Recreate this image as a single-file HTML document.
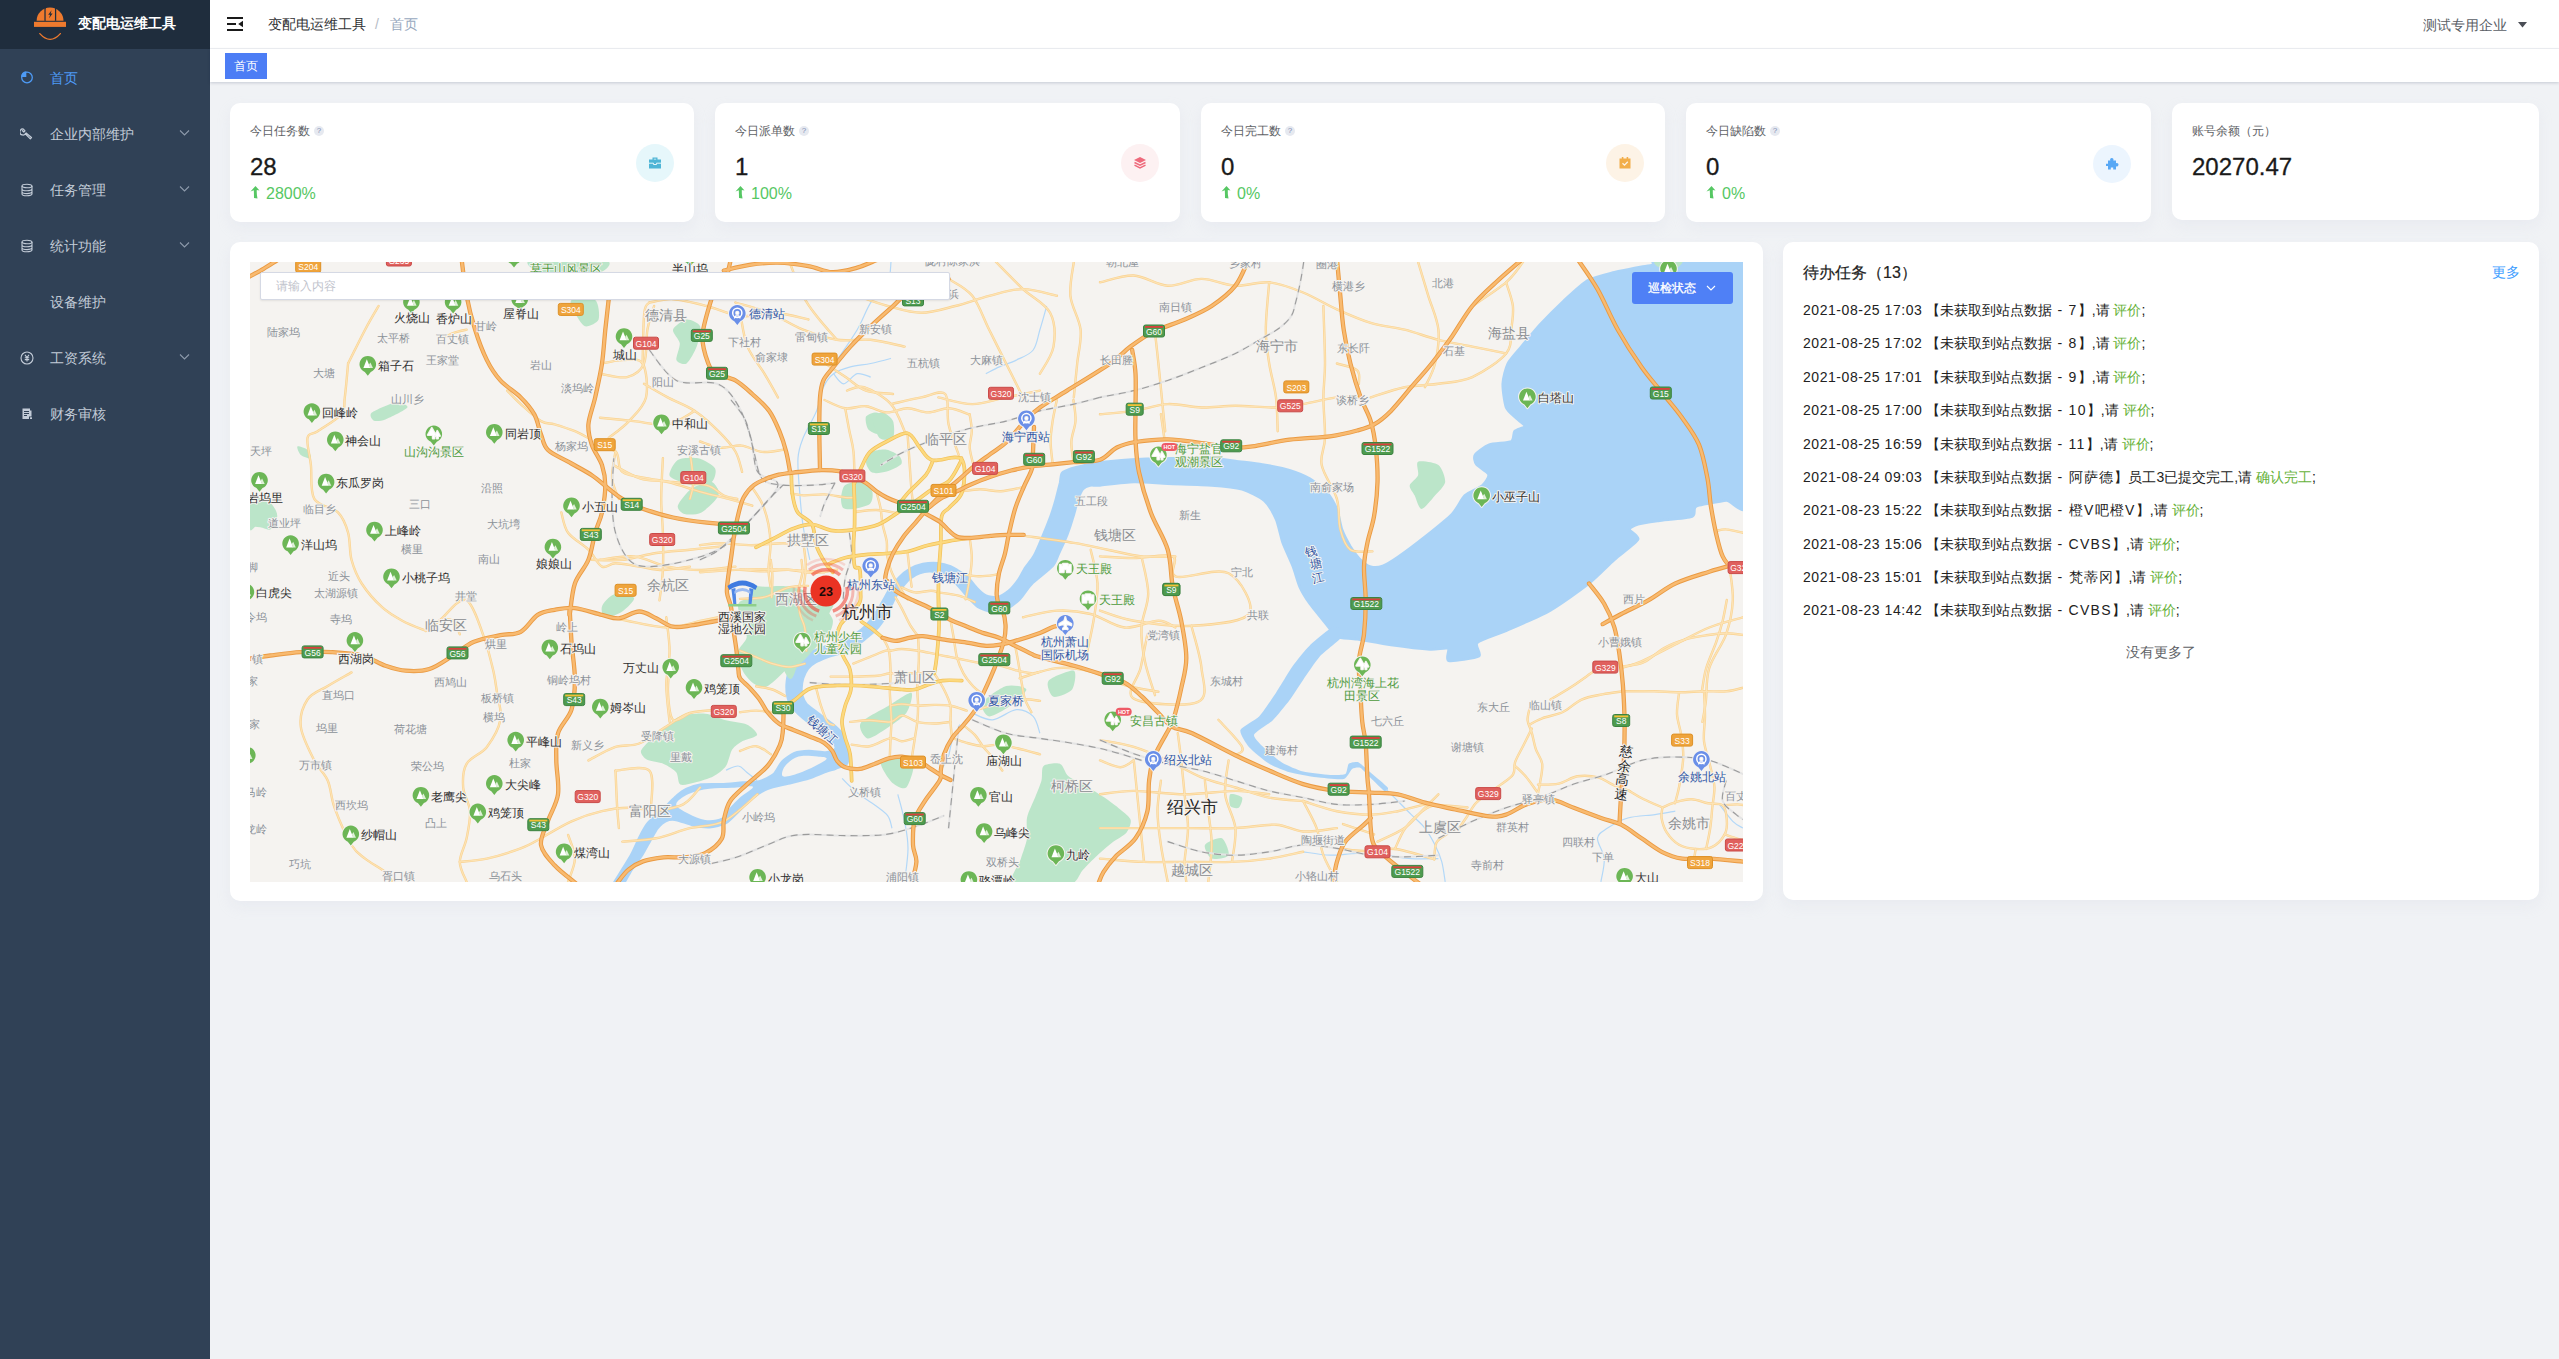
<!DOCTYPE html>
<html lang="zh">
<head>
<meta charset="utf-8">
<title>变配电运维工具</title>
<style>
*{box-sizing:border-box;margin:0;padding:0}
html,body{width:2559px;height:1359px;overflow:hidden;background:#f0f2f5;font-family:"Liberation Sans",sans-serif;color:#303133}
.abs{position:absolute;white-space:nowrap}
#side{position:absolute;left:0;top:0;width:210px;height:1359px;background:#304156}
#logo{position:absolute;left:0;top:0;width:210px;height:49px;background:#1f2d3d}
#logo .t{position:absolute;left:78px;top:0;line-height:46px;font-size:14px;font-weight:bold;color:#fff;white-space:nowrap}
.mi{position:absolute;left:0;width:210px;height:56px;line-height:56px;font-size:14px;color:#c3ccd8;white-space:nowrap}
.mi span{position:absolute;left:50px;top:0}
.mi svg.ic{position:absolute;left:20px;top:21px}
.mi svg.ar{position:absolute;left:179px;top:23px}
.mi.on{color:#4e9bf6}
#head{position:absolute;left:210px;top:0;width:2349px;height:49px;background:#fff;border-bottom:1px solid #f0f2f5}
#tags{position:absolute;left:210px;top:49px;width:2349px;height:33px;background:#fff;box-shadow:0 1px 3px rgba(0,20,60,.18)}
#tag{position:absolute;left:15px;top:4px;width:42px;height:26px;background:#4c7df5;color:#fff;font-size:12px;line-height:26px;text-align:center}
.card{position:absolute;background:#fff;border-radius:10px;box-shadow:0 6px 14px rgba(200,205,220,.18)}
.card .lb{position:absolute;left:20px;top:19px;font-size:12px;line-height:18px;color:#606266;white-space:nowrap}
.card .q{position:absolute;top:23px;width:10px;height:10px;border-radius:5px;background:#e6e9f0;color:#7f8fb5;font-size:8px;line-height:10px;text-align:center}
.card .num{position:absolute;left:20px;top:48px;font-size:24px;line-height:32px;color:#1a1a1a;white-space:nowrap;-webkit-text-stroke:.3px #1a1a1a}
.card .pc{position:absolute;left:36px;top:81px;font-size:16px;line-height:20px;color:#56c763;white-space:nowrap}
.card svg.up{position:absolute;left:20px;top:83px}
.card .cir{position:absolute;top:41px;width:38px;height:38px;border-radius:19px}
.li{position:absolute;left:20px;font-size:14px;line-height:20px;color:#222;white-space:nowrap}
.li b{font-weight:normal;color:#67b23a}
.li u{text-decoration:none;letter-spacing:.55px}
.li i{font-style:normal;letter-spacing:1.300px}
</style>
</head>
<body>
<!--SIDEBAR-->
<div id="side">
 <div id="logo">
  <svg class="abs" style="left:33px;top:6px" width="34" height="36" viewBox="0 0 34 36">
   <path d="M3.600 14.800 A13.450 13.200 0 0 1 30.500 14.800 Z" fill="#ee7a2e"/>
   <rect x="1" y="15.800" width="32" height="5.100" fill="#ee7a2e"/>
   <rect x="11.400" y="0" width="1.400" height="14.800" fill="#1f2d3d"/>
   <rect x="21.800" y="0" width="1.400" height="14.800" fill="#1f2d3d"/>
   <path d="M12.800 14.300 V3.400 a1.500 1.500 0 0 1 1.500 -1.500 h6 a1.500 1.500 0 0 1 1.500 1.500 V14.300z" fill="#ee7a2e"/>
   <path d="M18.600 4.200 L15.200 8.800 h1.900 l-1 3.400 l3.500 -4.800 h-2z" fill="#1f2d3d"/>
   <path d="M6.800 27.600 Q17.100 39 27.400 27.600" fill="none" stroke="#ee7a2e" stroke-width="1.300" stroke-linecap="round"/>
  </svg>
  <div class="t">变配电运维工具</div>
 </div>
 <div class="mi on" style="top:50px">
  <svg class="ic" style="top:20px" width="14" height="14" viewBox="0 0 14 14"><circle cx="7" cy="7.500" r="5.300" fill="none" stroke="#4e9bf6" stroke-width="1.300"/><path d="M6.300 1.200 A6 6 0 0 0 1 7 h5.300z" fill="#4e9bf6"/></svg>
  <span>首页</span></div>
 <div class="mi" style="top:106px">
  <svg class="ic" width="14" height="14" viewBox="0 0 14 14"><path d="M5.800 5.800 A3 3 0 1 1 3.200 2 L5 3.800 L3.800 5 L2 3.300 M5.800 5.800 L11.500 10.500 L10.300 11.800 L5 6.500" fill="none" stroke="#c3ccd8" stroke-width="1.200" stroke-linejoin="round"/></svg>
  <span>企业内部维护</span>
  <svg class="ar" width="11" height="8" viewBox="0 0 11 8"><path d="M1 1.500 L5.500 6 L10 1.500" fill="none" stroke="#8d9aab" stroke-width="1.100"/></svg></div>
 <div class="mi" style="top:162px">
  <svg class="ic" width="14" height="14" viewBox="0 0 14 14"><g fill="none" stroke="#c3ccd8" stroke-width="1.100"><ellipse cx="7" cy="3" rx="5" ry="1.800"/><path d="M2 3 v8 c0 1 2.200 1.800 5 1.800 s5-.8 5-1.800 v-8 M2 6 c0 1 2.200 1.800 5 1.800 s5-.8 5-1.800 M2 8.800 c0 1 2.200 1.800 5 1.800 s5-.8 5-1.800"/></g></svg>
  <span>任务管理</span>
  <svg class="ar" width="11" height="8" viewBox="0 0 11 8"><path d="M1 1.500 L5.500 6 L10 1.500" fill="none" stroke="#8d9aab" stroke-width="1.100"/></svg></div>
 <div class="mi" style="top:218px">
  <svg class="ic" width="14" height="14" viewBox="0 0 14 14"><g fill="none" stroke="#c3ccd8" stroke-width="1.100"><ellipse cx="7" cy="3" rx="5" ry="1.800"/><path d="M2 3 v8 c0 1 2.200 1.800 5 1.800 s5-.8 5-1.800 v-8 M2 6 c0 1 2.200 1.800 5 1.800 s5-.8 5-1.800 M2 8.800 c0 1 2.200 1.800 5 1.800 s5-.8 5-1.800"/></g></svg>
  <span>统计功能</span>
  <svg class="ar" width="11" height="8" viewBox="0 0 11 8"><path d="M1 1.500 L5.500 6 L10 1.500" fill="none" stroke="#8d9aab" stroke-width="1.100"/></svg></div>
 <div class="mi" style="top:274px"><span>设备维护</span></div>
 <div class="mi" style="top:330px">
  <svg class="ic" width="14" height="14" viewBox="0 0 14 14"><g fill="none" stroke="#c3ccd8" stroke-width="1.100"><circle cx="7" cy="7" r="6"/><path d="M5 3.800 L7 6.500 L9 3.800 M7 6.500 V10.500 M4.800 6.800 H9.200 M4.800 8.600 H9.200"/></g></svg>
  <span>工资系统</span>
  <svg class="ar" width="11" height="8" viewBox="0 0 11 8"><path d="M1 1.500 L5.500 6 L10 1.500" fill="none" stroke="#8d9aab" stroke-width="1.100"/></svg></div>
 <div class="mi" style="top:386px">
  <svg class="ic" width="14" height="14" viewBox="0 0 14 14"><path d="M2.500 1.500 h7.500 v2 h1.500 v8.500 h-9z" fill="#c3ccd8"/><path d="M4 4.500 h5 M4 6.500 h5 M4 8.500 h3" stroke="#304156" stroke-width="1"/><rect x="9" y="9.500" width="3" height="2.500" fill="#304156"/><rect x="10" y="10.300" width="2" height="1.700" fill="#c3ccd8"/></svg>
  <span>财务审核</span></div>
</div>
<!--HEADER-->
<div id="head">
 <svg class="abs" style="left:17px;top:17px" width="17" height="14" viewBox="0 0 17 14"><path d="M0 1 H16 M0 7 H9 M0 13 H16" stroke="#1a1a1a" stroke-width="1.800" fill="none"/><path d="M16 3.800 V10.200 L11.200 7z" fill="#1a1a1a"/></svg>
 <div class="abs" style="left:58px;top:0;line-height:48px;font-size:14px;color:#303133">变配电运维工具</div>
 <div class="abs" style="left:165px;top:0;line-height:48px;font-size:14px;color:#b6bcc6">/</div>
 <div class="abs" style="left:180px;top:0;line-height:48px;font-size:14px;color:#97a8be">首页</div>
 <div class="abs" style="left:2213px;top:0;line-height:50px;font-size:14px;color:#5a5e66">测试专用企业</div>
 <svg class="abs" style="left:2308px;top:22px" width="9" height="6" viewBox="0 0 9 6"><path d="M0 0 H9 L4.500 5.500z" fill="#4a4d55"/></svg>
</div>
<div id="tags"><div id="tag">首页</div></div>
<!--CARDS-->
<div class="card" style="left:230px;top:103px;width:464px;height:119px">
 <div class="lb">今日任务数</div><div class="q" style="left:84px">?</div>
 <div class="num">28</div>
 <svg class="up" width="10" height="13" viewBox="0 0 10 13"><path d="M5.500 0 L9.500 4.500 L6.800 4 Q6.500 8.500 7.500 12.500 L4 12 Q4 8 3.800 4.200 L0.500 5.500z" fill="#56c763"/></svg>
 <div class="pc">2800%</div>
 <div class="cir" style="left:406px;background:#e6f7fb"><svg style="position:absolute;left:12px;top:12px" width="14" height="14" viewBox="0 0 14 14"><path d="M1 3.500 h12 v9 h-12z M4.500 3.500 v-2 h5 v2 h-1.300 v-.8 h-2.400 v.8z" fill="#4fb5d6"/><path d="M1 7.200 h4.500 v1.300 h3 v-1.300 h4.500" fill="none" stroke="#e6f7fb" stroke-width="1"/></svg></div>
</div>
<div class="card" style="left:715px;top:103px;width:465px;height:119px">
 <div class="lb">今日派单数</div><div class="q" style="left:84px">?</div>
 <div class="num">1</div>
 <svg class="up" width="10" height="13" viewBox="0 0 10 13"><path d="M5.500 0 L9.500 4.500 L6.800 4 Q6.500 8.500 7.500 12.500 L4 12 Q4 8 3.800 4.200 L0.500 5.500z" fill="#56c763"/></svg>
 <div class="pc">100%</div>
 <div class="cir" style="left:406px;background:#fdf1f2"><svg style="position:absolute;left:12px;top:12px" width="14" height="14" viewBox="0 0 14 14"><path d="M7 1 L13 4 L7 7 L1 4z" fill="#ee6a7c"/><path d="M1.500 6.500 L7 9.200 L12.500 6.500 M1.500 9.200 L7 12 L12.500 9.200" fill="none" stroke="#ee6a7c" stroke-width="1.500"/></svg></div>
</div>
<div class="card" style="left:1201px;top:103px;width:464px;height:119px">
 <div class="lb">今日完工数</div><div class="q" style="left:84px">?</div>
 <div class="num">0</div>
 <svg class="up" width="10" height="13" viewBox="0 0 10 13"><path d="M5.500 0 L9.500 4.500 L6.800 4 Q6.500 8.500 7.500 12.500 L4 12 Q4 8 3.800 4.200 L0.500 5.500z" fill="#56c763"/></svg>
 <div class="pc">0%</div>
 <div class="cir" style="left:405px;background:#fdf3e6"><svg style="position:absolute;left:12px;top:12px" width="14" height="14" viewBox="0 0 14 14"><path d="M1.500 2.500 h11 v10 h-11z M3.800 1 h1.600 v2.600 h-1.600z M8.600 1 h1.600 v2.600 h-1.600z" fill="#f2ae4a"/><path d="M4.500 7.300 L6.500 9.200 L9.800 5.800" fill="none" stroke="#fdf3e6" stroke-width="1.300"/></svg></div>
</div>
<div class="card" style="left:1686px;top:103px;width:465px;height:119px">
 <div class="lb">今日缺陷数</div><div class="q" style="left:84px">?</div>
 <div class="num">0</div>
 <svg class="up" width="10" height="13" viewBox="0 0 10 13"><path d="M5.500 0 L9.500 4.500 L6.800 4 Q6.500 8.500 7.500 12.500 L4 12 Q4 8 3.800 4.200 L0.500 5.500z" fill="#56c763"/></svg>
 <div class="pc">0%</div>
 <div class="cir" style="left:407px;top:42px;background:#ecf5fe"><svg style="position:absolute;left:12px;top:12px" width="14" height="14" viewBox="0 0 14 14"><path d="M3 3.500 h2.300 a1.700 1.700 0 1 1 3 0 h2.700 v2.800 a1.700 1.700 0 1 1 0 3 v3.200 h-2.800 v-2 h-2.400 v2 h-2.800 v-3.500 h-2 v-2.300 h2z" fill="#58a8f5"/></svg></div>
</div>
<div class="card" style="left:2172px;top:103px;width:367px;height:117px">
 <div class="lb">账号余额（元）</div>
 <div class="num">20270.47</div>
</div>
<!--MAPCARD-->
<div class="card" style="left:230px;top:242px;width:1533px;height:659px"></div>
<div id="map" style="position:absolute;left:250px;top:262px;width:1493px;height:620px;overflow:hidden;background:#f5f3f0">
<svg width="1493" height="620" viewBox="0 0 1493 620" style="position:absolute;left:0;top:0;font-family:'Liberation Sans',sans-serif">
<path d="M812 211C813.4 209.3 818.8 207.4 821.4 206.5C823.9 205.6 830.5 204.1 833.8 203.4C837.2 202.6 843.3 201 850 200.2C856.7 199.5 882.7 197.4 891.5 197C900.3 196.5 917.4 196.4 925.3 196.3C933.2 196.1 954.9 195.7 959.2 195.6C963.4 195.5 958.6 195.2 961.7 195.6C964.7 196 979.4 198.2 985.4 199C991.3 199.8 1006.1 201.3 1012.4 202.4C1018.8 203.4 1034 206.5 1039.5 208.1C1045 209.8 1055.5 214 1059.8 216.6C1064.2 219.2 1073.6 226.6 1076.7 230.1C1079.9 233.7 1085.1 242.7 1086.9 247C1088.7 251.4 1090.4 263 1092 267.4C1093.6 271.7 1098.3 280.7 1100.4 284.3C1102.6 287.8 1108.2 295.4 1110.6 297.8C1113 300.2 1118.2 303.9 1120.7 304.6C1123.3 305.3 1129.4 305 1132.6 303.9C1135.7 302.8 1142.9 298.5 1147.8 295.1C1152.7 291.7 1168.6 279.8 1174.9 274.8C1181.2 269.8 1197.3 256.9 1202 252.1C1206.6 247.3 1211.3 236.9 1214.8 233.5C1218.4 230.2 1229.7 225.8 1232.4 223.4C1235.2 220.9 1239.2 215 1238.5 212.5C1237.8 210.1 1227.9 204.7 1226.3 202.4C1224.7 200.1 1223.5 195.2 1225 192.9C1226.5 190.6 1235 184.3 1239.2 182.7C1243.4 181.2 1258.2 180.9 1261.2 179.4C1264.1 177.8 1263 171 1264.6 169.2C1266.1 167.4 1274.5 165.6 1274.7 164.1C1274.9 162.6 1268.4 158.5 1266.3 156.4C1264.1 154.2 1257.7 149.5 1256.1 145.5C1254.5 141.5 1252.5 127 1252.7 121.8C1252.9 116.7 1255.6 105.9 1257.8 101.5C1260 97.2 1267.6 89.1 1271.3 84.6C1275.1 80.1 1285 67.9 1289.9 62.6C1294.9 57.3 1308.1 44.1 1313.6 38.9C1319.2 33.8 1331.4 22 1337.3 18.6C1343.2 15.3 1359.7 11.5 1364.4 10.2C1369.1 8.8 1374.8 8.1 1377.9 7.4C1381.1 6.8 1388.5 5.3 1391.5 4.7C1394.4 4.2 1401.3 3.7 1403.3 2.7C1405.3 1.8 1397.1 -2.7 1408.4 -3.4C1419.6 -4.1 1489.1 -31.1 1499.8 -3.4C1510.4 24.4 1502.5 206.3 1499.8 234.5C1497 262.8 1482.3 237.4 1476.1 238.6C1469.8 239.7 1450.2 242.5 1446.3 244.3C1442.3 246.2 1446.7 252.8 1442.2 254.5C1437.8 256.2 1414.7 258 1408.4 258.9C1402.1 259.8 1391.4 261.3 1388.1 262.3C1384.7 263.3 1379.6 265.6 1379.6 267.4C1379.6 269.1 1389.9 274 1388.1 277.5C1386.3 281.1 1370.1 292.7 1364.4 297.8C1358.7 302.9 1346.5 315.6 1339 321.5C1331.5 327.4 1309.8 343 1300.1 348.6C1290.4 354.1 1264.6 365.1 1256.1 368.9C1247.6 372.6 1230.5 377.8 1227.3 380.7C1224.2 383.7 1232.4 392.2 1229 394.3C1225.7 396.4 1202.2 399.6 1198.6 398.7C1194.9 397.8 1200.1 387.8 1197.9 386.5C1195.7 385.2 1186.6 387.9 1180 387.5C1173.3 387.1 1149.5 384.3 1141 383.1C1132.6 381.9 1113.5 378.3 1107.2 377.3C1100.9 376.4 1090.1 376.2 1086.9 375C1083.7 373.8 1083.3 371.1 1080.1 367.2C1077 363.3 1063.4 346.7 1059.8 341.8C1056.3 336.9 1051.6 329.2 1049.7 324.9C1047.7 320.5 1044.9 309.7 1042.9 304.6C1040.9 299.4 1034.7 286.4 1032.7 280.9C1030.8 275.4 1028.2 262.1 1026 257.2C1023.8 252.3 1018.1 242.1 1014.1 238.6C1010.2 235.1 998.3 229.2 992.1 227.4C986 225.6 970.4 224 961.7 223.4C953 222.7 926.8 222.1 917.7 221.7C908.6 221.3 891.7 219.8 883.8 220C875.9 220.2 855.1 222.9 850 223.4C844.9 223.8 842.1 223 840 223.5C838 223.9 834.2 225.6 832.8 227.2C831.4 228.9 829.1 234.4 828 237.6C826.9 240.7 824.7 250.1 823.4 254.2C822.2 258.3 818.9 268.5 817.2 272.9C815.5 277.2 810.6 287.9 808.9 291.5C807.2 295.2 805.9 300.4 802.7 304C799.5 307.6 785.2 318.4 781.4 322.3C777.6 326.1 772.9 334 770.1 336.9C767.3 339.7 760.3 345.1 757.1 346.6C753.9 348.1 746 350 742.6 349.8C739.2 349.6 731 346.8 728 345C725 343.1 719.3 336.5 716.7 333.6C714 330.8 708.2 323.1 705.3 320.7C702.5 318.2 695.2 313.9 692.4 312.6C689.5 311.2 683.7 309.5 681 309.3C678.4 309.1 672.2 310.1 669.7 311C667.3 311.8 662.1 314.9 660 316.6C657.9 318.3 653.6 323.4 651.9 325.5C650.2 327.7 646.9 332.6 645.4 335.2C643.9 337.9 640.5 345.4 638.9 348.2C637.4 351 634.2 357.1 632.5 359.5C630.8 362 626.5 367.2 624.4 369.2C622.3 371.3 617.1 375.4 614.7 377.3C612.2 379.2 606.2 383.8 603.3 385.4C600.5 387 593.4 390 590.4 391.1C587.4 392.2 580.3 394.1 577.4 395.1C574.6 396.2 568.4 398.7 566.1 400C563.8 401.3 559.5 404.6 558 406.5C556.5 408.4 553.9 413.9 553.1 416.2C552.4 418.5 551.6 423.8 551.5 425.9C551.4 428 551.8 432.1 552.3 434C552.9 435.9 555 440.4 556.4 442.1C557.8 443.8 562.4 447 564.5 448.6C566.6 450.2 571.9 454.2 574.2 455.9C576.5 457.6 581.8 461.3 583.9 463.1C586 464.9 590.5 469.2 592 471.2C593.5 473.3 596.1 478.7 596.9 480.9C597.6 483.2 598.3 488.7 598.5 490.7C598.6 492.6 598.4 496.6 598.1 497.9C597.9 499.3 597.7 501.3 596.3 502.3C594.9 503.3 588.6 505.5 585.9 506.5C583.3 507.4 576.6 509.5 573.5 510.6C570.3 511.8 563.1 515.1 559 516.4C554.8 517.7 543.1 520.4 538.2 521.6C533.4 522.8 521.8 525 517.5 526.8C513.1 528.6 504.3 534.5 500.9 537.2C497.5 539.8 491.3 546.8 488.4 549.6C485.5 552.4 479.4 559.2 476 561C472.6 562.8 463.3 564.9 459.4 565.2C455.5 565.4 446.7 564 442.8 563.1C438.9 562.3 429.3 558.4 426.2 557.9C423 557.4 418 558 415.8 559C413.6 559.9 409.2 564.2 407.5 566.2C405.8 568.3 403.1 573.4 401.3 576.6C399.5 579.7 394.2 589.6 392 593.2C389.7 596.8 383.9 604.2 381.6 607.7C379.3 611.2 374.4 621.5 372.2 623.3C370.1 625.1 362.9 625.1 362.9 623.3C362.9 621.5 370.1 611.3 372.2 607.7C374.4 604.1 379.5 596 381.6 592.1C383.6 588.3 388.1 578 389.9 574.5C391.7 571 395.1 564.7 397.1 562.1C399.2 559.4 405.1 554 407.5 551.7C409.9 549.4 415.7 544.4 417.9 542.4C420.1 540.3 424 535.9 426.2 534.1C428.4 532.2 433.7 528.1 436.6 526.8C439.5 525.5 447 523.2 451.1 522.6C455.2 522.1 467 522.5 471.8 522.2C476.7 522 488.2 520.9 492.6 520.6C496.9 520.3 505.5 520.5 509.2 519.5C512.8 518.6 521 514.6 523.7 512.3C526.4 510 529.6 502.3 532 499.8C534.4 497.4 541.3 492.4 544.4 491.1C547.6 489.9 555.3 489.1 559 489C562.6 489 572.6 490.6 575.6 490.5C578.5 490.3 583.1 488.5 584.3 487.8C585.4 487.1 586.1 485.5 585.5 484.2C584.9 482.8 580.9 478 579 476.1C577.2 474.2 571.8 469.9 569.3 468C566.9 466.1 560.5 461.8 558 459.9C555.5 458 550.3 453.7 548.3 451.8C546.3 449.9 542.3 445.8 541 443.7C539.7 441.6 537.8 436.5 537.3 434C536.8 431.5 536.5 425.3 536.6 422.7C536.8 420 537.6 413.8 538.6 411.3C539.6 408.9 543.2 403.7 545 401.6C546.9 399.5 552.5 395 554.8 393.5C557 392 561.8 389.8 564.5 388.7C567.1 387.5 574.4 384.9 577.4 383.8C580.4 382.7 587.5 380.1 590.4 378.9C593.2 377.8 599.3 375.4 601.7 374.1C604.2 372.8 609.3 369.3 611.4 367.6C613.5 365.9 617.6 361.8 619.5 359.5C621.4 357.3 625.9 350.8 627.6 348.2C629.3 345.5 632.6 339.5 634.1 336.9C635.6 334.2 638.9 328 640.6 325.5C642.3 323.1 646.4 318 648.7 315.8C650.9 313.6 657.2 308.5 660 306.9C662.8 305.3 669.7 302.7 672.9 302C676.2 301.4 684.3 301 687.5 301.2C690.7 301.5 697.1 303 700.5 304.5C703.9 306 713.6 311.7 716.7 314.2C719.7 316.6 724.1 323.3 726.4 325.5C728.6 327.8 733.6 332.5 736.1 333.6C738.5 334.8 744.8 335.8 747.4 335.2C750.1 334.7 756.3 330.8 758.8 328.8C761.2 326.7 766.6 320.1 768.5 317.4C770.4 314.8 773.1 308.9 774.9 306.1C776.8 303.3 782 297.2 784 293.6C786.1 290 790.4 279.5 792.3 274.9C794.3 270.3 799 258.5 800.6 254.2C802.2 249.8 804.7 241.5 805.8 237.6C806.9 233.7 809.2 224.1 810 221C810.7 217.9 810.7 212.7 812 211Z" fill="#aad3f7" stroke="#aad3f7" stroke-width="2.5" stroke-linejoin="round"/>
<path d="M535.1 504C537.7 500.7 543.2 496.2 548.6 494.6C553.9 493.1 562.6 494.3 567.3 494.6C571.9 495 576.9 495.2 576.6 496.7C576.3 498.3 569.9 501.6 565.2 504C560.5 506.4 553.9 509.5 548.6 511.2C543.2 513 535.3 515.6 533 514.3C530.8 513.1 532.5 507.3 535.1 504Z" fill="#f5f3f0"/>
<path d="M426.2 542.4C426.2 539.1 433.1 534.6 438.6 532C444.2 529.4 452.1 527.8 459.4 526.8C466.6 525.8 474.9 526.1 482.2 525.8C489.5 525.4 501.6 523.2 502.9 524.7C504.3 526.3 494.3 531.6 490.5 535.1C486.7 538.6 483.2 542 480.1 545.5C477 548.9 476 553.8 471.8 555.8C467.7 557.9 460.8 558.6 455.2 557.9C449.7 557.2 443.5 554.3 438.6 551.7C433.8 549.1 426.2 545.6 426.2 542.4Z" fill="#f5f3f0"/>
<path d="M1083.5 364.7C1080.1 365.8 1063.9 379.5 1059.8 383.4C1055.8 387.2 1046.3 398.9 1042.9 403.7C1039.5 408.4 1029.4 425.7 1026 430.7C1022.6 435.8 1012.6 450.7 1009.1 454.4C1005.5 458.1 991.5 464.9 990.4 468C989.4 471 996 481.5 998.9 484.9C1001.8 488.3 1015.1 499.3 1019.2 501.8C1023.3 504.3 1034.8 508.9 1039.5 510.3C1044.3 511.6 1061.2 514.7 1066.6 515.3C1072 516 1090.1 517.9 1093.7 517C1097.2 516.2 1100.4 508 1102.1 506.9C1103.8 505.8 1108.7 505 1110.6 505.9C1112.4 506.8 1118.4 513.7 1120.7 516C1123.1 518.3 1132.6 527.9 1134.3 528.9C1136 529.8 1139.2 527.5 1137.7 525.5C1136.1 523.5 1122 511.8 1119 509.3C1116.1 506.7 1109.9 500.9 1107.9 500.1C1105.8 499.4 1100 500.6 1098.7 501.8C1097.5 503 1097.2 510.8 1095.4 512C1093.5 513.1 1084.4 513.2 1080.1 513C1075.9 512.7 1057.8 510.8 1053.1 509.6C1048.3 508.4 1036.5 503.3 1032.7 501.1C1029 498.9 1018.7 490.4 1015.8 487.6C1012.9 484.8 1003.3 475.9 1004 473C1004.7 470.1 1019 462 1022.6 458.5C1026.1 455 1036.5 442.2 1039.5 438.2C1042.6 434.1 1050 422.3 1053.1 417.9C1056.1 413.5 1065.9 398.7 1070 394.2C1074 389.7 1092.3 376.1 1093.7 373.2C1095 370.3 1086.9 363.7 1083.5 364.7Z" fill="#aad3f7"/>
<path d="M1136 527.2C1137.9 529.2 1143.6 534.8 1147.8 539C1152 543.3 1156.8 548.1 1161.3 552.6C1165.9 557.1 1170.9 561 1174.9 566.1C1178.8 571.2 1182.2 577.4 1185 583C1187.9 588.7 1190.1 593.8 1191.8 599.9C1193.5 606.1 1194.6 616.6 1195.2 619.9" fill="none" stroke="#b3d8f8" stroke-width="1.2"/>
<path d="M1053.1 589.8C1057.6 590.4 1071.1 592.9 1080.1 593.2C1089.2 593.5 1098.2 591.5 1107.2 591.5C1116.2 591.5 1125.2 592.3 1134.3 593.2C1143.3 594 1152.3 596 1161.3 596.6C1170.4 597.1 1183.9 596.6 1188.4 596.6" fill="none" stroke="#b3d8f8" stroke-width="1.2"/>
<path d="M1350.9 619.9C1351.4 616 1354.8 603.8 1354.2 596.6C1353.7 589.3 1346.9 581.3 1347.5 576.3C1348 571.2 1352.6 569.5 1357.6 566.1C1362.7 562.7 1370 558.2 1377.9 556C1385.8 553.7 1397.1 553.7 1405 552.6C1412.9 551.4 1421.9 549.7 1425.3 549.2" fill="none" stroke="#b3d8f8" stroke-width="1.2"/>
<path d="M1469.3 542.4C1471.6 545.2 1478.9 555.4 1482.8 559.3C1486.8 563.3 1491.3 565 1493 566.1" fill="none" stroke="#b3d8f8" stroke-width="1.2"/>
<path d="M559.8 297.8C558.7 292.2 554.7 275.2 553.1 264C551.4 252.7 550.5 241.4 549.7 230.1C548.8 218.8 547.4 205.3 548 196.3C548.5 187.3 550 183.9 553.1 176C556.2 168.1 563.2 157.4 566.6 148.9C570 140.4 570.5 131.4 573.4 125.2C576.2 119 579 115.1 583.5 111.7C588 108.3 594.2 106.6 600.4 104.9C606.6 103.2 614 102.9 620.7 101.5C627.5 100.1 637.7 97.3 641 96.4" fill="none" stroke="#b3d8f8" stroke-width="1.2"/>
<path d="M583.5 111.7C585.2 113.4 589.7 121.8 593.7 121.8C597.6 121.8 602.7 112.8 607.2 111.7C611.7 110.6 618.5 114.5 620.7 115.1" fill="none" stroke="#b3d8f8" stroke-width="1.2"/>
<path d="M796.7 44C795.6 47.9 792.2 60.4 789.9 67.7C787.7 75 787.1 82.9 783.2 88C779.2 93.1 771.9 95.3 766.3 98.1C760.6 101 754.4 102.7 749.3 104.9C744.3 107.2 738.1 110.6 735.8 111.7" fill="none" stroke="#b3d8f8" stroke-width="1.2"/>
<path d="M641 0C640.5 3.4 641 13.5 637.7 20.3C634.3 27.1 625.8 32.7 620.7 40.6C615.7 48.5 612.8 58.1 607.2 67.7C601.6 77.3 590.3 93.1 586.9 98.1" fill="none" stroke="#b3d8f8" stroke-width="1.2"/>
<path d="M722.3 451C725.6 452.2 735.2 458.4 742.6 457.8C749.9 457.2 759.5 448.2 766.3 447.7C773 447.1 779.2 450.5 783.2 454.4C787.1 458.4 788.8 468.5 789.9 471.3" fill="none" stroke="#b3d8f8" stroke-width="1.2"/>
<path d="M647.8 532.3C648.9 536.8 652.9 550.3 654.6 559.3C656.3 568.4 658 576.3 658 586.4C658 596.5 655.1 614.3 654.6 619.9" fill="none" stroke="#b3d8f8" stroke-width="1.2"/>
<path d="M476 508.1C478 507.4 485 503.6 488.4 504C491.9 504.3 493.6 507.8 496.7 510.2C499.8 512.6 505.4 517.1 507.1 518.5" fill="none" stroke="#b3d8f8" stroke-width="1.2"/>
<path d="M592.2 516.4C593.5 517.8 597 521.6 600.5 524.7C603.9 527.8 608.8 532 612.9 535.1C617.1 538.2 621.2 540.3 625.4 543.4C629.5 546.5 635 550 637.8 553.8C640.6 557.6 641.3 564.1 642 566.2" fill="none" stroke="#b3d8f8" stroke-width="1.2"/>
<path d="M710 462.5C708.7 465.2 704.1 473.5 702.1 479.1C700.1 484.6 700 490.5 698 495.7C695.9 500.9 691.1 507.8 689.7 510.2" fill="none" stroke="#b3d8f8" stroke-width="1.2"/>
<path d="M501.9 332C499.4 320.1 513.8 325.7 518.5 324.7C523.2 323.7 532.4 323.8 537.1 324.3C541.8 324.8 550.3 326.9 553.7 328.5C557.2 330 560.3 333.9 563.1 336.1C565.8 338.4 571.9 342.6 574.5 345.5C577.1 348.4 582.1 354.6 582.8 357.9C583.5 361.2 581.6 367 579.7 370.4C577.7 373.7 571.2 379.6 568.3 382.8C565.4 386 560.7 391.3 557.9 394.2C555.1 397.1 550.3 402 547.5 404.6C544.7 407.2 543.2 423.6 537.1 413.9C531.1 404.3 504.4 343.9 501.9 332Z" fill="#bbe5c9"/>
<path d="M493.6 338C505 335.2 566.2 336.3 577.6 338C589.1 339.7 580.8 347.1 579.7 350.4C578.6 353.8 572.1 358.7 569.3 362.9C566.6 367 562.3 376.9 559 381.6C555.6 386.3 548.3 393.9 544.4 398.2C540.6 402.5 533.8 410.1 529.9 413.7C526 417.3 519 424.2 515.4 425.1C511.8 426.1 506 423.2 502.9 421C499.9 418.8 494.6 412.7 492.6 408.5C490.6 404.4 487.5 394.3 488 389.9C488.6 385.4 496.2 379.5 496.7 375.3C497.3 371.2 492.6 363.7 492.2 358.7C491.7 353.8 482.2 340.8 493.6 338Z" fill="#bbe5c9"/>
<path d="M430.3 454.2C435.9 452.2 449.1 451.1 455.2 451.7C461.3 452.2 470.4 456.9 476 458.3C481.5 459.8 492.6 460.5 496.7 462.5C500.9 464.4 507.6 470.6 507.1 472.9C506.5 475.1 495.9 477.1 492.6 479.1C489.3 481 484.4 484.1 482.2 487.4C480 490.7 478.5 500.4 476 504C473.5 507.6 467.7 512.1 463.5 514.3C459.4 516.6 449.3 519.5 444.9 520.6C440.4 521.7 432.8 524 430.3 522.6C427.8 521.3 428.4 513 426.2 510.2C424 507.4 417.6 503.6 413.7 501.9C409.9 500.2 400.2 499.4 397.1 497.8C394.1 496.1 390.6 491.9 390.9 489.5C391.2 487 396.2 482.1 399.2 479.1C402.3 476 409.6 470 413.7 466.6C417.9 463.3 424.8 456.2 430.3 454.2Z" fill="#bbe5c9"/>
<path d="M616 154.6C617.1 152.4 623.6 150.2 626.3 150.4C629.1 150.7 635.2 154.5 636.7 156.7C638.2 158.9 638.9 165 637.8 167C636.7 169.1 631.1 172.2 628.4 172.2C625.8 172.2 619.7 169.4 618 167C616.4 164.7 614.9 156.8 616 154.6Z" fill="#bbe5c9"/>
<path d="M616 200.2C616 197.5 619.4 191.5 622.2 189.9C625 188.2 633.1 187.2 636.7 187.8C640.3 188.3 647.2 192.1 649.2 194C651.1 196 652.9 200.2 651.2 202.3C649.6 204.4 640.6 208.5 636.7 209.6C632.8 210.7 625 211.9 622.2 210.6C619.4 209.4 616 203 616 200.2Z" fill="#bbe5c9"/>
<path d="M591.1 235.5C591.4 232.5 592.5 225.1 595.2 223.1C598 221 608.2 219.1 611.8 220C615.4 220.8 621.1 226.4 622.2 229.3C623.3 232.2 622.6 239.4 620.1 241.7C617.6 244.1 607.1 246.4 603.5 246.9C599.9 247.5 594.8 247.4 593.2 245.9C591.5 244.4 590.8 238.6 591.1 235.5Z" fill="#bbe5c9"/>
<path d="M419.4 213.2C418.9 210.3 424 200.2 427.8 198C431.7 195.7 443.2 195.2 448.1 196.3C453.1 197.4 463.3 203.3 465.1 206.4C466.9 209.6 464.4 217.7 461.7 220C459 222.2 448.8 223.4 444.8 223.4C440.7 223.4 434.6 221.3 431.2 220C427.8 218.6 419.8 216.1 419.4 213.2Z" fill="#bbe5c9"/>
<path d="M427.8 243.7C428.7 240.3 436.9 229.9 441.4 226.7C445.9 223.6 458.1 219.1 461.7 220C465.3 220.9 469.8 229.4 468.4 233.5C467.1 237.6 456 247.9 451.5 250.4C447 252.9 437.8 253 434.6 252.1C431.4 251.2 426.9 247 427.8 243.7Z" fill="#bbe5c9"/>
<path d="M450 217.9C451.4 214.4 457.9 218.4 460.4 220C462.9 221.5 468.7 226.4 468.7 229.3C468.7 232.2 462.9 239.5 460.4 241.7C457.9 243.9 451.4 249.1 450 245.9C448.6 242.7 448.6 221.3 450 217.9Z" fill="#bbe5c9"/>
<path d="M423 67.7C423.9 64.5 433 58 436.6 57.5C440.2 57.1 448.7 60.7 450.1 64.3C451.5 67.9 448.5 79.6 446.7 84.6C444.9 89.6 439.3 99.7 436.6 101.5C433.9 103.3 427.3 100.8 426.4 98.1C425.5 95.4 430.2 85.3 429.8 81.2C429.3 77.2 422.1 70.8 423 67.7Z" fill="#bbe5c9"/>
<path d="M321.5 37.9C324.2 36.2 341.6 35.3 345.2 37.9C348.8 40.5 349.9 54 348.6 57.5C347.2 61.1 338.2 65.2 335 64.3C331.9 63.4 326.7 54.3 324.9 50.8C323.1 47.2 318.8 39.6 321.5 37.9Z" fill="#bbe5c9"/>
<path d="M280.9 -1.7C289.9 -3.2 345.9 -3.2 355.3 -1.7C364.8 -0.2 356.5 7.7 352 9.5C347.4 11.2 330.1 11.5 321.5 11.5C312.9 11.5 293.1 11.2 287.7 9.5C282.2 7.7 271.9 -0.2 280.9 -1.7Z" fill="#bbe5c9"/>
<path d="M121.8 150.6C124.8 148.2 140.8 141.1 145.5 140.4C150.3 139.8 158.7 143.3 157.4 145.5C156 147.8 139.9 155.7 135.4 157.4C130.9 159.1 125.3 159.3 123.5 158.4C121.7 157.5 118.9 153 121.8 150.6Z" fill="#bbe5c9"/>
<path d="M0 236.9C2.3 233.1 13.3 236.3 16.9 238.6C20.5 240.8 26.6 250 27.1 253.8C27.5 257.7 23 266 20.3 267.4C17.6 268.7 9.5 264 6.8 264C4.1 264 0.9 271 0 267.4C-0.9 263.7 -2.3 240.7 0 236.9Z" fill="#bbe5c9"/>
<path d="M47.4 184.4C48.3 183.8 55.7 186.2 57.5 187.8C59.3 189.4 61.8 195.6 60.9 196.3C60 197 52.6 194.5 50.8 192.9C49 191.3 46.5 185.1 47.4 184.4Z" fill="#bbe5c9"/>
<path d="M622.7 155.7C623.1 152.3 630.1 150.1 632.8 150.6C635.6 151 641.6 155.7 643 159.1C644.4 162.4 644.8 173.7 643 176C641.2 178.2 632.2 178.7 629.5 176C626.8 173.3 622.2 159.1 622.7 155.7Z" fill="#bbe5c9"/>
<path d="M793.6 504C796.1 501.8 806.8 500.5 810.2 501.9C813.5 503.3 814.9 511.3 818.5 514.3C822.1 517.4 832.4 522 837.1 524.7C841.8 527.5 849.3 532.1 853.7 535.1C858.2 538.1 866.7 544.5 870.3 547.5C873.9 550.6 879.9 554.9 880.7 557.9C881.5 561 879 567.3 876.6 570.4C874.1 573.4 865.9 577.7 862 580.7C858.2 583.8 851.4 589.6 847.5 593.2C843.6 596.8 836.9 603.7 833 607.7C829.1 611.7 827.9 621.2 818.5 623.3C809.1 625.3 768.8 626.7 762.4 623.3C756.1 619.8 768.8 603.6 770.7 597.3C772.7 591.1 776.1 582.1 777 576.6C777.8 571.1 775.9 561.4 777 555.8C778.1 550.3 783.3 540.1 785.3 535.1C787.2 530.1 790.4 522.6 791.5 518.5C792.6 514.3 791.1 506.2 793.6 504Z" fill="#bbe5c9"/>
<path d="M1168.1 199.7C1170.8 198.3 1184.8 200.3 1188.4 203.1C1192 205.8 1195.6 215.9 1195.2 220C1194.7 224 1188.2 229.9 1185 233.5C1181.9 237.1 1174.2 247 1171.5 247C1168.8 247 1166.3 236.7 1164.7 233.5C1163.2 230.4 1159.2 226.1 1159.7 223.4C1160.1 220.7 1167 216.4 1168.1 213.2C1169.2 210 1165.4 201 1168.1 199.7Z" fill="#bbe5c9"/>
<path d="M610.6 461.2C613.3 456.9 630.9 448.3 637.7 444.3C644.4 440.2 658.9 429.8 661.3 430.7C663.8 431.6 659.9 446.1 656.3 451C652.7 456 639.5 464.6 634.3 468C629.1 471.3 620.5 477.3 617.4 476.4C614.2 475.5 607.9 465.5 610.6 461.2Z" fill="#bbe5c9"/>
<path d="M630.9 498.4C633.8 495.6 659.7 494.8 663 498.4C666.4 502 659.2 522.7 656.3 525.5C653.3 528.3 644.4 523 641 519.4C637.7 515.8 628 501.2 630.9 498.4Z" fill="#bbe5c9"/>
<path d="M732.4 440.9C734.7 436.8 750.2 425.8 756.1 424C762 422.2 776 424.6 776.4 427.4C776.9 430.1 764.5 440.7 759.5 444.3C754.5 447.9 742.8 454.9 739.2 454.4C735.6 454 730.2 445 732.4 440.9Z" fill="#bbe5c9"/>
<path d="M798.4 418.9C801.1 415.4 820.6 407.6 823.8 408.7C826.9 409.9 824.8 423.9 822.1 427.4C819.4 430.8 806.6 435.9 803.5 434.8C800.3 433.7 795.7 422.4 798.4 418.9Z" fill="#bbe5c9"/>
<path d="M352 344.4C353.1 341.4 359.5 333.7 363.8 332.6C368.1 331.5 383 333.7 384.1 336C385.2 338.2 376.1 346.9 372.3 349.5C368.4 352.1 358 356.3 355.3 355.6C352.6 354.9 350.8 347.5 352 344.4Z" fill="#bbe5c9"/>
<path d="M0 239.5C2.7 236.8 16.7 239.2 20.3 241.2C23.9 243.3 28 251.6 27.1 254.8C26.2 257.9 17.1 264 13.5 264.9C9.9 265.8 1.8 264.9 0 261.5C-1.8 258.1 -2.7 242.2 0 239.5Z" fill="#bbe5c9"/>
<path d="M1405 -1.7C1408.2 -2.6 1429.4 -2.8 1432.1 -1.7C1434.8 -0.6 1428.5 5.9 1425.3 6.8C1422.2 7.7 1411.1 6.2 1408.4 5.1C1405.7 3.9 1401.9 -0.8 1405 -1.7Z" fill="#bbe5c9"/>
<path d="M954.9 583C956.3 580.3 968.7 574.9 971.8 576.3C975 577.6 980 590.5 978.6 593.2C977.2 595.9 964.8 597.9 961.7 596.6C958.5 595.2 953.6 585.7 954.9 583Z" fill="#bbe5c9"/>
<path d="M980.3 532.3C981.9 531.1 991 533.8 992.1 535.6C993.3 537.5 990.3 544.7 988.8 545.8C987.2 546.9 981.4 545.9 980.3 544.1C979.2 542.3 978.7 533.4 980.3 532.3Z" fill="#bbe5c9"/>
<g fill="none" stroke-linecap="round" stroke-linejoin="round"><g stroke="#f9d291" stroke-width="2.400"><path d="M850 20.3C855.6 19.2 872.6 13 883.8 13.5C895.1 14.1 906.4 23.1 917.7 23.7C929 24.3 940.2 16.9 951.5 16.9C962.8 16.9 974.1 23.1 985.4 23.7C996.6 24.3 1007.9 19.2 1019.2 20.3C1030.5 21.4 1041.8 25.9 1053.1 30.5C1064.3 35 1075.6 42.3 1086.9 47.4C1098.2 52.5 1109.5 57.5 1120.7 60.9C1132 64.3 1143.3 64.9 1154.6 67.7C1165.9 70.5 1177.1 75 1188.4 77.8C1199.7 80.7 1211 82.3 1222.3 84.6C1233.5 86.9 1250.5 90.2 1256.1 91.4"/><path d="M1019.2 20.3C1018.6 28.2 1015.8 54.1 1015.8 67.7C1015.8 81.2 1017.5 90.2 1019.2 101.5C1020.9 112.8 1024.6 124.1 1026 135.4C1027.4 146.6 1027.4 163.6 1027.7 169.2"/><path d="M1073.4 44C1073.6 53.6 1075 86.3 1075 101.5C1075 116.8 1073.4 123 1073.4 135.4C1073.4 147.8 1075.3 164.7 1075 176C1074.8 187.3 1069.7 192.9 1071.7 203.1C1073.6 213.2 1083.8 226.2 1086.9 236.9C1090 247.6 1088 258.9 1090.3 267.4C1092.5 275.8 1095.1 284 1100.4 287.7C1105.8 291.3 1118.8 289.1 1122.4 289.4"/><path d="M850 152.3C855.6 151.7 872.6 150.6 883.8 148.9C895.1 147.2 906.4 142.7 917.7 142.1C929 141.6 940.2 145.2 951.5 145.5C962.8 145.8 973 143.8 985.4 143.8C997.8 143.8 1014.7 145.8 1026 145.5C1037.3 145.2 1042.9 143.8 1053.1 142.1C1063.2 140.4 1077.3 136.5 1086.9 135.4C1096.5 134.2 1106.6 135.4 1110.6 135.4"/><path d="M1168.1 0C1169.8 5.6 1174.9 22.6 1178.3 33.8C1181.7 45.1 1187.3 56.4 1188.4 67.7C1189.5 79 1187.3 91.9 1185 101.5C1182.8 111.1 1176.6 121.3 1174.9 125.2"/><path d="M1256.1 20.3C1257.2 24.3 1262 36.1 1262.9 44C1263.7 51.9 1262.3 59.8 1261.2 67.7C1260.1 75.6 1262.6 83.5 1256.1 91.4C1249.6 99.3 1233.5 110 1222.3 115.1C1211 120.1 1199.7 120.1 1188.4 121.8C1177.1 123.5 1165.9 123 1154.6 125.2C1143.3 127.5 1126.4 133.7 1120.7 135.4"/><path d="M1273 0C1270.2 3.4 1264.6 13 1256.1 20.3C1247.6 27.6 1227.9 40 1222.3 44"/><path d="M1086.9 101.5C1090.3 102.7 1103.5 104.9 1107.2 108.3C1110.9 111.7 1108.6 119.6 1108.9 121.8"/><path d="M910.9 152.3 L914.3 176"/><path d="M850 294.4C855.6 294.7 871.7 296.1 883.8 296.1C896 296.1 915.7 291.3 922.8 294.4C929.8 297.5 916.8 311.9 926.1 314.7C935.5 317.6 966.5 305.1 978.6 311.3C990.7 317.6 1005.1 343.2 998.9 352C992.7 360.7 960.6 362.7 941.4 363.8C922.2 364.9 899.1 361.3 883.8 358.7C868.6 356.2 855.6 350.3 850 348.6"/><path d="M941.4 363.8C943.1 370.9 950.4 393.4 951.5 406.1C952.7 418.8 959.4 434.9 948.1 439.9C936.9 445 893.4 442.2 883.8 436.6C874.3 430.9 888.4 416.8 890.6 406.1C892.9 395.4 896.3 377.9 897.4 372.3"/><path d="M1493 270.7C1490.2 270.2 1480.6 267.6 1476.1 267.4C1471.6 267.1 1467.6 268.8 1465.9 269"/><path d="M1493 355.3C1487.4 357 1470.4 361 1459.2 365.5C1447.9 370 1436.6 376.8 1425.3 382.4C1414 388.1 1400.5 395.4 1391.5 399.3C1382.4 403.3 1374.6 405 1371.2 406.1"/><path d="M1479.5 304.6C1480 310.2 1483.4 327.1 1482.8 338.4C1482.3 349.7 1480 361 1476.1 372.3C1472.1 383.5 1462.5 394.8 1459.2 406.1C1455.8 417.4 1456.9 431 1455.8 439.9C1454.6 448.9 1453 456.6 1452.4 459.9"/><path d="M850 478.1C855.6 479.2 872.6 481.5 883.8 484.9C895.1 488.3 906.4 493.3 917.7 498.4C929 503.5 940.2 510.8 951.5 515.3C962.8 519.9 974.1 522.1 985.4 525.5C996.6 528.9 1007.9 533.4 1019.2 535.6C1030.5 537.9 1047.4 538.5 1053.1 539"/><path d="M883.8 498.4C884.4 504.1 886.1 521 887.2 532.3C888.4 543.5 889.5 554.8 890.6 566.1C891.7 577.4 893.4 594.3 894 599.9"/><path d="M927.8 471.3C928.4 475.9 930.1 488.3 931.2 498.4C932.3 508.6 933.5 521 934.6 532.3C935.7 543.5 938 554.8 938 566.1C938 577.4 934.9 591 934.6 599.9C934.3 608.9 936 616.6 936.3 619.9"/><path d="M978.6 498.4C978 504.1 974.1 521 975.2 532.3C976.3 543.5 984.2 554.8 985.4 566.1C986.5 577.4 982.5 594.3 982 599.9"/><path d="M850 532.3C855.6 531.7 869.7 528.9 883.8 528.9C897.9 528.9 917.7 532.3 934.6 532.3C951.5 532.3 971.3 528.9 985.4 528.9C999.5 528.9 1013.6 531.7 1019.2 532.3"/><path d="M850 566.1C856.8 566.1 875.9 566.1 890.6 566.1C905.3 566.1 922.2 566.1 938 566.1C953.8 566.1 970.7 566.7 985.4 566.1C1000 565.5 1014.7 562.2 1026 562.7C1037.3 563.3 1042.9 568.9 1053.1 569.5C1063.2 570.1 1081.3 566.7 1086.9 566.1"/><path d="M850 596.6C857.3 597.1 879.9 599.4 894 599.9C908.1 600.5 919.9 599.9 934.6 599.9C949.3 599.9 967.9 600.5 982 599.9C996.1 599.4 1007.4 598.3 1019.2 596.6C1031.1 594.9 1047.4 590.9 1053.1 589.8"/><path d="M1053.1 539C1055.3 543.5 1063.2 557.1 1066.6 566.1C1070 575.1 1070 584.2 1073.4 593.2C1076.7 602.1 1084.6 615.5 1086.9 619.9"/><path d="M968.4 457.8C972.4 462.3 989.3 479 992.1 484.9C995 490.8 986.5 491.9 985.4 493.3"/><path d="M1127.5 579.6C1132 577.4 1146.7 571.7 1154.6 566.1C1162.5 560.5 1169.2 551.4 1174.9 545.8C1180.5 540.2 1186.2 534.5 1188.4 532.3"/><path d="M1053.1 539C1058.7 540.7 1075.6 546.9 1086.9 549.2C1098.2 551.4 1110.6 552.6 1120.7 552.6C1130.9 552.6 1138.8 550.9 1147.8 549.2C1156.8 547.5 1170.4 543.5 1174.9 542.4"/><path d="M910.9 518.7C910.4 523.8 907.5 538.5 907.5 549.2C907.5 559.9 909.2 571.2 910.9 583C912.6 594.8 916.6 613.8 917.7 619.9"/><path d="M954.9 518.7C955.5 523.8 957.2 538.5 958.3 549.2C959.4 559.9 961.7 571.2 961.7 583C961.7 594.8 958.9 613.8 958.3 619.9"/><path d="M850 498.4C853.4 499.5 864.7 505.2 870.3 505.2C875.9 505.2 881.6 499.5 883.8 498.4"/><path d="M350 111.7C354.5 112.2 369.7 116.8 377.1 115.1C384.4 113.4 390.6 109.4 394 101.5C397.4 93.6 395.7 77.3 397.4 67.7C399.1 58.1 403 47.9 404.1 44"/><path d="M394 121.8C397.9 124.1 409.2 130.9 417.7 135.4C426.1 139.9 436.3 143.3 444.8 148.9C453.2 154.5 461.7 162.4 468.4 169.2C475.2 176 481.4 182.7 485.4 189.5C489.3 196.3 491 206.4 492.1 209.8"/><path d="M350 155.7C355.6 156.2 372.6 157.9 383.8 159.1C395.1 160.2 407.5 164.1 417.7 162.4C427.8 160.8 440.2 151.2 444.8 148.9"/><path d="M363.5 203.1C368 205.3 381.6 213.8 390.6 216.6C399.6 219.4 407.5 217.7 417.7 220C427.8 222.2 441.4 227.3 451.5 230.1C461.7 232.9 470.1 234.6 478.6 236.9C487.1 239.2 498.3 242.5 502.3 243.7"/><path d="M485.4 40.6C491 42.3 507.9 46.3 519.2 50.8C530.5 55.3 541.8 63.2 553.1 67.7C564.3 72.2 575.6 76.1 586.9 77.8C598.2 79.5 609.5 76.7 620.7 77.8C632 79 648.9 83.5 654.6 84.6"/><path d="M539.5 0C541.8 5.6 548.5 24.8 553.1 33.8C557.6 42.9 560.9 46.8 566.6 54.1C572.2 61.5 583.5 73.9 586.9 77.8"/><path d="M607.2 33.8C612.3 35.5 626.9 41.2 637.7 44C648.4 46.8 660.2 50.8 671.5 50.8C682.8 50.8 694.1 46.8 705.3 44C716.6 41.2 727.9 36.7 739.2 33.8C750.5 31 761.7 27.1 773 27.1C784.3 27.1 801.2 32.7 806.9 33.8"/><path d="M698.6 16.9C702.5 19.7 715.5 25.4 722.3 33.8C729 42.3 733.5 56.4 739.2 67.7C744.8 79 750.5 90.2 756.1 101.5C761.7 112.8 770.2 129.7 773 135.4"/><path d="M746 0C750.5 4.5 764 18.6 773 27.1C782.1 35.5 795 41.2 800.1 50.8C805.2 60.4 805.2 74.5 803.5 84.6C801.8 94.8 792.2 107.2 789.9 111.7"/><path d="M823.8 0C823.2 5.6 819.3 22.6 820.4 33.8C821.5 45.1 829.4 56.4 830.6 67.7C831.7 79 828.3 90.2 827.2 101.5C826 112.8 824.4 129.7 823.8 135.4"/><path d="M688.4 135.4C694.1 136.5 711 142.1 722.3 142.1C733.5 142.1 744.8 137.6 756.1 135.4C767.4 133.1 784.3 129.7 789.9 128.6"/><path d="M641 142.1C646.1 141 662.5 137.1 671.5 135.4C680.5 133.7 690.7 127.5 695.2 132C699.7 136.5 696.3 152.3 698.6 162.4C700.8 172.6 707 187.8 708.7 192.9"/><path d="M597 128.6C599.9 128 606.6 123 614 125.2C621.3 127.5 634.3 134.8 641 142.1C647.8 149.5 652.3 164.7 654.6 169.2"/><path d="M776.4 274.1C784.3 275.2 810.3 278.6 823.8 280.9C837.3 283.1 846.4 285.4 857.6 287.7C868.9 289.9 880.2 293.3 891.5 294.4C902.8 295.6 919.7 294.4 925.3 294.4"/><path d="M840.7 287.7C841.8 293.3 846.9 310.2 847.5 321.5C848 332.8 845.8 344.1 844.1 355.3C842.4 366.6 838.5 383.5 837.3 389.2"/><path d="M773 355.3C778.7 354.2 795.6 349.1 806.9 348.6C818.1 348 829.4 349.1 840.7 352C852 354.8 863.3 364.4 874.6 365.5C885.8 366.6 899.9 358.7 908.4 358.7C916.9 358.7 922.5 364.4 925.3 365.5"/><path d="M891.5 294.4C892.6 300.6 898.2 319.8 898.2 331.7C898.2 343.5 892 354.2 891.5 365.5C890.9 376.8 892.6 388.1 894.9 399.3C897.1 410.6 903.3 427.5 905 433.2"/><path d="M769.6 416.3C775.8 414.6 795 407.2 806.9 406.1C818.7 405 829.4 406.7 840.7 409.5C852 412.3 863.3 419.6 874.6 423C885.8 426.4 902.8 428.7 908.4 429.8"/><path d="M350 297.8C355.6 297.2 372.6 293.3 383.8 294.4C395.1 295.6 406.4 302.3 417.7 304.6C429 306.8 440.2 308 451.5 308C462.8 308 479.7 305.1 485.4 304.6"/><path d="M350 352C354.5 353.1 365.8 356.5 377.1 358.7C388.4 361 405.3 365.5 417.7 365.5C430.1 365.5 443.1 360.4 451.5 358.7C460 357 465.6 355.9 468.4 355.3"/><path d="M905 70.4C905.6 75.6 907.3 90.7 908.4 101.5C909.5 112.4 910.7 124.1 911.8 135.4C912.9 146.6 914.6 163.6 915.2 169.2"/><path d="M98.1 101.5C97.6 107.2 95.9 126.9 94.8 135.4C93.6 143.8 95.9 146.6 91.4 152.3C86.9 157.9 73.3 165.3 67.7 169.2C62 173.2 58.7 170.3 57.5 176C56.4 181.6 59.8 192.9 60.9 203.1C62 213.2 59.8 229 64.3 236.9C68.8 244.8 82.3 244.8 88 250.4C93.6 256.1 95.9 262.8 98.1 270.7C100.4 278.6 99.3 289.4 101.5 297.8C103.8 306.3 106.6 313.6 111.7 321.5C116.8 329.4 125.2 339 132 345.2C138.8 351.4 145 354.8 152.3 358.7C159.6 362.7 172 367.2 176 368.9"/><path d="M128.6 44C126.3 47.9 120.1 58.1 115.1 67.7C110 77.3 101 95.9 98.1 101.5"/><path d="M216.6 67.7C214.3 68.2 207.6 69.4 203.1 71.1C198.5 72.8 191.8 76.7 189.5 77.8"/><path d="M257.2 128.6C259.5 130.9 265.1 137.1 270.7 142.1C276.4 147.2 285.4 155.7 291 159.1C296.7 162.4 298.9 160.8 304.6 162.4C310.2 164.1 319.2 167 324.9 169.2C330.5 171.5 336.2 174.9 338.4 176"/><path d="M341.8 182.7C345.8 183.9 360.4 185 365.5 189.5C370.6 194 366.6 205.3 372.3 209.8C377.9 214.3 390.9 214.9 399.3 216.6C407.8 218.3 413.4 218.8 423 220C432.6 221.1 448.4 221.1 456.9 223.4C465.3 225.6 468.7 231.3 473.8 233.5C478.9 235.8 485.1 236.3 487.3 236.9"/><path d="M352 101.5C355.3 101 365.5 98.1 372.3 98.1C379 98.1 388.6 95.3 392.6 101.5C396.5 107.7 398.2 125.8 396 135.4C393.7 145 385.2 152.3 379 159.1C372.8 165.8 362.1 173.2 358.7 176"/><path d="M392.6 101.5C392.9 93.1 393.1 60.9 394.3 50.8C395.4 40.6 398.5 42.3 399.3 40.6"/><path d="M365.5 189.5C364.9 194 361.5 208.7 362.1 216.6C362.7 224.5 367.8 233.5 368.9 236.9"/><path d="M311.3 250.4C312.5 253.8 313.6 264.5 318.1 270.7C322.6 276.9 332.8 282 338.4 287.7C344.1 293.3 347.4 302.3 352 304.6C356.5 306.8 359.3 301.2 365.5 301.2C371.7 301.2 381.3 303.5 389.2 304.6C397.1 305.7 404.4 308 412.9 308C421.3 308 435.4 305.1 439.9 304.6"/><path d="M412.9 196.3C412.6 203.1 411.2 224.5 411.2 236.9C411.2 249.3 412.6 258.9 412.9 270.7C413.2 282.6 413.4 296.7 412.9 308C412.3 319.2 410.1 333.3 409.5 338.4"/><path d="M439.9 189.5C440.5 194.6 443.3 212.1 443.3 220C443.3 227.9 440.5 234.1 439.9 236.9"/><path d="M341.8 297.8C346.9 297.8 361.5 298.9 372.3 297.8C383 296.7 394.8 292.7 406.1 291C417.4 289.4 428.7 288.8 439.9 287.7C451.2 286.5 468.1 284.8 473.8 284.3"/><path d="M176 368.9C178.2 367.2 185 360.4 189.5 358.7C194 357 199.7 356.5 203.1 358.7C206.4 361 208.7 370 209.8 372.3"/><path d="M416.3 355.3C416.8 361 419.6 377.9 419.6 389.2C419.6 400.5 416.3 411.2 416.3 423C416.3 434.8 419.1 453.8 419.6 459.9"/><path d="M399.3 40.6C403.3 40 413.4 36.7 423 37.2C432.6 37.8 445.6 41.2 456.9 44C468.1 46.8 479.4 53 490.7 54.1C502 55.3 513.3 50.2 524.6 50.8C535.8 51.3 552.8 56.4 558.4 57.5"/><path d="M490.7 54.1C491.8 59.2 493.5 75 497.5 84.6C501.4 94.2 509.3 103.2 514.4 111.7C519.5 120.1 525.7 131.4 527.9 135.4"/><path d="M575.3 101.5C578.7 103.8 588.9 110.6 595.6 115.1C602.4 119.6 608 125.8 615.9 128.6C623.8 131.4 638.5 131.4 643 132"/><path d="M101.5 410.4C97.6 412.7 85.2 419.5 77.8 424C70.5 428.5 62 430.7 57.5 437.5C53 444.3 49.6 454.4 50.8 464.6C51.9 474.7 59.8 489.4 64.3 498.4C68.8 507.4 74.5 510.8 77.8 518.7C81.2 526.6 80.7 535.1 84.6 545.8C88.6 556.5 96.5 574.6 101.5 583C106.6 591.5 109.4 592.1 115.1 596.6C120.7 601.1 130.9 606.2 135.4 610.1C139.9 614 141 618.3 142.1 619.9"/><path d="M236.9 383.4C238 387.9 242 402.5 243.7 410.4C245.4 418.3 245.9 422.8 247 430.7C248.2 438.6 252.1 448.8 250.4 457.8C248.7 466.8 242.5 477.6 236.9 484.9C231.3 492.2 220.5 495 216.6 501.8C212.6 508.6 212.6 517.6 213.2 525.5C213.8 533.4 219.4 540.7 220 549.2C220.5 557.6 218.3 567.8 216.6 576.3C214.9 584.7 209.8 592.7 209.8 599.9C209.8 607.2 215.5 616.6 216.6 619.9"/><path d="M209.8 599.9C214.3 599.4 226.7 598.8 236.9 596.6C247 594.3 261.7 589.8 270.7 586.4C279.8 583 287.7 578 291 576.3"/><path d="M291 576.3C296.1 573.4 311.3 563.8 321.5 559.3C331.7 554.8 342.4 551.4 352 549.2C361.5 546.9 370 545.8 379 545.8C388.1 545.8 401.6 548.6 406.1 549.2"/><path d="M338.4 498.4C342.9 496.2 357 487.7 365.5 484.9C374 482.1 380.7 484.9 389.2 481.5C397.6 478.1 407.8 469.7 416.3 464.6C424.7 459.5 430.4 453.9 439.9 451C449.5 448.2 468.1 448.2 473.8 447.7"/><path d="M365.5 508.6C365.8 514.8 366.6 536.2 367.2 545.8C367.8 555.4 368.6 562.7 368.9 566.1"/><path d="M365.5 508.6C371.1 508.6 393.4 502.4 399.3 508.6C405.3 514.8 400.7 539.6 401 545.8"/><path d="M419.6 403.7C419.4 408.2 417.4 421.7 418 430.7C418.5 439.8 419.4 454.4 423 457.8C426.7 461.2 437.1 452.2 439.9 451"/><path d="M318.1 572.9C319.2 576.8 324.9 588.7 324.9 596.6C324.9 604.4 319.2 616 318.1 619.9"/><path d="M372.3 579.6C377.9 579.1 394.8 578.5 406.1 576.3C417.4 574 428.7 568.9 439.9 566.1C451.2 563.3 462.5 565 473.8 559.3C485.1 553.7 502 536.8 507.6 532.3"/><path d="M406.1 549.2C410.6 548.1 425.8 546.4 433.2 542.4C440.5 538.5 447.3 528.3 450.1 525.5"/><path d="M176 368.8C178.2 367.1 182.7 363.7 189.5 358.7C196.3 353.6 208.7 334.2 216.6 338.3C224.5 342.5 233.5 375.9 236.9 383.4"/><path d="M1373.1 404.4C1376.5 403.7 1386.9 403.4 1393.8 400.2C1400.7 397.1 1407.7 389.5 1414.6 385.7C1421.5 381.9 1428.4 379.5 1435.3 377.4C1442.2 375.3 1449.2 374.3 1456.1 373.3C1463 372.2 1470.2 371.2 1476.8 371.2C1483.4 371.2 1492.4 372.9 1495.5 373.3"/><path d="M1373.1 429.3C1378.3 429.3 1394.9 429.1 1404.2 429.3C1413.5 429.5 1420.8 430.3 1429.1 430.3C1437.4 430.3 1446 429.5 1454 429.3C1461.9 429.1 1469.9 430 1476.8 429.3C1483.7 428.6 1492.4 425.8 1495.5 425.1"/><path d="M1429.1 430.3C1428.8 434 1426.7 445 1427 452.1C1427.4 459.2 1430.1 465.6 1431.2 472.9C1432.2 480.1 1433.6 487 1433.2 495.7C1432.9 504.3 1430.5 517.1 1429.1 524.7C1427.7 532.3 1425.6 538.6 1425 541.3"/><path d="M1454 429.3C1454.2 433.4 1455 445.9 1455 454.2C1455 462.5 1453.1 470.8 1454 479.1C1454.9 487.4 1458.5 496.4 1460.2 504C1461.9 511.6 1464 517.8 1464.4 524.7C1464.7 531.6 1463 538.6 1462.3 545.5C1461.6 552.4 1461.3 559.3 1460.2 566.2C1459.2 573.1 1456.8 583.5 1456.1 587"/><path d="M1476.8 338C1476.1 341.5 1474.4 351.8 1472.7 358.7C1470.9 365.7 1469.2 371.5 1466.4 379.5C1463.7 387.4 1458.5 398.2 1456.1 406.5C1453.7 414.8 1452.6 425.5 1451.9 429.3"/><path d="M1412.5 545.5C1414.6 544.6 1420.1 541.7 1425 540.3C1429.8 538.9 1436 537 1441.5 537.2C1447.1 537.3 1453 540.3 1458.1 541.3C1463.3 542.4 1469.6 540.6 1472.7 543.4C1475.8 546.2 1476.5 553.1 1476.8 557.9C1477.2 562.8 1477.2 567.9 1474.7 572.4C1472.3 576.9 1467.1 582.5 1462.3 584.9C1457.5 587.3 1451.2 587.3 1445.7 587C1440.2 586.6 1433.9 585.6 1429.1 582.8C1424.3 580 1419.6 574.9 1416.7 570.4C1413.7 565.9 1412.2 560 1411.5 555.8C1410.8 551.7 1412.3 547.2 1412.5 545.5"/><path d="M1379.3 528.9C1381.7 530.3 1388.3 534.4 1393.8 537.2C1399.4 539.9 1409.4 544.1 1412.5 545.5"/><path d="M1279.7 445.9C1279.4 448 1277.3 454.2 1277.6 458.3C1278 462.5 1280.4 465.9 1281.8 470.8C1283.2 475.6 1284.2 482.2 1285.9 487.4C1287.7 492.6 1291.5 496.4 1292.2 501.9C1292.9 507.4 1290.8 515.7 1290.1 520.6C1289.4 525.4 1288.4 529.2 1288 530.9"/><path d="M1281.8 466.6C1280.4 469.4 1276.3 477.7 1273.5 483.2C1270.7 488.8 1266.9 495 1265.2 499.8C1263.5 504.7 1265.5 508.5 1263.1 512.3C1260.7 516.1 1254.8 519.5 1250.7 522.6C1246.5 525.8 1242.4 527.8 1238.2 530.9C1234.1 534.1 1229.2 537.5 1225.8 541.3C1222.3 545.1 1220.2 549.6 1217.5 553.8C1214.7 557.9 1210.6 564.1 1209.2 566.2"/><path d="M1265.2 504C1266.9 505.7 1271.8 509.9 1275.6 514.3C1279.4 518.8 1285.9 528.2 1288 530.9"/><path d="M1288 522.6C1291.5 522.5 1302.2 523 1308.8 521.6C1315.3 520.2 1320.9 515.4 1327.4 514.3C1334 513.3 1342.3 514 1348.2 515.4C1354.1 516.8 1357.5 520.4 1362.7 522.6C1367.9 524.9 1376.5 527.8 1379.3 528.9"/><path d="M1300.5 437.6C1303.9 435.5 1314.3 429.6 1321.2 425.1C1328.1 420.6 1338.5 413 1342 410.6"/><path d="M1279.7 462.5C1281.8 461.4 1286.6 458.3 1292.2 456.3C1297.7 454.2 1306.3 453.1 1312.9 450C1319.5 446.9 1325 440.5 1331.6 437.6C1338.2 434.6 1345.4 433.8 1352.3 432.4C1359.3 431 1369.6 429.8 1373.1 429.3"/><path d="M1144.9 587C1146.6 583.5 1150.7 572.4 1155.2 566.2C1159.7 560 1166.7 553.4 1171.8 549.6C1177 545.8 1178.8 544.1 1186.4 543.4C1194 542.7 1212.3 545.1 1217.5 545.5"/><path d="M1184.3 597.3C1184.6 594.6 1184.3 584.9 1186.4 580.7C1188.4 576.6 1195 573.8 1196.7 572.4"/><path d="M1093 587C1096.5 587.3 1105.1 589 1113.7 589C1122.4 589 1133.1 585.6 1144.9 587C1156.6 588.3 1177.7 595.6 1184.3 597.3"/><path d="M1093 562.1C1095.1 562.8 1100.3 564.5 1105.4 566.2C1110.6 567.9 1121 571.4 1124.1 572.4"/><path d="M1445.7 587 L1443.6 599.4"/><path d="M1474.7 572.4C1476.8 573.1 1483.7 575.6 1487.2 576.6C1490.6 577.6 1494.1 578.3 1495.5 578.7"/><path d="M1472.7 543.4C1475.1 543.2 1483.4 542.4 1487.2 542.4C1491 542.4 1494.1 543.2 1495.5 543.4"/><path d="M450 310.2C455.2 309.9 470.7 308.6 481.1 308.1C491.5 307.6 501.9 307.1 512.2 307.1C522.6 307.1 533 307.6 543.4 308.1C553.7 308.6 569.3 309.9 574.5 310.2"/><path d="M450 283.2C453.5 282.9 462.1 281.2 470.7 281.2C479.4 281.2 491.5 283.2 501.9 283.2C512.2 283.2 524.3 281.2 533 281.2C541.6 281.2 550.3 282.9 553.7 283.2"/><path d="M501.9 225.1C503.6 227.9 509.5 235.5 512.2 241.7C515 248 517.1 255.6 518.5 262.5C519.8 269.4 520.5 275.8 520.5 283.2C520.5 290.7 518.5 300.2 518.5 307.1C518.5 314 520.2 321.8 520.5 324.7"/><path d="M541.3 231.4C543.4 231.7 548.2 233.3 553.7 233.4C559.3 233.6 567.6 232.1 574.5 232.4C581.4 232.7 590.2 235 595.2 235.5C600.2 236 603 235.5 604.6 235.5"/><path d="M604.6 250C608.2 249.7 619.3 247.8 626.3 248C633.4 248.1 643.6 250.6 647.1 251.1"/><path d="M626.3 229.3C627 232.1 629.5 240.4 630.5 245.9C631.5 251.4 631.5 256.9 632.6 262.5C633.6 268 636 274.2 636.7 279.1C637.4 283.9 636.7 289.5 636.7 291.5"/><path d="M657.5 171.2C657.8 176 658.9 190.6 659.5 200.2C660.2 209.9 660.9 221.9 661.6 229.3C662.3 236.7 663.3 242.3 663.7 244.8"/><path d="M712.4 229.3C715.4 228.9 723.7 227.2 730.1 227.2C736.5 227.2 743.6 229.6 750.8 229.3C758.1 228.9 769.8 225.8 773.7 225.1"/><path d="M719.7 276C720.1 279.3 721.8 288.9 721.8 295.7C721.8 302.4 720.7 309.5 719.7 316.4C718.7 323.3 716.3 333.7 715.6 337.2"/><path d="M688.6 314.3C692 314 702.4 312.3 709.3 312.3C716.3 312.3 723.5 314.3 730.1 314.3C736.7 314.3 745.6 312.6 748.8 312.3"/><path d="M636.7 291.5C637.4 294.3 638.8 302.6 640.9 308.1C642.9 313.7 646.4 319.9 649.2 324.7C651.9 329.6 656.1 335.1 657.5 337.2"/><path d="M657.5 289.5C657.8 292.6 658.9 302.2 659.5 308.1C660.2 314 661.3 322 661.6 324.7"/><path d="M553.7 283.2C554.1 286.7 555.8 297.1 555.8 304C555.8 310.9 554.1 321.3 553.7 324.7"/><path d="M450 179.5C453.5 180.5 463.8 185 470.7 185.7C477.7 186.4 484.6 183 491.5 183.6C498.4 184.3 505.3 189.2 512.2 189.9C519.2 190.6 529.5 188.1 533 187.8"/><path d="M574.5 138C577.9 139.4 588.3 145.3 595.2 146.3C602.1 147.3 609.1 143.5 616 144.2C622.9 144.9 629.8 150.1 636.7 150.4C643.6 150.8 650.6 146.3 657.5 146.3C664.4 146.3 671.3 150.4 678.2 150.4C685.1 150.4 692 146 699 146.3C705.9 146.6 716.3 151.5 719.7 152.5"/><path d="M719.7 152.5C720.1 155.3 721.8 163.6 721.8 169.1C721.8 174.7 719.4 179.8 719.7 185.7C720.1 191.6 723.2 201.3 723.9 204.4"/><path d="M595.2 146.3C595.9 150.1 598 161.9 599.4 169.1C600.8 176.4 602.7 181.2 603.5 189.9C604.4 198.5 604.4 215.8 604.6 221"/><path d="M802.7 202.3C802.4 198.5 800.6 186.8 800.6 179.5C800.6 172.2 801.7 165.7 802.7 158.7C803.7 151.8 806.2 141.5 806.8 138"/><path d="M823.4 138C823.8 141.5 825.9 151.8 825.5 158.7C825.2 165.7 821.7 172.6 821.4 179.5C821 186.4 823.1 196.8 823.4 200.2"/><path d="M490 307.7C494 308 506.2 309.3 514.3 309.3C522.4 309.3 530.5 307.4 538.6 307.7C546.7 308 554.8 311 562.9 311C570.9 311 583.1 308.3 587.1 307.7"/><path d="M490 336.9C494 336.6 506.2 337.1 514.3 335.2C522.4 333.3 531.3 327.4 538.6 325.5C545.9 323.6 554.8 324.2 558 323.9"/><path d="M520.8 298C521 300.7 522.2 308 522.4 314.2C522.5 320.4 521.7 331.7 521.6 335.2"/><path d="M551.5 298C551.7 300.2 552.9 305.6 552.3 311C551.8 316.3 548.7 323.6 548.3 330.4C547.9 337.1 548.8 345.5 549.9 351.4C551 357.4 553.7 359.8 554.8 366C555.8 372.2 556.1 384.9 556.4 388.7"/><path d="M632.5 375.7C633.6 377.9 637.6 382.7 638.9 388.7C640.3 394.6 640.4 404.9 640.6 411.3C640.7 417.8 639.8 422.1 639.8 427.5C639.8 432.9 640.3 438.3 640.6 443.7C640.8 449.1 641.4 454.5 641.4 459.9C641.4 465.3 640.8 470.3 640.6 476.1C640.3 481.9 639.9 491.6 639.8 494.7"/><path d="M668.1 374.1C668.2 377.6 668.9 388.9 668.9 395.1C668.9 401.3 668.4 405.9 668.1 411.3C667.8 416.7 667.3 422.1 667.3 427.5C667.3 432.9 668.1 438.3 668.1 443.7C668.1 449.1 667.8 454.5 667.3 459.9C666.7 465.3 665.8 469.9 664.9 476.1C663.9 482.3 662.2 493.6 661.6 497.1"/><path d="M640.6 388.7C642.5 388.4 647.3 387 651.9 387C656.5 387 662.7 387.9 668.1 388.7C673.5 389.5 678.9 390.8 684.3 391.9C689.7 393 695.1 394.1 700.5 395.1C705.9 396.2 711.3 397.3 716.7 398.4C722.1 399.5 730.2 401.1 732.8 401.6"/><path d="M603.3 401.6C606 400.5 614.1 397.3 619.5 395.1C624.9 393 632.2 389.7 635.7 388.7C639.2 387.6 639.8 388.7 640.6 388.7"/><path d="M580.7 414.6C584.4 414.6 595.5 414.7 603.3 414.6C611.2 414.4 621.4 414.3 627.6 413.8C633.8 413.2 633.8 411.7 640.6 411.3C647.3 410.9 660.8 411.3 668.1 411.3C675.4 411.3 681.6 411.3 684.3 411.3"/><path d="M640.6 443.7C642.5 443.4 647.3 442.1 651.9 442.1C656.5 442.1 662.7 443.6 668.1 443.7C673.5 443.8 678.9 442.9 684.3 442.9C689.7 442.9 695.1 442.8 700.5 443.7C705.9 444.7 714 447.8 716.7 448.6"/><path d="M600.1 459.9C603.3 459.6 612.8 458.3 619.5 458.3C626.3 458.3 635.2 460.7 640.6 459.9C646 459.1 647.4 453.4 651.9 453.4C656.4 453.4 661.9 458.6 667.3 459.9C672.7 461.2 678.7 461.5 684.3 461.5C689.8 461.5 697.8 460.2 700.5 459.9"/><path d="M601.7 482.6C604.7 482.8 613 485.3 619.5 484.2C626 483.1 635.2 476.9 640.6 476.1C646 475.3 647.9 479.3 651.9 479.3C655.9 479.3 662.7 476.6 664.9 476.1"/><path d="M700.5 357.9C701 360.9 702.6 369.5 703.7 375.7C704.8 381.9 705.3 389.2 706.9 395.1C708.6 401.1 710.7 406.5 713.4 411.3C716.1 416.2 719.9 420.8 723.1 424.3C726.4 427.8 731.2 431 732.8 432.4"/><path d="M732.8 401.6C735.5 401.9 743.6 402.2 749 403.2C754.4 404.3 759.8 406.7 765.2 408.1C770.6 409.4 777.3 411.1 781.4 411.3C785.5 411.6 788.6 410 790 409.7"/><path d="M765.2 383.8C765.8 386.8 767.4 395.4 768.5 401.6C769.5 407.8 770.6 415.1 771.7 421C772.8 427 773.3 432.4 774.9 437.2C776.6 442.1 780.3 448 781.4 450.2"/><path d="M724.8 448.6C727.5 447.8 735.5 445.1 740.9 443.7C746.3 442.4 751.5 441.6 757.1 440.5C762.8 439.4 769.5 437.5 774.9 437.2C780.4 437 787.5 438.6 790 438.9"/><path d="M713.4 463.1C715.3 464.8 721.5 469.3 724.8 472.9C728 476.4 729.9 480.4 732.8 484.2C735.8 488 739.3 491.5 742.6 495.5C745.8 499.6 750.7 506.3 752.3 508.5"/><path d="M702.1 476.1C704.5 476.9 711.5 479.6 716.7 480.9C721.8 482.3 727.5 483.9 732.8 484.2C738.2 484.5 743.6 482.3 749 482.6C754.4 482.8 758.4 484.2 765.2 485.8C772.1 487.4 785.9 491.2 790 492.3"/><path d="M490 388.7C492.7 389.7 500.8 393 506.2 395.1C511.6 397.3 517 400 522.4 401.6C527.8 403.2 533.2 404.9 538.6 404.9C544 404.9 552.1 402.2 554.8 401.6"/><path d="M506.2 424.3C508.9 424.8 517.5 425.9 522.4 427.5C527.2 429.1 533.2 432.9 535.3 434"/><path d="M490 450.2C492.7 449.9 500.8 448.6 506.2 448.6C511.6 448.6 517.9 449.6 522.4 450.2C526.8 450.7 531.1 451.5 532.9 451.8"/><path d="M490 489C492.7 488.2 501.1 483.6 506.2 484.2C511.3 484.7 518.3 490.9 520.8 492.3"/><path d="M566.1 425.9C566.9 428.9 569.1 438 570.9 443.7C572.8 449.4 575.3 456.7 577.4 459.9C579.6 463.1 582.8 462.6 583.9 463.1"/><path d="M684.3 411.3C685.9 414 691.3 422.1 694 427.5C696.7 432.9 699.4 438.3 700.5 443.7C701.5 449.1 700.2 454.5 700.5 459.9C700.7 465.3 701.8 473.4 702.1 476.1"/><path d="M651.9 325.5C654.1 326.3 660 329.8 664.9 330.4C669.7 330.9 677.1 328.8 681 328.8C685 328.8 687.1 330.1 688.3 330.4"/><path d="M688.3 330.4C691.7 330.9 702.5 332 708.6 333.6C714.6 335.2 722.1 339 724.8 340.1"/><path d="M645.4 335.2C646.5 337.1 649.5 342 651.9 346.6C654.3 351.2 657.3 358.2 660 362.8C662.7 367.3 666.7 372.2 668.1 374.1"/></g><g stroke="#fde3b4" stroke-width="1.200"><path d="M850 20.3C855.6 19.2 872.6 13 883.8 13.5C895.1 14.1 906.4 23.1 917.7 23.7C929 24.3 940.2 16.9 951.5 16.9C962.8 16.9 974.1 23.1 985.4 23.7C996.6 24.3 1007.9 19.2 1019.2 20.3C1030.5 21.4 1041.8 25.9 1053.1 30.5C1064.3 35 1075.6 42.3 1086.9 47.4C1098.2 52.5 1109.5 57.5 1120.7 60.9C1132 64.3 1143.3 64.9 1154.6 67.7C1165.9 70.5 1177.1 75 1188.4 77.8C1199.7 80.7 1211 82.3 1222.3 84.6C1233.5 86.9 1250.5 90.2 1256.1 91.4"/><path d="M1019.2 20.3C1018.6 28.2 1015.8 54.1 1015.8 67.7C1015.8 81.2 1017.5 90.2 1019.2 101.5C1020.9 112.8 1024.6 124.1 1026 135.4C1027.4 146.6 1027.4 163.6 1027.7 169.2"/><path d="M1073.4 44C1073.6 53.6 1075 86.3 1075 101.5C1075 116.8 1073.4 123 1073.4 135.4C1073.4 147.8 1075.3 164.7 1075 176C1074.8 187.3 1069.7 192.9 1071.7 203.1C1073.6 213.2 1083.8 226.2 1086.9 236.9C1090 247.6 1088 258.9 1090.3 267.4C1092.5 275.8 1095.1 284 1100.4 287.7C1105.8 291.3 1118.8 289.1 1122.4 289.4"/><path d="M850 152.3C855.6 151.7 872.6 150.6 883.8 148.9C895.1 147.2 906.4 142.7 917.7 142.1C929 141.6 940.2 145.2 951.5 145.5C962.8 145.8 973 143.8 985.4 143.8C997.8 143.8 1014.7 145.8 1026 145.5C1037.3 145.2 1042.9 143.8 1053.1 142.1C1063.2 140.4 1077.3 136.5 1086.9 135.4C1096.5 134.2 1106.6 135.4 1110.6 135.4"/><path d="M1168.1 0C1169.8 5.6 1174.9 22.6 1178.3 33.8C1181.7 45.1 1187.3 56.4 1188.4 67.7C1189.5 79 1187.3 91.9 1185 101.5C1182.8 111.1 1176.6 121.3 1174.9 125.2"/><path d="M1256.1 20.3C1257.2 24.3 1262 36.1 1262.9 44C1263.7 51.9 1262.3 59.8 1261.2 67.7C1260.1 75.6 1262.6 83.5 1256.1 91.4C1249.6 99.3 1233.5 110 1222.3 115.1C1211 120.1 1199.7 120.1 1188.4 121.8C1177.1 123.5 1165.9 123 1154.6 125.2C1143.3 127.5 1126.4 133.7 1120.7 135.4"/><path d="M1273 0C1270.2 3.4 1264.6 13 1256.1 20.3C1247.6 27.6 1227.9 40 1222.3 44"/><path d="M1086.9 101.5C1090.3 102.7 1103.5 104.9 1107.2 108.3C1110.9 111.7 1108.6 119.6 1108.9 121.8"/><path d="M910.9 152.3 L914.3 176"/><path d="M850 294.4C855.6 294.7 871.7 296.1 883.8 296.1C896 296.1 915.7 291.3 922.8 294.4C929.8 297.5 916.8 311.9 926.1 314.7C935.5 317.6 966.5 305.1 978.6 311.3C990.7 317.6 1005.1 343.2 998.9 352C992.7 360.7 960.6 362.7 941.4 363.8C922.2 364.9 899.1 361.3 883.8 358.7C868.6 356.2 855.6 350.3 850 348.6"/><path d="M941.4 363.8C943.1 370.9 950.4 393.4 951.5 406.1C952.7 418.8 959.4 434.9 948.1 439.9C936.9 445 893.4 442.2 883.8 436.6C874.3 430.9 888.4 416.8 890.6 406.1C892.9 395.4 896.3 377.9 897.4 372.3"/><path d="M1493 270.7C1490.2 270.2 1480.6 267.6 1476.1 267.4C1471.6 267.1 1467.6 268.8 1465.9 269"/><path d="M1493 355.3C1487.4 357 1470.4 361 1459.2 365.5C1447.9 370 1436.6 376.8 1425.3 382.4C1414 388.1 1400.5 395.4 1391.5 399.3C1382.4 403.3 1374.6 405 1371.2 406.1"/><path d="M1479.5 304.6C1480 310.2 1483.4 327.1 1482.8 338.4C1482.3 349.7 1480 361 1476.1 372.3C1472.1 383.5 1462.5 394.8 1459.2 406.1C1455.8 417.4 1456.9 431 1455.8 439.9C1454.6 448.9 1453 456.6 1452.4 459.9"/><path d="M850 478.1C855.6 479.2 872.6 481.5 883.8 484.9C895.1 488.3 906.4 493.3 917.7 498.4C929 503.5 940.2 510.8 951.5 515.3C962.8 519.9 974.1 522.1 985.4 525.5C996.6 528.9 1007.9 533.4 1019.2 535.6C1030.5 537.9 1047.4 538.5 1053.1 539"/><path d="M883.8 498.4C884.4 504.1 886.1 521 887.2 532.3C888.4 543.5 889.5 554.8 890.6 566.1C891.7 577.4 893.4 594.3 894 599.9"/><path d="M927.8 471.3C928.4 475.9 930.1 488.3 931.2 498.4C932.3 508.6 933.5 521 934.6 532.3C935.7 543.5 938 554.8 938 566.1C938 577.4 934.9 591 934.6 599.9C934.3 608.9 936 616.6 936.3 619.9"/><path d="M978.6 498.4C978 504.1 974.1 521 975.2 532.3C976.3 543.5 984.2 554.8 985.4 566.1C986.5 577.4 982.5 594.3 982 599.9"/><path d="M850 532.3C855.6 531.7 869.7 528.9 883.8 528.9C897.9 528.9 917.7 532.3 934.6 532.3C951.5 532.3 971.3 528.9 985.4 528.9C999.5 528.9 1013.6 531.7 1019.2 532.3"/><path d="M850 566.1C856.8 566.1 875.9 566.1 890.6 566.1C905.3 566.1 922.2 566.1 938 566.1C953.8 566.1 970.7 566.7 985.4 566.1C1000 565.5 1014.7 562.2 1026 562.7C1037.3 563.3 1042.9 568.9 1053.1 569.5C1063.2 570.1 1081.3 566.7 1086.9 566.1"/><path d="M850 596.6C857.3 597.1 879.9 599.4 894 599.9C908.1 600.5 919.9 599.9 934.6 599.9C949.3 599.9 967.9 600.5 982 599.9C996.1 599.4 1007.4 598.3 1019.2 596.6C1031.1 594.9 1047.4 590.9 1053.1 589.8"/><path d="M1053.1 539C1055.3 543.5 1063.2 557.1 1066.6 566.1C1070 575.1 1070 584.2 1073.4 593.2C1076.7 602.1 1084.6 615.5 1086.9 619.9"/><path d="M968.4 457.8C972.4 462.3 989.3 479 992.1 484.9C995 490.8 986.5 491.9 985.4 493.3"/><path d="M1127.5 579.6C1132 577.4 1146.7 571.7 1154.6 566.1C1162.5 560.5 1169.2 551.4 1174.9 545.8C1180.5 540.2 1186.2 534.5 1188.4 532.3"/><path d="M1053.1 539C1058.7 540.7 1075.6 546.9 1086.9 549.2C1098.2 551.4 1110.6 552.6 1120.7 552.6C1130.9 552.6 1138.8 550.9 1147.8 549.2C1156.8 547.5 1170.4 543.5 1174.9 542.4"/><path d="M910.9 518.7C910.4 523.8 907.5 538.5 907.5 549.2C907.5 559.9 909.2 571.2 910.9 583C912.6 594.8 916.6 613.8 917.7 619.9"/><path d="M954.9 518.7C955.5 523.8 957.2 538.5 958.3 549.2C959.4 559.9 961.7 571.2 961.7 583C961.7 594.8 958.9 613.8 958.3 619.9"/><path d="M850 498.4C853.4 499.5 864.7 505.2 870.3 505.2C875.9 505.2 881.6 499.5 883.8 498.4"/><path d="M350 111.7C354.5 112.2 369.7 116.8 377.1 115.1C384.4 113.4 390.6 109.4 394 101.5C397.4 93.6 395.7 77.3 397.4 67.7C399.1 58.1 403 47.9 404.1 44"/><path d="M394 121.8C397.9 124.1 409.2 130.9 417.7 135.4C426.1 139.9 436.3 143.3 444.8 148.9C453.2 154.5 461.7 162.4 468.4 169.2C475.2 176 481.4 182.7 485.4 189.5C489.3 196.3 491 206.4 492.1 209.8"/><path d="M350 155.7C355.6 156.2 372.6 157.9 383.8 159.1C395.1 160.2 407.5 164.1 417.7 162.4C427.8 160.8 440.2 151.2 444.8 148.9"/><path d="M363.5 203.1C368 205.3 381.6 213.8 390.6 216.6C399.6 219.4 407.5 217.7 417.7 220C427.8 222.2 441.4 227.3 451.5 230.1C461.7 232.9 470.1 234.6 478.6 236.9C487.1 239.2 498.3 242.5 502.3 243.7"/><path d="M485.4 40.6C491 42.3 507.9 46.3 519.2 50.8C530.5 55.3 541.8 63.2 553.1 67.7C564.3 72.2 575.6 76.1 586.9 77.8C598.2 79.5 609.5 76.7 620.7 77.8C632 79 648.9 83.5 654.6 84.6"/><path d="M539.5 0C541.8 5.6 548.5 24.8 553.1 33.8C557.6 42.9 560.9 46.8 566.6 54.1C572.2 61.5 583.5 73.9 586.9 77.8"/><path d="M607.2 33.8C612.3 35.5 626.9 41.2 637.7 44C648.4 46.8 660.2 50.8 671.5 50.8C682.8 50.8 694.1 46.8 705.3 44C716.6 41.2 727.9 36.7 739.2 33.8C750.5 31 761.7 27.1 773 27.1C784.3 27.1 801.2 32.7 806.9 33.8"/><path d="M698.6 16.9C702.5 19.7 715.5 25.4 722.3 33.8C729 42.3 733.5 56.4 739.2 67.7C744.8 79 750.5 90.2 756.1 101.5C761.7 112.8 770.2 129.7 773 135.4"/><path d="M746 0C750.5 4.5 764 18.6 773 27.1C782.1 35.5 795 41.2 800.1 50.8C805.2 60.4 805.2 74.5 803.5 84.6C801.8 94.8 792.2 107.2 789.9 111.7"/><path d="M823.8 0C823.2 5.6 819.3 22.6 820.4 33.8C821.5 45.1 829.4 56.4 830.6 67.7C831.7 79 828.3 90.2 827.2 101.5C826 112.8 824.4 129.7 823.8 135.4"/><path d="M688.4 135.4C694.1 136.5 711 142.1 722.3 142.1C733.5 142.1 744.8 137.6 756.1 135.4C767.4 133.1 784.3 129.7 789.9 128.6"/><path d="M641 142.1C646.1 141 662.5 137.1 671.5 135.4C680.5 133.7 690.7 127.5 695.2 132C699.7 136.5 696.3 152.3 698.6 162.4C700.8 172.6 707 187.8 708.7 192.9"/><path d="M597 128.6C599.9 128 606.6 123 614 125.2C621.3 127.5 634.3 134.8 641 142.1C647.8 149.5 652.3 164.7 654.6 169.2"/><path d="M776.4 274.1C784.3 275.2 810.3 278.6 823.8 280.9C837.3 283.1 846.4 285.4 857.6 287.7C868.9 289.9 880.2 293.3 891.5 294.4C902.8 295.6 919.7 294.4 925.3 294.4"/><path d="M840.7 287.7C841.8 293.3 846.9 310.2 847.5 321.5C848 332.8 845.8 344.1 844.1 355.3C842.4 366.6 838.5 383.5 837.3 389.2"/><path d="M773 355.3C778.7 354.2 795.6 349.1 806.9 348.6C818.1 348 829.4 349.1 840.7 352C852 354.8 863.3 364.4 874.6 365.5C885.8 366.6 899.9 358.7 908.4 358.7C916.9 358.7 922.5 364.4 925.3 365.5"/><path d="M891.5 294.4C892.6 300.6 898.2 319.8 898.2 331.7C898.2 343.5 892 354.2 891.5 365.5C890.9 376.8 892.6 388.1 894.9 399.3C897.1 410.6 903.3 427.5 905 433.2"/><path d="M769.6 416.3C775.8 414.6 795 407.2 806.9 406.1C818.7 405 829.4 406.7 840.7 409.5C852 412.3 863.3 419.6 874.6 423C885.8 426.4 902.8 428.7 908.4 429.8"/><path d="M350 297.8C355.6 297.2 372.6 293.3 383.8 294.4C395.1 295.6 406.4 302.3 417.7 304.6C429 306.8 440.2 308 451.5 308C462.8 308 479.7 305.1 485.4 304.6"/><path d="M350 352C354.5 353.1 365.8 356.5 377.1 358.7C388.4 361 405.3 365.5 417.7 365.5C430.1 365.5 443.1 360.4 451.5 358.7C460 357 465.6 355.9 468.4 355.3"/><path d="M905 70.4C905.6 75.6 907.3 90.7 908.4 101.5C909.5 112.4 910.7 124.1 911.8 135.4C912.9 146.6 914.6 163.6 915.2 169.2"/><path d="M98.1 101.5C97.6 107.2 95.9 126.9 94.8 135.4C93.6 143.8 95.9 146.6 91.4 152.3C86.9 157.9 73.3 165.3 67.7 169.2C62 173.2 58.7 170.3 57.5 176C56.4 181.6 59.8 192.9 60.9 203.1C62 213.2 59.8 229 64.3 236.9C68.8 244.8 82.3 244.8 88 250.4C93.6 256.1 95.9 262.8 98.1 270.7C100.4 278.6 99.3 289.4 101.5 297.8C103.8 306.3 106.6 313.6 111.7 321.5C116.8 329.4 125.2 339 132 345.2C138.8 351.4 145 354.8 152.3 358.7C159.6 362.7 172 367.2 176 368.9"/><path d="M128.6 44C126.3 47.9 120.1 58.1 115.1 67.7C110 77.3 101 95.9 98.1 101.5"/><path d="M216.6 67.7C214.3 68.2 207.6 69.4 203.1 71.1C198.5 72.8 191.8 76.7 189.5 77.8"/><path d="M257.2 128.6C259.5 130.9 265.1 137.1 270.7 142.1C276.4 147.2 285.4 155.7 291 159.1C296.7 162.4 298.9 160.8 304.6 162.4C310.2 164.1 319.2 167 324.9 169.2C330.5 171.5 336.2 174.9 338.4 176"/><path d="M341.8 182.7C345.8 183.9 360.4 185 365.5 189.5C370.6 194 366.6 205.3 372.3 209.8C377.9 214.3 390.9 214.9 399.3 216.6C407.8 218.3 413.4 218.8 423 220C432.6 221.1 448.4 221.1 456.9 223.4C465.3 225.6 468.7 231.3 473.8 233.5C478.9 235.8 485.1 236.3 487.3 236.9"/><path d="M352 101.5C355.3 101 365.5 98.1 372.3 98.1C379 98.1 388.6 95.3 392.6 101.5C396.5 107.7 398.2 125.8 396 135.4C393.7 145 385.2 152.3 379 159.1C372.8 165.8 362.1 173.2 358.7 176"/><path d="M392.6 101.5C392.9 93.1 393.1 60.9 394.3 50.8C395.4 40.6 398.5 42.3 399.3 40.6"/><path d="M365.5 189.5C364.9 194 361.5 208.7 362.1 216.6C362.7 224.5 367.8 233.5 368.9 236.9"/><path d="M311.3 250.4C312.5 253.8 313.6 264.5 318.1 270.7C322.6 276.9 332.8 282 338.4 287.7C344.1 293.3 347.4 302.3 352 304.6C356.5 306.8 359.3 301.2 365.5 301.2C371.7 301.2 381.3 303.5 389.2 304.6C397.1 305.7 404.4 308 412.9 308C421.3 308 435.4 305.1 439.9 304.6"/><path d="M412.9 196.3C412.6 203.1 411.2 224.5 411.2 236.9C411.2 249.3 412.6 258.9 412.9 270.7C413.2 282.6 413.4 296.7 412.9 308C412.3 319.2 410.1 333.3 409.5 338.4"/><path d="M439.9 189.5C440.5 194.6 443.3 212.1 443.3 220C443.3 227.9 440.5 234.1 439.9 236.9"/><path d="M341.8 297.8C346.9 297.8 361.5 298.9 372.3 297.8C383 296.7 394.8 292.7 406.1 291C417.4 289.4 428.7 288.8 439.9 287.7C451.2 286.5 468.1 284.8 473.8 284.3"/><path d="M176 368.9C178.2 367.2 185 360.4 189.5 358.7C194 357 199.7 356.5 203.1 358.7C206.4 361 208.7 370 209.8 372.3"/><path d="M416.3 355.3C416.8 361 419.6 377.9 419.6 389.2C419.6 400.5 416.3 411.2 416.3 423C416.3 434.8 419.1 453.8 419.6 459.9"/><path d="M399.3 40.6C403.3 40 413.4 36.7 423 37.2C432.6 37.8 445.6 41.2 456.9 44C468.1 46.8 479.4 53 490.7 54.1C502 55.3 513.3 50.2 524.6 50.8C535.8 51.3 552.8 56.4 558.4 57.5"/><path d="M490.7 54.1C491.8 59.2 493.5 75 497.5 84.6C501.4 94.2 509.3 103.2 514.4 111.7C519.5 120.1 525.7 131.4 527.9 135.4"/><path d="M575.3 101.5C578.7 103.8 588.9 110.6 595.6 115.1C602.4 119.6 608 125.8 615.9 128.6C623.8 131.4 638.5 131.4 643 132"/><path d="M101.5 410.4C97.6 412.7 85.2 419.5 77.8 424C70.5 428.5 62 430.7 57.5 437.5C53 444.3 49.6 454.4 50.8 464.6C51.9 474.7 59.8 489.4 64.3 498.4C68.8 507.4 74.5 510.8 77.8 518.7C81.2 526.6 80.7 535.1 84.6 545.8C88.6 556.5 96.5 574.6 101.5 583C106.6 591.5 109.4 592.1 115.1 596.6C120.7 601.1 130.9 606.2 135.4 610.1C139.9 614 141 618.3 142.1 619.9"/><path d="M236.9 383.4C238 387.9 242 402.5 243.7 410.4C245.4 418.3 245.9 422.8 247 430.7C248.2 438.6 252.1 448.8 250.4 457.8C248.7 466.8 242.5 477.6 236.9 484.9C231.3 492.2 220.5 495 216.6 501.8C212.6 508.6 212.6 517.6 213.2 525.5C213.8 533.4 219.4 540.7 220 549.2C220.5 557.6 218.3 567.8 216.6 576.3C214.9 584.7 209.8 592.7 209.8 599.9C209.8 607.2 215.5 616.6 216.6 619.9"/><path d="M209.8 599.9C214.3 599.4 226.7 598.8 236.9 596.6C247 594.3 261.7 589.8 270.7 586.4C279.8 583 287.7 578 291 576.3"/><path d="M291 576.3C296.1 573.4 311.3 563.8 321.5 559.3C331.7 554.8 342.4 551.4 352 549.2C361.5 546.9 370 545.8 379 545.8C388.1 545.8 401.6 548.6 406.1 549.2"/><path d="M338.4 498.4C342.9 496.2 357 487.7 365.5 484.9C374 482.1 380.7 484.9 389.2 481.5C397.6 478.1 407.8 469.7 416.3 464.6C424.7 459.5 430.4 453.9 439.9 451C449.5 448.2 468.1 448.2 473.8 447.7"/><path d="M365.5 508.6C365.8 514.8 366.6 536.2 367.2 545.8C367.8 555.4 368.6 562.7 368.9 566.1"/><path d="M365.5 508.6C371.1 508.6 393.4 502.4 399.3 508.6C405.3 514.8 400.7 539.6 401 545.8"/><path d="M419.6 403.7C419.4 408.2 417.4 421.7 418 430.7C418.5 439.8 419.4 454.4 423 457.8C426.7 461.2 437.1 452.2 439.9 451"/><path d="M318.1 572.9C319.2 576.8 324.9 588.7 324.9 596.6C324.9 604.4 319.2 616 318.1 619.9"/><path d="M372.3 579.6C377.9 579.1 394.8 578.5 406.1 576.3C417.4 574 428.7 568.9 439.9 566.1C451.2 563.3 462.5 565 473.8 559.3C485.1 553.7 502 536.8 507.6 532.3"/><path d="M406.1 549.2C410.6 548.1 425.8 546.4 433.2 542.4C440.5 538.5 447.3 528.3 450.1 525.5"/><path d="M176 368.8C178.2 367.1 182.7 363.7 189.5 358.7C196.3 353.6 208.7 334.2 216.6 338.3C224.5 342.5 233.5 375.9 236.9 383.4"/><path d="M1373.1 404.4C1376.5 403.7 1386.9 403.4 1393.8 400.2C1400.7 397.1 1407.7 389.5 1414.6 385.7C1421.5 381.9 1428.4 379.5 1435.3 377.4C1442.2 375.3 1449.2 374.3 1456.1 373.3C1463 372.2 1470.2 371.2 1476.8 371.2C1483.4 371.2 1492.4 372.9 1495.5 373.3"/><path d="M1373.1 429.3C1378.3 429.3 1394.9 429.1 1404.2 429.3C1413.5 429.5 1420.8 430.3 1429.1 430.3C1437.4 430.3 1446 429.5 1454 429.3C1461.9 429.1 1469.9 430 1476.8 429.3C1483.7 428.6 1492.4 425.8 1495.5 425.1"/><path d="M1429.1 430.3C1428.8 434 1426.7 445 1427 452.1C1427.4 459.2 1430.1 465.6 1431.2 472.9C1432.2 480.1 1433.6 487 1433.2 495.7C1432.9 504.3 1430.5 517.1 1429.1 524.7C1427.7 532.3 1425.6 538.6 1425 541.3"/><path d="M1454 429.3C1454.2 433.4 1455 445.9 1455 454.2C1455 462.5 1453.1 470.8 1454 479.1C1454.9 487.4 1458.5 496.4 1460.2 504C1461.9 511.6 1464 517.8 1464.4 524.7C1464.7 531.6 1463 538.6 1462.3 545.5C1461.6 552.4 1461.3 559.3 1460.2 566.2C1459.2 573.1 1456.8 583.5 1456.1 587"/><path d="M1476.8 338C1476.1 341.5 1474.4 351.8 1472.7 358.7C1470.9 365.7 1469.2 371.5 1466.4 379.5C1463.7 387.4 1458.5 398.2 1456.1 406.5C1453.7 414.8 1452.6 425.5 1451.9 429.3"/><path d="M1412.5 545.5C1414.6 544.6 1420.1 541.7 1425 540.3C1429.8 538.9 1436 537 1441.5 537.2C1447.1 537.3 1453 540.3 1458.1 541.3C1463.3 542.4 1469.6 540.6 1472.7 543.4C1475.8 546.2 1476.5 553.1 1476.8 557.9C1477.2 562.8 1477.2 567.9 1474.7 572.4C1472.3 576.9 1467.1 582.5 1462.3 584.9C1457.5 587.3 1451.2 587.3 1445.7 587C1440.2 586.6 1433.9 585.6 1429.1 582.8C1424.3 580 1419.6 574.9 1416.7 570.4C1413.7 565.9 1412.2 560 1411.5 555.8C1410.8 551.7 1412.3 547.2 1412.5 545.5"/><path d="M1379.3 528.9C1381.7 530.3 1388.3 534.4 1393.8 537.2C1399.4 539.9 1409.4 544.1 1412.5 545.5"/><path d="M1279.7 445.9C1279.4 448 1277.3 454.2 1277.6 458.3C1278 462.5 1280.4 465.9 1281.8 470.8C1283.2 475.6 1284.2 482.2 1285.9 487.4C1287.7 492.6 1291.5 496.4 1292.2 501.9C1292.9 507.4 1290.8 515.7 1290.1 520.6C1289.4 525.4 1288.4 529.2 1288 530.9"/><path d="M1281.8 466.6C1280.4 469.4 1276.3 477.7 1273.5 483.2C1270.7 488.8 1266.9 495 1265.2 499.8C1263.5 504.7 1265.5 508.5 1263.1 512.3C1260.7 516.1 1254.8 519.5 1250.7 522.6C1246.5 525.8 1242.4 527.8 1238.2 530.9C1234.1 534.1 1229.2 537.5 1225.8 541.3C1222.3 545.1 1220.2 549.6 1217.5 553.8C1214.7 557.9 1210.6 564.1 1209.2 566.2"/><path d="M1265.2 504C1266.9 505.7 1271.8 509.9 1275.6 514.3C1279.4 518.8 1285.9 528.2 1288 530.9"/><path d="M1288 522.6C1291.5 522.5 1302.2 523 1308.8 521.6C1315.3 520.2 1320.9 515.4 1327.4 514.3C1334 513.3 1342.3 514 1348.2 515.4C1354.1 516.8 1357.5 520.4 1362.7 522.6C1367.9 524.9 1376.5 527.8 1379.3 528.9"/><path d="M1300.5 437.6C1303.9 435.5 1314.3 429.6 1321.2 425.1C1328.1 420.6 1338.5 413 1342 410.6"/><path d="M1279.7 462.5C1281.8 461.4 1286.6 458.3 1292.2 456.3C1297.7 454.2 1306.3 453.1 1312.9 450C1319.5 446.9 1325 440.5 1331.6 437.6C1338.2 434.6 1345.4 433.8 1352.3 432.4C1359.3 431 1369.6 429.8 1373.1 429.3"/><path d="M1144.9 587C1146.6 583.5 1150.7 572.4 1155.2 566.2C1159.7 560 1166.7 553.4 1171.8 549.6C1177 545.8 1178.8 544.1 1186.4 543.4C1194 542.7 1212.3 545.1 1217.5 545.5"/><path d="M1184.3 597.3C1184.6 594.6 1184.3 584.9 1186.4 580.7C1188.4 576.6 1195 573.8 1196.7 572.4"/><path d="M1093 587C1096.5 587.3 1105.1 589 1113.7 589C1122.4 589 1133.1 585.6 1144.9 587C1156.6 588.3 1177.7 595.6 1184.3 597.3"/><path d="M1093 562.1C1095.1 562.8 1100.3 564.5 1105.4 566.2C1110.6 567.9 1121 571.4 1124.1 572.4"/><path d="M1445.7 587 L1443.6 599.4"/><path d="M1474.7 572.4C1476.8 573.1 1483.7 575.6 1487.2 576.6C1490.6 577.6 1494.1 578.3 1495.5 578.7"/><path d="M1472.7 543.4C1475.1 543.2 1483.4 542.4 1487.2 542.4C1491 542.4 1494.1 543.2 1495.5 543.4"/><path d="M450 310.2C455.2 309.9 470.7 308.6 481.1 308.1C491.5 307.6 501.9 307.1 512.2 307.1C522.6 307.1 533 307.6 543.4 308.1C553.7 308.6 569.3 309.9 574.5 310.2"/><path d="M450 283.2C453.5 282.9 462.1 281.2 470.7 281.2C479.4 281.2 491.5 283.2 501.9 283.2C512.2 283.2 524.3 281.2 533 281.2C541.6 281.2 550.3 282.9 553.7 283.2"/><path d="M501.9 225.1C503.6 227.9 509.5 235.5 512.2 241.7C515 248 517.1 255.6 518.5 262.5C519.8 269.4 520.5 275.8 520.5 283.2C520.5 290.7 518.5 300.2 518.5 307.1C518.5 314 520.2 321.8 520.5 324.7"/><path d="M541.3 231.4C543.4 231.7 548.2 233.3 553.7 233.4C559.3 233.6 567.6 232.1 574.5 232.4C581.4 232.7 590.2 235 595.2 235.5C600.2 236 603 235.5 604.6 235.5"/><path d="M604.6 250C608.2 249.7 619.3 247.8 626.3 248C633.4 248.1 643.6 250.6 647.1 251.1"/><path d="M626.3 229.3C627 232.1 629.5 240.4 630.5 245.9C631.5 251.4 631.5 256.9 632.6 262.5C633.6 268 636 274.2 636.7 279.1C637.4 283.9 636.7 289.5 636.7 291.5"/><path d="M657.5 171.2C657.8 176 658.9 190.6 659.5 200.2C660.2 209.9 660.9 221.9 661.6 229.3C662.3 236.7 663.3 242.3 663.7 244.8"/><path d="M712.4 229.3C715.4 228.9 723.7 227.2 730.1 227.2C736.5 227.2 743.6 229.6 750.8 229.3C758.1 228.9 769.8 225.8 773.7 225.1"/><path d="M719.7 276C720.1 279.3 721.8 288.9 721.8 295.7C721.8 302.4 720.7 309.5 719.7 316.4C718.7 323.3 716.3 333.7 715.6 337.2"/><path d="M688.6 314.3C692 314 702.4 312.3 709.3 312.3C716.3 312.3 723.5 314.3 730.1 314.3C736.7 314.3 745.6 312.6 748.8 312.3"/><path d="M636.7 291.5C637.4 294.3 638.8 302.6 640.9 308.1C642.9 313.7 646.4 319.9 649.2 324.7C651.9 329.6 656.1 335.1 657.5 337.2"/><path d="M657.5 289.5C657.8 292.6 658.9 302.2 659.5 308.1C660.2 314 661.3 322 661.6 324.7"/><path d="M553.7 283.2C554.1 286.7 555.8 297.1 555.8 304C555.8 310.9 554.1 321.3 553.7 324.7"/><path d="M450 179.5C453.5 180.5 463.8 185 470.7 185.7C477.7 186.4 484.6 183 491.5 183.6C498.4 184.3 505.3 189.2 512.2 189.9C519.2 190.6 529.5 188.1 533 187.8"/><path d="M574.5 138C577.9 139.4 588.3 145.3 595.2 146.3C602.1 147.3 609.1 143.5 616 144.2C622.9 144.9 629.8 150.1 636.7 150.4C643.6 150.8 650.6 146.3 657.5 146.3C664.4 146.3 671.3 150.4 678.2 150.4C685.1 150.4 692 146 699 146.3C705.9 146.6 716.3 151.5 719.7 152.5"/><path d="M719.7 152.5C720.1 155.3 721.8 163.6 721.8 169.1C721.8 174.7 719.4 179.8 719.7 185.7C720.1 191.6 723.2 201.3 723.9 204.4"/><path d="M595.2 146.3C595.9 150.1 598 161.9 599.4 169.1C600.8 176.4 602.7 181.2 603.5 189.9C604.4 198.5 604.4 215.8 604.6 221"/><path d="M802.7 202.3C802.4 198.5 800.6 186.8 800.6 179.5C800.6 172.2 801.7 165.7 802.7 158.7C803.7 151.8 806.2 141.5 806.8 138"/><path d="M823.4 138C823.8 141.5 825.9 151.8 825.5 158.7C825.2 165.7 821.7 172.6 821.4 179.5C821 186.4 823.1 196.8 823.4 200.2"/><path d="M490 307.7C494 308 506.2 309.3 514.3 309.3C522.4 309.3 530.5 307.4 538.6 307.7C546.7 308 554.8 311 562.9 311C570.9 311 583.1 308.3 587.1 307.7"/><path d="M490 336.9C494 336.6 506.2 337.1 514.3 335.2C522.4 333.3 531.3 327.4 538.6 325.5C545.9 323.6 554.8 324.2 558 323.9"/><path d="M520.8 298C521 300.7 522.2 308 522.4 314.2C522.5 320.4 521.7 331.7 521.6 335.2"/><path d="M551.5 298C551.7 300.2 552.9 305.6 552.3 311C551.8 316.3 548.7 323.6 548.3 330.4C547.9 337.1 548.8 345.5 549.9 351.4C551 357.4 553.7 359.8 554.8 366C555.8 372.2 556.1 384.9 556.4 388.7"/><path d="M632.5 375.7C633.6 377.9 637.6 382.7 638.9 388.7C640.3 394.6 640.4 404.9 640.6 411.3C640.7 417.8 639.8 422.1 639.8 427.5C639.8 432.9 640.3 438.3 640.6 443.7C640.8 449.1 641.4 454.5 641.4 459.9C641.4 465.3 640.8 470.3 640.6 476.1C640.3 481.9 639.9 491.6 639.8 494.7"/><path d="M668.1 374.1C668.2 377.6 668.9 388.9 668.9 395.1C668.9 401.3 668.4 405.9 668.1 411.3C667.8 416.7 667.3 422.1 667.3 427.5C667.3 432.9 668.1 438.3 668.1 443.7C668.1 449.1 667.8 454.5 667.3 459.9C666.7 465.3 665.8 469.9 664.9 476.1C663.9 482.3 662.2 493.6 661.6 497.1"/><path d="M640.6 388.7C642.5 388.4 647.3 387 651.9 387C656.5 387 662.7 387.9 668.1 388.7C673.5 389.5 678.9 390.8 684.3 391.9C689.7 393 695.1 394.1 700.5 395.1C705.9 396.2 711.3 397.3 716.7 398.4C722.1 399.5 730.2 401.1 732.8 401.6"/><path d="M603.3 401.6C606 400.5 614.1 397.3 619.5 395.1C624.9 393 632.2 389.7 635.7 388.7C639.2 387.6 639.8 388.7 640.6 388.7"/><path d="M580.7 414.6C584.4 414.6 595.5 414.7 603.3 414.6C611.2 414.4 621.4 414.3 627.6 413.8C633.8 413.2 633.8 411.7 640.6 411.3C647.3 410.9 660.8 411.3 668.1 411.3C675.4 411.3 681.6 411.3 684.3 411.3"/><path d="M640.6 443.7C642.5 443.4 647.3 442.1 651.9 442.1C656.5 442.1 662.7 443.6 668.1 443.7C673.5 443.8 678.9 442.9 684.3 442.9C689.7 442.9 695.1 442.8 700.5 443.7C705.9 444.7 714 447.8 716.7 448.6"/><path d="M600.1 459.9C603.3 459.6 612.8 458.3 619.5 458.3C626.3 458.3 635.2 460.7 640.6 459.9C646 459.1 647.4 453.4 651.9 453.4C656.4 453.4 661.9 458.6 667.3 459.9C672.7 461.2 678.7 461.5 684.3 461.5C689.8 461.5 697.8 460.2 700.5 459.9"/><path d="M601.7 482.6C604.7 482.8 613 485.3 619.5 484.2C626 483.1 635.2 476.9 640.6 476.1C646 475.3 647.9 479.3 651.9 479.3C655.9 479.3 662.7 476.6 664.9 476.1"/><path d="M700.5 357.9C701 360.9 702.6 369.5 703.7 375.7C704.8 381.9 705.3 389.2 706.9 395.1C708.6 401.1 710.7 406.5 713.4 411.3C716.1 416.2 719.9 420.8 723.1 424.3C726.4 427.8 731.2 431 732.8 432.4"/><path d="M732.8 401.6C735.5 401.9 743.6 402.2 749 403.2C754.4 404.3 759.8 406.7 765.2 408.1C770.6 409.4 777.3 411.1 781.4 411.3C785.5 411.6 788.6 410 790 409.7"/><path d="M765.2 383.8C765.8 386.8 767.4 395.4 768.5 401.6C769.5 407.8 770.6 415.1 771.7 421C772.8 427 773.3 432.4 774.9 437.2C776.6 442.1 780.3 448 781.4 450.2"/><path d="M724.8 448.6C727.5 447.8 735.5 445.1 740.9 443.7C746.3 442.4 751.5 441.6 757.1 440.5C762.8 439.4 769.5 437.5 774.9 437.2C780.4 437 787.5 438.6 790 438.9"/><path d="M713.4 463.1C715.3 464.8 721.5 469.3 724.8 472.9C728 476.4 729.9 480.4 732.8 484.2C735.8 488 739.3 491.5 742.6 495.5C745.8 499.6 750.7 506.3 752.3 508.5"/><path d="M702.1 476.1C704.5 476.9 711.5 479.6 716.7 480.9C721.8 482.3 727.5 483.9 732.8 484.2C738.2 484.5 743.6 482.3 749 482.6C754.4 482.8 758.4 484.2 765.2 485.8C772.1 487.4 785.9 491.2 790 492.3"/><path d="M490 388.7C492.7 389.7 500.8 393 506.2 395.1C511.6 397.3 517 400 522.4 401.6C527.8 403.2 533.2 404.9 538.6 404.9C544 404.9 552.1 402.2 554.8 401.6"/><path d="M506.2 424.3C508.9 424.8 517.5 425.9 522.4 427.5C527.2 429.1 533.2 432.9 535.3 434"/><path d="M490 450.2C492.7 449.9 500.8 448.6 506.2 448.6C511.6 448.6 517.9 449.6 522.4 450.2C526.8 450.7 531.1 451.5 532.9 451.8"/><path d="M490 489C492.7 488.2 501.1 483.6 506.2 484.2C511.3 484.7 518.3 490.9 520.8 492.3"/><path d="M566.1 425.9C566.9 428.9 569.1 438 570.9 443.7C572.8 449.4 575.3 456.7 577.4 459.9C579.6 463.1 582.8 462.6 583.9 463.1"/><path d="M684.3 411.3C685.9 414 691.3 422.1 694 427.5C696.7 432.9 699.4 438.3 700.5 443.7C701.5 449.1 700.2 454.5 700.5 459.9C700.7 465.3 701.8 473.4 702.1 476.1"/><path d="M651.9 325.5C654.1 326.3 660 329.8 664.9 330.4C669.7 330.9 677.1 328.8 681 328.8C685 328.8 687.1 330.1 688.3 330.4"/><path d="M688.3 330.4C691.7 330.9 702.5 332 708.6 333.6C714.6 335.2 722.1 339 724.8 340.1"/><path d="M645.4 335.2C646.5 337.1 649.5 342 651.9 346.6C654.3 351.2 657.3 358.2 660 362.8C662.7 367.3 666.7 372.2 668.1 374.1"/></g><g stroke="#e4e4e4" stroke-width="2"><path d="M399.3 88C403.8 93.1 415.1 112.8 426.4 118.4C437.7 124.1 456.9 117.9 467 121.8C477.2 125.8 481.7 133.1 487.3 142.1C493 151.2 497.5 164.7 500.9 176C504.2 187.3 503.1 201.9 507.6 209.8C512.1 217.7 529.1 215.5 527.9 223.4C526.8 231.3 509.9 247 500.9 257.2C491.8 267.4 483.9 277.5 473.8 284.3C463.6 291 452.4 294.4 439.9 297.8C427.5 301.2 409.5 304.6 399.3 304.6C389.2 304.6 384.7 303.5 379 297.8C373.4 292.2 368.3 280.9 365.5 270.7C362.7 260.6 362.4 249.3 362.1 236.9C361.8 224.5 363.5 203.1 363.8 196.3"/><path d="M849.8 135.4C845.5 136.5 833.8 139.9 823.8 142.1C813.8 144.4 801.2 146.1 789.9 148.9C778.7 151.7 767.4 156.2 756.1 159.1C744.8 161.9 733.5 163 722.3 165.8C711 168.6 699.7 172 688.4 176C677.1 179.9 664.2 185 654.6 189.5C645 194 634.8 200.8 630.9 203.1"/><path d="M1053.7 0C1053.2 3.4 1051.7 13.5 1050.3 20.3C1049 27.1 1047.1 35 1045.6 40.6C1044.1 46.3 1043.9 49.9 1041.2 54.1C1038.5 58.4 1034.2 62.3 1029.4 66C1024.6 69.7 1019.8 71.9 1012.4 76.1C1005.1 80.4 995.5 86.5 985.4 91.4C975.2 96.3 962.8 101.1 951.5 105.6C940.2 110.1 929 114.6 917.7 118.4C906.4 122.3 895.1 125.8 883.8 128.6C872.6 131.4 855.6 134.2 850 135.4"/><path d="M559.8 420.6C564.3 420.9 576.7 422 586.9 422.3C597 422.6 609.5 422.6 620.7 422.3C632 422 648.9 420.9 654.6 420.6"/><path d="M722.3 457.8C727.9 460.1 744.8 468.2 756.1 471.3C767.4 474.4 778.7 474.7 789.9 476.4C801.2 478.1 812.5 479.5 823.8 481.5C835.1 483.5 846.4 485.4 857.6 488.3C868.9 491.1 885.8 496.7 891.5 498.4"/><path d="M850 478.1C855.6 480.4 872.6 487.7 883.8 491.7C895.1 495.6 906.4 499 917.7 501.8C929 504.6 940.2 505.8 951.5 508.6C962.8 511.4 974.1 515.3 985.4 518.7C996.6 522.1 1007.9 526.1 1019.2 528.9C1030.5 531.7 1041.8 533.4 1053.1 535.6C1064.3 537.9 1075.6 541.3 1086.9 542.4C1098.2 543.5 1109.5 543 1120.7 542.4C1132 541.9 1148.9 539.6 1154.6 539"/><path d="M1188.4 576.3C1194.1 573.4 1211 564.4 1222.3 559.3C1233.5 554.3 1244.8 549.7 1256.1 545.8C1267.4 541.9 1278.7 539.6 1289.9 535.6C1301.2 531.7 1312.5 526.1 1323.8 522.1C1335.1 518.2 1346.4 515.9 1357.6 512C1368.9 508 1380.2 501.2 1391.5 498.4C1402.8 495.6 1414 495 1425.3 495C1436.6 495 1447.9 495.6 1459.2 498.4C1470.4 501.2 1487.4 509.7 1493 512"/><path d="M917.7 579.6C923.3 581.3 940.2 587.5 951.5 589.8C962.8 592.1 974.1 593.2 985.4 593.2C996.6 593.2 1007.9 591.5 1019.2 589.8C1030.5 588.1 1041.8 583.6 1053.1 583C1064.3 582.5 1075.6 584.7 1086.9 586.4C1098.2 588.1 1109.5 591.8 1120.7 593.2C1132 594.6 1143.3 594.9 1154.6 594.9C1165.9 594.9 1182.8 593.5 1188.4 593.2"/><path d="M461.5 601.5C465.6 600.4 477 598.4 486.3 595.3C495.7 592.1 508.8 586.3 517.5 582.8C526.1 579.4 531.3 576.2 538.2 574.5C545.1 572.8 550.3 572.6 559 572.4C567.6 572.3 579.7 573.3 590.1 573.5C600.5 573.7 612.6 573.8 621.2 573.5C629.8 573.1 634.3 573 642 571.4C649.6 569.8 658.2 567.1 666.8 564.1C675.5 561.2 689.3 555.5 693.8 553.8"/><path d="M708.7 464.6C708.2 470.2 706.5 487.1 705.3 498.4C704.2 509.7 703.1 521 702 532.3C700.8 543.5 699.1 560.5 698.6 566.1"/><path d="M481.1 138C483.5 141.5 491.8 150.1 495.6 158.7C499.4 167.4 501.2 180.2 503.9 189.9C506.7 199.5 507.4 211.3 512.2 216.8C517.1 222.4 524.3 222 533 223.1C541.6 224.1 555.5 223.4 564.1 223.1C572.8 222.7 581.4 221.3 584.9 221"/><path d="M584.9 221C583.1 224.4 576.9 236.2 574.5 241.7C572.1 247.3 571 252.1 570.3 254.2"/><path d="M450 297.8C452.8 296.4 461.1 293.3 466.6 289.5C472.1 285.6 477.3 280.5 483.2 274.9C489.1 269.4 496 262.5 501.9 256.3C507.7 250 513.3 243.1 518.5 237.6C523.7 232.1 530.6 225.5 533 223.1"/><path d="M599.4 270.8C599.7 274.6 602.1 286 601.5 293.6C600.8 301.2 596.6 309.2 595.2 316.4C593.8 323.7 593.5 333.7 593.2 337.2"/><path d="M1476.1 518.7C1475.5 522.1 1471 533.4 1472.7 539C1474.4 544.7 1482.3 549.2 1486.2 552.6C1490.2 556 1494.7 558.2 1496.4 559.3"/></g><g stroke="#9b9b9b" stroke-width="1.1" stroke-dasharray="7 5" stroke-linecap="butt"><path d="M399.3 88C403.8 93.1 415.1 112.8 426.4 118.4C437.7 124.1 456.9 117.9 467 121.8C477.2 125.8 481.7 133.1 487.3 142.1C493 151.2 497.5 164.7 500.9 176C504.2 187.3 503.1 201.9 507.6 209.8C512.1 217.7 529.1 215.5 527.9 223.4C526.8 231.3 509.9 247 500.9 257.2C491.8 267.4 483.9 277.5 473.8 284.3C463.6 291 452.4 294.4 439.9 297.8C427.5 301.2 409.5 304.6 399.3 304.6C389.2 304.6 384.7 303.5 379 297.8C373.4 292.2 368.3 280.9 365.5 270.7C362.7 260.6 362.4 249.3 362.1 236.9C361.8 224.5 363.5 203.1 363.8 196.3"/><path d="M849.8 135.4C845.5 136.5 833.8 139.9 823.8 142.1C813.8 144.4 801.2 146.1 789.9 148.9C778.7 151.7 767.4 156.2 756.1 159.1C744.8 161.9 733.5 163 722.3 165.8C711 168.6 699.7 172 688.4 176C677.1 179.9 664.2 185 654.6 189.5C645 194 634.8 200.8 630.9 203.1"/><path d="M1053.7 0C1053.2 3.4 1051.7 13.5 1050.3 20.3C1049 27.1 1047.1 35 1045.6 40.6C1044.1 46.3 1043.9 49.9 1041.2 54.1C1038.5 58.4 1034.2 62.3 1029.4 66C1024.6 69.7 1019.8 71.9 1012.4 76.1C1005.1 80.4 995.5 86.5 985.4 91.4C975.2 96.3 962.8 101.1 951.5 105.6C940.2 110.1 929 114.6 917.7 118.4C906.4 122.3 895.1 125.8 883.8 128.6C872.6 131.4 855.6 134.2 850 135.4"/><path d="M559.8 420.6C564.3 420.9 576.7 422 586.9 422.3C597 422.6 609.5 422.6 620.7 422.3C632 422 648.9 420.9 654.6 420.6"/><path d="M722.3 457.8C727.9 460.1 744.8 468.2 756.1 471.3C767.4 474.4 778.7 474.7 789.9 476.4C801.2 478.1 812.5 479.5 823.8 481.5C835.1 483.5 846.4 485.4 857.6 488.3C868.9 491.1 885.8 496.7 891.5 498.4"/><path d="M850 478.1C855.6 480.4 872.6 487.7 883.8 491.7C895.1 495.6 906.4 499 917.7 501.8C929 504.6 940.2 505.8 951.5 508.6C962.8 511.4 974.1 515.3 985.4 518.7C996.6 522.1 1007.9 526.1 1019.2 528.9C1030.5 531.7 1041.8 533.4 1053.1 535.6C1064.3 537.9 1075.6 541.3 1086.9 542.4C1098.2 543.5 1109.5 543 1120.7 542.4C1132 541.9 1148.9 539.6 1154.6 539"/><path d="M1188.4 576.3C1194.1 573.4 1211 564.4 1222.3 559.3C1233.5 554.3 1244.8 549.7 1256.1 545.8C1267.4 541.9 1278.7 539.6 1289.9 535.6C1301.2 531.7 1312.5 526.1 1323.8 522.1C1335.1 518.2 1346.4 515.9 1357.6 512C1368.9 508 1380.2 501.2 1391.5 498.4C1402.8 495.6 1414 495 1425.3 495C1436.6 495 1447.9 495.6 1459.2 498.4C1470.4 501.2 1487.4 509.7 1493 512"/><path d="M917.7 579.6C923.3 581.3 940.2 587.5 951.5 589.8C962.8 592.1 974.1 593.2 985.4 593.2C996.6 593.2 1007.9 591.5 1019.2 589.8C1030.5 588.1 1041.8 583.6 1053.1 583C1064.3 582.5 1075.6 584.7 1086.9 586.4C1098.2 588.1 1109.5 591.8 1120.7 593.2C1132 594.6 1143.3 594.9 1154.6 594.9C1165.9 594.9 1182.8 593.5 1188.4 593.2"/><path d="M461.5 601.5C465.6 600.4 477 598.4 486.3 595.3C495.7 592.1 508.8 586.3 517.5 582.8C526.1 579.4 531.3 576.2 538.2 574.5C545.1 572.8 550.3 572.6 559 572.4C567.6 572.3 579.7 573.3 590.1 573.5C600.5 573.7 612.6 573.8 621.2 573.5C629.8 573.1 634.3 573 642 571.4C649.6 569.8 658.2 567.1 666.8 564.1C675.5 561.2 689.3 555.5 693.8 553.8"/><path d="M708.7 464.6C708.2 470.2 706.5 487.1 705.3 498.4C704.2 509.7 703.1 521 702 532.3C700.8 543.5 699.1 560.5 698.6 566.1"/><path d="M481.1 138C483.5 141.5 491.8 150.1 495.6 158.7C499.4 167.4 501.2 180.2 503.9 189.9C506.7 199.5 507.4 211.3 512.2 216.8C517.1 222.4 524.3 222 533 223.1C541.6 224.1 555.5 223.4 564.1 223.1C572.8 222.7 581.4 221.3 584.9 221"/><path d="M584.9 221C583.1 224.4 576.9 236.2 574.5 241.7C572.1 247.3 571 252.1 570.3 254.2"/><path d="M450 297.8C452.8 296.4 461.1 293.3 466.6 289.5C472.1 285.6 477.3 280.5 483.2 274.9C489.1 269.4 496 262.5 501.9 256.3C507.7 250 513.3 243.1 518.5 237.6C523.7 232.1 530.6 225.5 533 223.1"/><path d="M599.4 270.8C599.7 274.6 602.1 286 601.5 293.6C600.8 301.2 596.6 309.2 595.2 316.4C593.8 323.7 593.5 333.7 593.2 337.2"/><path d="M1476.1 518.7C1475.5 522.1 1471 533.4 1472.7 539C1474.4 544.7 1482.3 549.2 1486.2 552.6C1490.2 556 1494.7 558.2 1496.4 559.3"/></g><g stroke="#f2c058" stroke-width="3.700"><path d="M603.5 216.8C603.7 221 604.4 234.1 604.6 241.7C604.7 249.3 604.7 255.6 604.6 262.5C604.4 269.4 603.5 276.3 603.5 283.2C603.5 290.1 603.5 299.9 604.6 304C605.6 308.1 608.8 303.3 609.8 307.7C610.8 312.1 610.6 325 610.6 330.4C610.6 335.8 611.3 336.6 609.8 340.1C608.3 343.6 604.9 347.6 601.7 351.4C598.5 355.2 592.8 358.2 590.4 362.8C587.9 367.3 586.6 373.6 587.1 378.9C587.7 384.3 591.5 390.3 593.6 395.1C595.8 400 598.9 402.7 600.1 408.1C601.3 413.5 601.7 421.6 600.9 427.5C600.1 433.5 596.7 438.3 595.2 443.7C593.8 449.1 592 454.5 592 459.9C592 465.3 593.9 470.7 595.2 476.1C596.6 481.5 599 485.1 600.1 492.3C601.2 499.4 601.4 514.5 601.7 519"/><path d="M506 285.3C508.8 283.9 516.4 280.1 522.6 277C528.8 273.9 536.8 269.1 543.4 266.6C549.9 264.2 555.5 262.1 562 262.5C568.6 262.8 575.5 267.8 582.8 268.7C590 269.6 598 268.7 605.6 267.7C613.2 266.6 621.5 265.2 628.4 262.5C635.3 259.7 640.5 255.2 647.1 251.1C653.7 246.9 662 241.6 667.8 237.6C673.7 233.6 677.2 230.3 682.4 227.2C687.6 224.1 694.3 223.4 699 218.9C703.6 214.4 708.3 204 710.4 200.2C712.4 196.4 711.2 196.8 711.4 196.1"/><path d="M578.6 301.9C581.4 300.9 589 297.2 595.2 295.7C601.5 294.1 609.1 293.3 616 292.6C622.9 291.9 629.8 292 636.7 291.5C643.6 291 650.6 290.8 657.5 289.5C664.4 288.1 671.3 285 678.2 283.2C685.1 281.5 692 280.3 699 279.1C705.9 277.9 716.3 276.5 719.7 276"/><path d="M604.6 221C605.8 218.2 609.2 209.6 611.8 204.4C614.4 199.2 616 194 620.1 189.9C624.3 185.7 630.5 182.6 636.7 179.5C642.9 176.4 651.9 170.2 657.5 171.2C663 172.2 665.8 181.2 669.9 185.7C674.1 190.2 675.4 196.3 682.4 198.2C689.3 200.1 706.4 191.9 711.4 197.1C716.4 202.3 714.5 221.2 712.4 229.3C710.4 237.4 702.4 241.7 699 245.9C695.5 250 693.1 248 691.7 254.2C690.3 260.4 691.2 273.2 690.7 283.2C690.1 293.3 688.9 304 688.6 314.3C688.2 324.7 688.6 342.8 688.6 345.5C688.5 348.1 688.2 327.5 688.3 330.4C688.4 333.3 689.4 352 689.1 362.8C688.9 373.6 687.5 387 686.7 395.1C685.9 403.2 684.7 408.6 684.3 411.3"/><path d="M682.4 200.2C681.3 202.3 679.9 207.8 676.1 212.7C672.3 217.5 664 224.4 659.5 229.3C655 234.1 650.9 239.7 649.2 241.7"/><path d="M533.7 443.7C535.3 442.9 539.4 441.6 543.4 438.9C547.5 436.2 553.4 429.9 558 427.5C562.6 425.1 566.1 425 570.9 424.3C575.8 423.6 581.7 423.6 587.1 423.5C592.5 423.3 597.9 423.3 603.3 423.5C608.7 423.6 614.1 423.9 619.5 424.3C624.9 424.7 630.3 425.4 635.7 425.9C641.1 426.4 647 427.2 651.9 427.5C656.8 427.8 660.8 428.2 664.9 427.5C668.9 426.8 671.6 425 676.2 423.5C680.8 422 686.4 419.4 692.4 418.6C698.3 417.8 708.6 418.6 711.8 418.6"/><path d="M611.4 359.5C613.3 360.9 619.2 364.9 622.8 367.6C626.3 370.3 630.9 374.4 632.5 375.7"/><path d="M541.3 210.6C541.5 214.1 541.3 224.8 542.3 231.4C543.4 237.9 544.2 244.8 547.5 250C550.8 255.2 558.9 256.9 562 262.5C565.1 268 564.1 277 566.2 283.2C568.3 289.5 571.7 295.3 574.5 299.8C577.2 304.3 581.4 308.5 582.8 310.2"/></g><g stroke="#fcd97e" stroke-width="2.300"><path d="M603.5 216.8C603.7 221 604.4 234.1 604.6 241.7C604.7 249.3 604.7 255.6 604.6 262.5C604.4 269.4 603.5 276.3 603.5 283.2C603.5 290.1 603.5 299.9 604.6 304C605.6 308.1 608.8 303.3 609.8 307.7C610.8 312.1 610.6 325 610.6 330.4C610.6 335.8 611.3 336.6 609.8 340.1C608.3 343.6 604.9 347.6 601.7 351.4C598.5 355.2 592.8 358.2 590.4 362.8C587.9 367.3 586.6 373.6 587.1 378.9C587.7 384.3 591.5 390.3 593.6 395.1C595.8 400 598.9 402.7 600.1 408.1C601.3 413.5 601.7 421.6 600.9 427.5C600.1 433.5 596.7 438.3 595.2 443.7C593.8 449.1 592 454.5 592 459.9C592 465.3 593.9 470.7 595.2 476.1C596.6 481.5 599 485.1 600.1 492.3C601.2 499.4 601.4 514.5 601.7 519"/><path d="M506 285.3C508.8 283.9 516.4 280.1 522.6 277C528.8 273.9 536.8 269.1 543.4 266.6C549.9 264.2 555.5 262.1 562 262.5C568.6 262.8 575.5 267.8 582.8 268.7C590 269.6 598 268.7 605.6 267.7C613.2 266.6 621.5 265.2 628.4 262.5C635.3 259.7 640.5 255.2 647.1 251.1C653.7 246.9 662 241.6 667.8 237.6C673.7 233.6 677.2 230.3 682.4 227.2C687.6 224.1 694.3 223.4 699 218.9C703.6 214.4 708.3 204 710.4 200.2C712.4 196.4 711.2 196.8 711.4 196.1"/><path d="M578.6 301.9C581.4 300.9 589 297.2 595.2 295.7C601.5 294.1 609.1 293.3 616 292.6C622.9 291.9 629.8 292 636.7 291.5C643.6 291 650.6 290.8 657.5 289.5C664.4 288.1 671.3 285 678.2 283.2C685.1 281.5 692 280.3 699 279.1C705.9 277.9 716.3 276.5 719.7 276"/><path d="M604.6 221C605.8 218.2 609.2 209.6 611.8 204.4C614.4 199.2 616 194 620.1 189.9C624.3 185.7 630.5 182.6 636.7 179.5C642.9 176.4 651.9 170.2 657.5 171.2C663 172.2 665.8 181.2 669.9 185.7C674.1 190.2 675.4 196.3 682.4 198.2C689.3 200.1 706.4 191.9 711.4 197.1C716.4 202.3 714.5 221.2 712.4 229.3C710.4 237.4 702.4 241.7 699 245.9C695.5 250 693.1 248 691.7 254.2C690.3 260.4 691.2 273.2 690.7 283.2C690.1 293.3 688.9 304 688.6 314.3C688.2 324.7 688.6 342.8 688.6 345.5C688.5 348.1 688.2 327.5 688.3 330.4C688.4 333.3 689.4 352 689.1 362.8C688.9 373.6 687.5 387 686.7 395.1C685.9 403.2 684.7 408.6 684.3 411.3"/><path d="M682.4 200.2C681.3 202.3 679.9 207.8 676.1 212.7C672.3 217.5 664 224.4 659.5 229.3C655 234.1 650.9 239.7 649.2 241.7"/><path d="M533.7 443.7C535.3 442.9 539.4 441.6 543.4 438.9C547.5 436.2 553.4 429.9 558 427.5C562.6 425.1 566.1 425 570.9 424.3C575.8 423.6 581.7 423.6 587.1 423.5C592.5 423.3 597.9 423.3 603.3 423.5C608.7 423.6 614.1 423.9 619.5 424.3C624.9 424.7 630.3 425.4 635.7 425.9C641.1 426.4 647 427.2 651.9 427.5C656.8 427.8 660.8 428.2 664.9 427.5C668.9 426.8 671.6 425 676.2 423.5C680.8 422 686.4 419.4 692.4 418.6C698.3 417.8 708.6 418.6 711.8 418.6"/><path d="M611.4 359.5C613.3 360.9 619.2 364.9 622.8 367.6C626.3 370.3 630.9 374.4 632.5 375.7"/><path d="M541.3 210.6C541.5 214.1 541.3 224.8 542.3 231.4C543.4 237.9 544.2 244.8 547.5 250C550.8 255.2 558.9 256.9 562 262.5C565.1 268 564.1 277 566.2 283.2C568.3 289.5 571.7 295.3 574.5 299.8C577.2 304.3 581.4 308.5 582.8 310.2"/></g><g stroke="#ea9a42" stroke-width="4.300"><path d="M678.2 245.9C680.6 244.2 687.6 238.4 692.7 235.5C697.9 232.6 704.8 230.3 709.3 228.2C713.8 226.2 714.5 225.3 719.7 223.1C724.9 220.8 733.5 217.2 740.5 214.8C747.4 212.3 754.3 210.3 761.2 208.5C768.1 206.8 775 205.4 782 204.4C788.9 203.4 795.8 203 802.7 202.3C809.6 201.6 815.6 201 823.4 200.2C831.3 199.5 842.8 200.2 850 197.8C857.2 195.3 861 188.4 866.9 185.5C872.8 182.5 877.1 181.4 885.5 180C894 178.7 906.7 177.2 917.7 177.3C928.7 177.5 940.8 179.7 951.5 181.1C962.2 182.4 973.5 184.9 982 185.5C990.4 186 992.7 185.7 1002.3 184.4C1011.9 183.1 1026.5 179.4 1039.5 177.7C1052.5 176 1068.8 175.8 1080.1 174.3C1091.4 172.8 1099.9 170.5 1107.2 168.5C1114.5 166.6 1118.5 165.7 1124.1 162.4C1129.8 159.2 1134.8 155.1 1141 148.9C1147.2 142.7 1154.6 133.1 1161.3 125.2C1168.1 117.3 1174.9 110 1181.7 101.5C1188.4 93.1 1195.2 84 1202 74.5C1208.7 64.9 1214.9 53 1222.3 44C1229.6 35 1237.5 28.2 1246 20.3C1254.4 12.4 1268.5 0.6 1273 -3.4"/><path d="M998.9 -3.4C996.6 1.1 991.6 15.8 985.4 23.7C979.2 31.6 970.1 38.4 961.7 44C953.2 49.6 944.2 53.3 934.6 57.5C925 61.8 913.2 64.9 904.1 69.4C895.1 73.9 887.8 79.2 880.5 84.6C873.1 90 870.7 94.2 860.2 101.5C849.6 108.9 828.7 121.3 817 128.6C805.3 135.9 796.7 140.7 789.9 145.5C783.2 150.3 781.9 151.7 776.4 157.4C770.9 163 763 173.7 757.1 179.5C751.1 185.3 746 187.8 740.5 191.9C734.9 196.1 729.4 199.9 723.9 204.4C718.3 208.9 712.1 214.8 707.3 218.9C702.4 223.1 699.7 224.8 694.8 229.3C690 233.8 683.1 240.7 678.2 245.9C673.4 251.1 669.9 255.6 665.8 260.4C661.6 265.2 657.1 269.7 653.3 274.9C649.5 280.1 645.7 286 642.9 291.5C640.2 297.1 638 303.3 636.7 308.1C635.4 313 635 318.8 635.1 320.6C635.2 322.4 635.6 317.7 637.3 319C639.1 320.4 641.6 325.8 645.4 328.8C649.2 331.7 654.1 333.9 660 336.9C665.9 339.8 674.3 343.1 681 346.6C687.8 350.1 694.5 354.9 700.5 357.9C706.4 360.9 711.3 362.2 716.7 364.4C722.1 366.5 727.5 369 732.8 370.9C738.2 372.7 743.6 373.6 749 375.7C754.4 377.9 759.8 381.1 765.2 383.8C770.6 386.5 777.3 390 781.4 391.9C785.5 393.8 782.9 393.2 790 395.1C797.1 397.1 813.6 400.8 823.8 403.7C833.9 406.5 842.4 409.3 850.9 412.1C859.3 414.9 867.8 416.9 874.6 420.6C881.3 424.3 885.8 429 891.5 434.1C897.1 439.2 903.3 446 908.4 451C913.5 456.1 916.3 461.2 921.9 464.6C927.6 468 931.7 466.6 942.2 471.3C952.8 476.1 972.5 487.1 985.4 493.3C998.2 499.5 1007.9 503.8 1019.2 508.6C1030.5 513.4 1041.8 518.7 1053.1 522.1C1064.3 525.5 1075.6 527.5 1086.9 528.9C1098.2 530.3 1110.6 530 1120.7 530.6C1130.9 531.1 1138.8 530.6 1147.8 532.3C1156.8 534 1165.3 538.2 1174.9 540.7C1184.5 543.3 1194.6 545.2 1205.3 547.5C1216.1 549.7 1230.7 553.4 1239.2 554.3C1247.6 555.1 1249.9 554.5 1256.1 552.6C1262.3 550.6 1269.1 545 1276.4 542.4C1283.7 539.9 1292.2 536.8 1300.1 537.3C1308 537.9 1315.3 542.7 1323.8 545.8C1332.2 548.9 1343 553.1 1350.9 556C1358.8 558.8 1364.4 559.3 1371.2 562.7C1377.9 566.1 1384.7 571.7 1391.5 576.3C1398.2 580.8 1405 586.4 1411.8 589.8C1418.5 593.2 1424.2 595.4 1432.1 596.6C1440 597.7 1448.4 596 1459.2 596.6C1469.9 597.1 1490.2 599.4 1496.4 599.9"/><path d="M882.2 88C882.7 91.9 885 101.8 885.5 111.7C886.1 121.5 885.5 136.2 885.5 147.2C885.5 158.2 885 167.2 885.5 177.7C886.1 188.1 886.4 197.7 888.9 209.8C891.5 221.9 896 237.5 900.8 250.4C905.6 263.4 914 275.2 917.7 287.7C921.4 300.1 920.5 313 922.8 324.9C925 336.7 929 346.9 931.2 358.7C933.5 370.6 936.3 384.7 936.3 396C936.3 407.2 933.5 415.8 931.2 426.4C929 437.1 924.7 453.3 922.8 459.9C920.8 466.6 922.5 460.4 919.4 466.3C916.3 472.1 907.5 486.3 904.1 495C900.8 503.8 900.2 509.7 899.1 518.7C897.9 527.8 899.6 539.6 897.4 549.2C895.1 558.8 890.9 568.6 885.5 576.3C880.2 583.9 870.6 589.2 865.2 594.9C859.9 600.5 856.2 605.6 853.4 610.1C850.6 614.6 849.2 620 848.3 621.9"/><path d="M1086.9 -3.4C1087.5 2.8 1089.2 22 1090.3 33.8C1091.4 45.7 1092 56.4 1093.7 67.7C1095.4 79 1097.6 90.2 1100.4 101.5C1103.3 112.8 1107.2 125.8 1110.6 135.4C1114 145 1118.2 150.6 1120.7 159.1C1123.3 167.5 1124.7 176 1125.8 186.1C1126.9 196.3 1127.8 208.7 1127.5 220C1127.2 231.3 1125.8 243.7 1124.1 253.8C1122.4 264 1119 272.4 1117.4 280.9C1115.7 289.4 1114.3 295 1114 304.6C1113.7 314.2 1115.7 327.1 1115.7 338.4C1115.7 349.7 1115.1 362.1 1114 372.3C1112.8 382.4 1109.5 389.2 1108.9 399.3C1108.3 409.5 1110 423.1 1110.6 433.2C1111.1 443.3 1111.4 451.9 1112.3 459.9C1113.1 468 1114.8 472.3 1115.7 481.5C1116.5 490.7 1116.8 506.9 1117.4 515.3C1117.9 523.8 1118.5 523.8 1119 532.3C1119.6 540.7 1119.9 557.6 1120.7 566.1C1121.6 574.6 1121.3 578 1124.1 583C1126.9 588.1 1132.6 592.1 1137.7 596.6C1142.7 601.1 1149.2 605.9 1154.6 610.1C1159.9 614.3 1167.3 620 1169.8 621.9"/><path d="M1120.7 556C1119.6 557.1 1118.2 558.8 1114 562.7C1109.7 566.7 1099.9 573.4 1095.4 579.6C1090.8 585.8 1089 592.9 1086.9 599.9C1084.8 607 1083.5 618.3 1082.8 621.9"/><path d="M1327.2 -3.4C1330.6 1.7 1340.7 15.2 1347.5 27.1C1354.2 38.9 1360.5 54.7 1367.8 67.7C1375.1 80.7 1384.1 94.5 1391.5 104.9C1398.8 115.3 1405 121.8 1411.8 130.3C1418.5 138.8 1425.9 146.9 1432.1 155.7C1438.3 164.4 1444.8 172.6 1449 182.7C1453.2 192.9 1455.5 206.4 1457.5 216.6C1459.4 226.7 1459.4 234.6 1460.8 243.7C1462.3 252.7 1464 262.3 1465.9 270.7C1467.9 279.2 1469.9 288.5 1472.7 294.4C1475.5 300.3 1478.9 303.7 1482.8 306.3C1486.8 308.8 1494.1 309.1 1496.4 309.7"/><path d="M1482.8 302.9C1478.9 304 1468.7 306.6 1459.2 309.7C1449.6 312.8 1435.5 316.7 1425.3 321.5C1415.2 326.3 1407.3 333.3 1398.2 338.4C1389.2 343.5 1378.8 348 1371.2 352C1363.6 355.9 1355.7 360.4 1352.6 362.1"/><path d="M1339 321.5C1341.6 324.9 1350 334.5 1354.2 341.8C1358.5 349.1 1361.9 357 1364.4 365.5C1366.9 374 1368.1 383 1369.5 392.6C1370.9 402.2 1372 411.8 1372.9 423C1373.7 434.3 1374.4 447.3 1374.6 459.9C1374.7 472.5 1374.4 486.4 1373.9 498.4C1373.3 510.5 1371.9 521.8 1371.2 532.3C1370.4 542.7 1369.8 556.2 1369.5 561"/><path d="M784 165C783.9 169.1 783.3 183 783 189.9C782.6 196.8 783.5 200.6 782 206.5C780.4 212.3 776.4 218.6 773.7 225.1C770.9 231.7 767.8 238.3 765.4 245.9C762.9 253.5 760.9 263.2 759.1 270.8C757.4 278.4 756.7 284.6 755 291.5C753.3 298.4 750.1 305.4 748.8 312.3C747.4 319.2 746.5 327.5 746.7 333C746.9 338.6 748.9 343.2 749.8 345.5C750.7 347.7 751.3 343.7 752.3 346.6C753.2 349.5 755.2 357.4 755.5 362.8C755.8 368.2 755.2 373 753.9 378.9C752.5 384.9 749.6 392.4 747.4 398.4C745.3 404.3 743.4 408.9 740.9 414.6C738.5 420.2 735.5 426.7 732.8 432.4C730.2 438 728 443.4 724.8 448.6C721.5 453.7 717.2 458.6 713.4 463.1C709.6 467.7 705.3 471.2 702.1 476.1C698.9 480.9 695.9 486.9 694 492.3C692.1 497.7 691.4 504.2 690.8 508.5C690.1 512.8 692.6 512.9 689.9 518C687.3 523.1 679.1 532.4 674.9 539C670.7 545.6 666.7 550.3 664.7 557.6C662.8 565 662.8 576 663 583C663.3 590.1 666.7 593.5 666.4 599.9C666.1 606.4 662.2 618.3 661.3 621.9"/><path d="M518.5 215.8C520.2 215.3 524.7 213.6 528.8 212.7C533 211.8 536.4 211.4 543.4 210.6C550.3 209.9 562.7 208.4 570.3 208.1C577.9 207.9 583.6 208.2 589 209.2C594.4 210.1 598 211.8 602.5 213.7C607 215.7 612 218.4 616 221C620 223.6 622.9 226.9 626.3 229.3C629.8 231.7 633.3 233.8 636.7 235.5C640.2 237.2 642.6 238.1 647.1 239.7C651.6 241.2 658.5 242.6 663.7 244.8C668.9 247.1 673.7 250.6 678.2 253.1C682.7 255.7 687.2 257.8 690.7 260.4C694.1 263 696.2 266.3 699 268.7C701.7 271.1 703.8 273.7 707.3 274.9C710.7 276.1 714.2 276.1 719.7 276C725.2 275.8 734.2 274.4 740.5 273.9C746.7 273.4 751.5 273 757.1 272.9C762.6 272.7 770.9 272.9 773.7 272.9"/><path d="M698.6 16.9C694.6 18.6 682.2 24.3 674.9 27.1C667.6 29.9 659.9 31 654.6 33.8C649.3 36.7 648.7 38.9 643.1 44C637.4 49.1 627.8 57.5 620.7 64.3C613.6 71.1 606.6 77.8 600.4 84.6C594.2 91.4 588 99.3 583.5 104.9C579 110.6 575.6 113.4 573.4 118.4C571.1 123.5 570.7 127.4 570 135.4C569.3 143.4 569.3 154.4 569.3 166.5C569.3 178.6 569.9 201.2 570 208.1"/><path d="M463.4 30.5C461.6 37.5 453.4 60.9 452.5 72.8C451.7 84.6 455.9 95 458.3 101.5C460.7 108 462.2 108.9 466.8 111.7C471.3 114.5 479.4 115.1 485.4 118.4C491.3 121.8 496.6 126.9 502.3 132C507.9 137.1 514.7 142.7 519.2 148.9C523.7 155.1 526.5 162.4 529.4 169.2C532.2 176 534.3 182.6 536.1 189.5C537.9 196.4 539.5 207 540.2 210.5"/><path d="M518.5 215.8C516 217 508.1 219.8 503.9 223.1C499.8 226.3 496.2 230.7 493.6 235.5C491 240.4 489.9 245.9 488.4 252.1C486.8 258.3 485.4 265.6 484.2 272.9C483 280.1 482.2 288.4 481.1 295.7C480.1 302.9 478.7 310.5 478 316.4C477.3 322.3 476.5 326.1 477 330.9C477.5 335.8 480.1 339.6 481.1 345.5C482.2 351.3 482.3 359.3 483.2 366.2C484.1 373.1 485.4 380 486.3 387C487.2 393.9 487.8 402.8 488.4 407.7C489 412.6 488.2 413.2 490 416.2C491.9 419.2 496.5 422.4 499.7 425.9C502.9 429.4 506.5 433.2 509.4 437.2C512.4 441.3 514.3 446.1 517.5 450.2C520.8 454.2 524.5 458.6 528.9 461.5C533.2 464.5 538.3 465.8 543.4 468C548.6 470.2 554.5 472.3 559.6 474.5C564.7 476.6 570.4 478.5 574.2 480.9C578 483.4 580.1 486.1 582.3 489C584.4 492 585 496.1 587.1 498.8C589.3 501.5 591.5 503.9 595.2 505.2C599 506.6 604.9 507.4 609.8 506.9C614.7 506.3 619.5 503.7 624.4 502C629.2 500.2 634.4 497.5 638.9 496.3C643.5 495.1 647 494.3 651.9 494.7C656.8 495.1 663.2 496.7 668.1 498.8C672.9 500.8 677.3 504.4 681 506.9C684.8 509.3 689.1 512.2 690.8 513.3"/><path d="M211.5 -3.4C212.4 2.8 214.3 22 216.6 33.8C218.8 45.7 221.7 57 225.1 67.7C228.4 78.4 232.7 89.7 236.9 98.1C241.1 106.6 244.8 112.2 250.4 118.4C256.1 124.7 265.1 129.7 270.7 135.4C276.4 141 280.9 146.1 284.3 152.3C287.7 158.5 288.8 166.7 291 172.6C293.3 178.5 293.3 183.3 297.8 187.8C302.3 192.3 310.8 195.4 318.1 199.7C325.4 203.9 335 208.7 341.8 213.2C348.6 217.7 353.6 222.8 358.7 226.7C363.8 230.7 367.2 233.8 372.3 236.9C377.3 240 380.7 242.3 389.2 245.4C397.6 248.5 411.7 253 423 255.5C434.3 258 446.7 259.5 456.9 260.6C467 261.7 478.9 262.2 483.9 262.3C489 262.3 486.8 261.1 487.3 260.8"/><path d="M358.7 37.2C358.2 42.3 356.5 57 355.3 67.7C354.2 78.4 353.6 90.2 352 101.5C350.3 112.8 347.4 125.2 345.2 135.4C342.9 145.5 339 154.5 338.4 162.4C337.9 170.3 339.5 176 341.8 182.7C344.1 189.5 349.7 196.3 352 203.1C354.2 209.8 355.3 215.5 355.3 223.4C355.3 231.3 353.6 242.5 352 250.4C350.3 258.3 347.4 262.8 345.2 270.7C342.9 278.6 341.8 289.4 338.4 297.8C335 306.3 328 312.5 324.9 321.5C321.8 330.5 320.7 347.3 319.8 352C319 356.6 319.5 344.8 319.8 349.5C320.1 354.2 320.7 368.7 321.5 380C322.3 391.3 324.9 405.9 324.9 417.2C324.9 428.5 324.3 438.6 321.5 447.7C318.7 456.7 310.5 462.9 308 471.3C305.4 479.8 306.3 488.3 306.3 498.4C306.3 508.6 309.4 522.1 308 532.3C306.6 542.4 300.6 550.9 297.8 559.3C295 567.8 289.9 575.7 291 583C292.2 590.4 298.7 596.8 304.6 603.3C310.5 609.8 322.9 618.8 326.6 621.9"/><path d="M-1.7 396.9C2 396.3 11.6 394.6 20.3 393.5C29 392.4 40.6 390.7 50.8 390.1C60.9 389.6 71.1 389.6 81.2 390.1C91.4 390.7 102.7 391.3 111.7 393.5C120.7 395.8 128 401.1 135.4 403.7C142.7 406.2 148.3 408.2 155.7 408.7C163 409.3 171.5 409.6 179.4 407C187.3 404.5 195.7 398 203.1 393.5C210.4 389 215.5 383.4 223.4 380C231.3 376.6 242.5 374.9 250.4 373.2C258.3 371.5 264.5 373.2 270.7 369.8C276.9 366.4 282 356.6 287.7 352.9C293.3 349.2 298.4 349 304.6 347.8C310.8 346.7 317 345.3 324.9 346.1C332.8 347 344.6 351.2 352 352.9C359.3 354.6 362.7 356.8 368.9 356.3C375.1 355.7 383 349.5 389.2 349.5C395.4 349.5 400.5 353.7 406.1 356.3C411.7 358.8 416.8 363.6 423 364.7C429.2 365.9 434.9 364.2 443.3 363.1C451.8 361.9 466.5 358.5 473.8 358C481.1 357.4 485.1 359.4 487.3 359.7"/><path d="M533.7 443.7C533.6 447.8 533.5 461.4 532.9 468C532.3 474.6 532.5 477.2 529.9 483.2C527.3 489.2 523 497.4 517.5 504C511.9 510.5 502.9 516.8 496.7 522.6C490.5 528.5 483.9 533.4 480.1 539.2C476.3 545.1 475.3 551.7 473.9 557.9C472.5 564.1 474.9 571.1 471.8 576.6C468.7 582.1 461.5 588 455.2 591.1C449 594.2 441.4 594.6 434.5 595.3C427.6 596 420.7 594.6 413.7 595.3C406.8 596 398.9 597.3 393 599.4C387.1 601.5 382.8 604.1 378.5 607.7C374.1 611.3 369 618.9 367.1 621.2"/><path d="M632.5 375.7C634.6 376.3 640.8 378.9 645.4 378.9C650 378.9 655.4 376.5 660 375.7C664.6 374.9 667.5 373.8 672.9 374.1C678.3 374.4 685.1 376.3 692.4 377.3C699.7 378.4 709.4 379.5 716.7 380.6C723.9 381.6 730.2 383.5 736.1 383.8C742 384.1 747.4 383 752.3 382.2C757.1 381.4 758.9 380.8 765.2 378.9C771.5 377.1 783.6 373.2 790 370.9C796.4 368.5 799.3 366.2 803.5 364.7C807.7 363.3 813.4 362.8 815.3 362.4"/><path d="M-1.7 15.2C0.8 13.8 8.7 9.6 13.5 6.8C18.3 3.9 24.8 -0.3 27.1 -1.7"/><path d="M480.6 -1.7 L477.9 10.2"/><path d="M473.8 8.5C478.3 7.5 491.8 4 500.9 2.7C509.9 1.4 518.3 0.5 527.9 0.7C537.5 0.9 549.4 2.5 558.4 4.1C567.4 5.6 574.2 9.8 582.1 10.2C590 10.5 598.4 8.1 605.8 6.1C613.1 4.1 622.7 -0.4 626.1 -1.7"/><path d="M690.8 513.3 L700.5 518"/></g><g stroke="#f8ba70" stroke-width="2.500"><path d="M678.2 245.9C680.6 244.2 687.6 238.4 692.7 235.5C697.9 232.6 704.8 230.3 709.3 228.2C713.8 226.2 714.5 225.3 719.7 223.1C724.9 220.8 733.5 217.2 740.5 214.8C747.4 212.3 754.3 210.3 761.2 208.5C768.1 206.8 775 205.4 782 204.4C788.9 203.4 795.8 203 802.7 202.3C809.6 201.6 815.6 201 823.4 200.2C831.3 199.5 842.8 200.2 850 197.8C857.2 195.3 861 188.4 866.9 185.5C872.8 182.5 877.1 181.4 885.5 180C894 178.7 906.7 177.2 917.7 177.3C928.7 177.5 940.8 179.7 951.5 181.1C962.2 182.4 973.5 184.9 982 185.5C990.4 186 992.7 185.7 1002.3 184.4C1011.9 183.1 1026.5 179.4 1039.5 177.7C1052.5 176 1068.8 175.8 1080.1 174.3C1091.4 172.8 1099.9 170.5 1107.2 168.5C1114.5 166.6 1118.5 165.7 1124.1 162.4C1129.8 159.2 1134.8 155.1 1141 148.9C1147.2 142.7 1154.6 133.1 1161.3 125.2C1168.1 117.3 1174.9 110 1181.7 101.5C1188.4 93.1 1195.2 84 1202 74.5C1208.7 64.9 1214.9 53 1222.3 44C1229.6 35 1237.5 28.2 1246 20.3C1254.4 12.4 1268.5 0.6 1273 -3.4"/><path d="M998.9 -3.4C996.6 1.1 991.6 15.8 985.4 23.7C979.2 31.6 970.1 38.4 961.7 44C953.2 49.6 944.2 53.3 934.6 57.5C925 61.8 913.2 64.9 904.1 69.4C895.1 73.9 887.8 79.2 880.5 84.6C873.1 90 870.7 94.2 860.2 101.5C849.6 108.9 828.7 121.3 817 128.6C805.3 135.9 796.7 140.7 789.9 145.5C783.2 150.3 781.9 151.7 776.4 157.4C770.9 163 763 173.7 757.1 179.5C751.1 185.3 746 187.8 740.5 191.9C734.9 196.1 729.4 199.9 723.9 204.4C718.3 208.9 712.1 214.8 707.3 218.9C702.4 223.1 699.7 224.8 694.8 229.3C690 233.8 683.1 240.7 678.2 245.9C673.4 251.1 669.9 255.6 665.8 260.4C661.6 265.2 657.1 269.7 653.3 274.9C649.5 280.1 645.7 286 642.9 291.5C640.2 297.1 638 303.3 636.7 308.1C635.4 313 635 318.8 635.1 320.6C635.2 322.4 635.6 317.7 637.3 319C639.1 320.4 641.6 325.8 645.4 328.8C649.2 331.7 654.1 333.9 660 336.9C665.9 339.8 674.3 343.1 681 346.6C687.8 350.1 694.5 354.9 700.5 357.9C706.4 360.9 711.3 362.2 716.7 364.4C722.1 366.5 727.5 369 732.8 370.9C738.2 372.7 743.6 373.6 749 375.7C754.4 377.9 759.8 381.1 765.2 383.8C770.6 386.5 777.3 390 781.4 391.9C785.5 393.8 782.9 393.2 790 395.1C797.1 397.1 813.6 400.8 823.8 403.7C833.9 406.5 842.4 409.3 850.9 412.1C859.3 414.9 867.8 416.9 874.6 420.6C881.3 424.3 885.8 429 891.5 434.1C897.1 439.2 903.3 446 908.4 451C913.5 456.1 916.3 461.2 921.9 464.6C927.6 468 931.7 466.6 942.2 471.3C952.8 476.1 972.5 487.1 985.4 493.3C998.2 499.5 1007.9 503.8 1019.2 508.6C1030.5 513.4 1041.8 518.7 1053.1 522.1C1064.3 525.5 1075.6 527.5 1086.9 528.9C1098.2 530.3 1110.6 530 1120.7 530.6C1130.9 531.1 1138.8 530.6 1147.8 532.3C1156.8 534 1165.3 538.2 1174.9 540.7C1184.5 543.3 1194.6 545.2 1205.3 547.5C1216.1 549.7 1230.7 553.4 1239.2 554.3C1247.6 555.1 1249.9 554.5 1256.1 552.6C1262.3 550.6 1269.1 545 1276.4 542.4C1283.7 539.9 1292.2 536.8 1300.1 537.3C1308 537.9 1315.3 542.7 1323.8 545.8C1332.2 548.9 1343 553.1 1350.9 556C1358.8 558.8 1364.4 559.3 1371.2 562.7C1377.9 566.1 1384.7 571.7 1391.5 576.3C1398.2 580.8 1405 586.4 1411.8 589.8C1418.5 593.2 1424.2 595.4 1432.1 596.6C1440 597.7 1448.4 596 1459.2 596.6C1469.9 597.1 1490.2 599.4 1496.4 599.9"/><path d="M882.2 88C882.7 91.9 885 101.8 885.5 111.7C886.1 121.5 885.5 136.2 885.5 147.2C885.5 158.2 885 167.2 885.5 177.7C886.1 188.1 886.4 197.7 888.9 209.8C891.5 221.9 896 237.5 900.8 250.4C905.6 263.4 914 275.2 917.7 287.7C921.4 300.1 920.5 313 922.8 324.9C925 336.7 929 346.9 931.2 358.7C933.5 370.6 936.3 384.7 936.3 396C936.3 407.2 933.5 415.8 931.2 426.4C929 437.1 924.7 453.3 922.8 459.9C920.8 466.6 922.5 460.4 919.4 466.3C916.3 472.1 907.5 486.3 904.1 495C900.8 503.8 900.2 509.7 899.1 518.7C897.9 527.8 899.6 539.6 897.4 549.2C895.1 558.8 890.9 568.6 885.5 576.3C880.2 583.9 870.6 589.2 865.2 594.9C859.9 600.5 856.2 605.6 853.4 610.1C850.6 614.6 849.2 620 848.3 621.9"/><path d="M1086.9 -3.4C1087.5 2.8 1089.2 22 1090.3 33.8C1091.4 45.7 1092 56.4 1093.7 67.7C1095.4 79 1097.6 90.2 1100.4 101.5C1103.3 112.8 1107.2 125.8 1110.6 135.4C1114 145 1118.2 150.6 1120.7 159.1C1123.3 167.5 1124.7 176 1125.8 186.1C1126.9 196.3 1127.8 208.7 1127.5 220C1127.2 231.3 1125.8 243.7 1124.1 253.8C1122.4 264 1119 272.4 1117.4 280.9C1115.7 289.4 1114.3 295 1114 304.6C1113.7 314.2 1115.7 327.1 1115.7 338.4C1115.7 349.7 1115.1 362.1 1114 372.3C1112.8 382.4 1109.5 389.2 1108.9 399.3C1108.3 409.5 1110 423.1 1110.6 433.2C1111.1 443.3 1111.4 451.9 1112.3 459.9C1113.1 468 1114.8 472.3 1115.7 481.5C1116.5 490.7 1116.8 506.9 1117.4 515.3C1117.9 523.8 1118.5 523.8 1119 532.3C1119.6 540.7 1119.9 557.6 1120.7 566.1C1121.6 574.6 1121.3 578 1124.1 583C1126.9 588.1 1132.6 592.1 1137.7 596.6C1142.7 601.1 1149.2 605.9 1154.6 610.1C1159.9 614.3 1167.3 620 1169.8 621.9"/><path d="M1120.7 556C1119.6 557.1 1118.2 558.8 1114 562.7C1109.7 566.7 1099.9 573.4 1095.4 579.6C1090.8 585.8 1089 592.9 1086.9 599.9C1084.8 607 1083.5 618.3 1082.8 621.9"/><path d="M1327.2 -3.4C1330.6 1.7 1340.7 15.2 1347.5 27.1C1354.2 38.9 1360.5 54.7 1367.8 67.7C1375.1 80.7 1384.1 94.5 1391.5 104.9C1398.8 115.3 1405 121.8 1411.8 130.3C1418.5 138.8 1425.9 146.9 1432.1 155.7C1438.3 164.4 1444.8 172.6 1449 182.7C1453.2 192.9 1455.5 206.4 1457.5 216.6C1459.4 226.7 1459.4 234.6 1460.8 243.7C1462.3 252.7 1464 262.3 1465.9 270.7C1467.9 279.2 1469.9 288.5 1472.7 294.4C1475.5 300.3 1478.9 303.7 1482.8 306.3C1486.8 308.8 1494.1 309.1 1496.4 309.7"/><path d="M1482.8 302.9C1478.9 304 1468.7 306.6 1459.2 309.7C1449.6 312.8 1435.5 316.7 1425.3 321.5C1415.2 326.3 1407.3 333.3 1398.2 338.4C1389.2 343.5 1378.8 348 1371.2 352C1363.6 355.9 1355.7 360.4 1352.6 362.1"/><path d="M1339 321.5C1341.6 324.9 1350 334.5 1354.2 341.8C1358.5 349.1 1361.9 357 1364.4 365.5C1366.9 374 1368.1 383 1369.5 392.6C1370.9 402.2 1372 411.8 1372.9 423C1373.7 434.3 1374.4 447.3 1374.6 459.9C1374.7 472.5 1374.4 486.4 1373.9 498.4C1373.3 510.5 1371.9 521.8 1371.2 532.3C1370.4 542.7 1369.8 556.2 1369.5 561"/><path d="M784 165C783.9 169.1 783.3 183 783 189.9C782.6 196.8 783.5 200.6 782 206.5C780.4 212.3 776.4 218.6 773.7 225.1C770.9 231.7 767.8 238.3 765.4 245.9C762.9 253.5 760.9 263.2 759.1 270.8C757.4 278.4 756.7 284.6 755 291.5C753.3 298.4 750.1 305.4 748.8 312.3C747.4 319.2 746.5 327.5 746.7 333C746.9 338.6 748.9 343.2 749.8 345.5C750.7 347.7 751.3 343.7 752.3 346.6C753.2 349.5 755.2 357.4 755.5 362.8C755.8 368.2 755.2 373 753.9 378.9C752.5 384.9 749.6 392.4 747.4 398.4C745.3 404.3 743.4 408.9 740.9 414.6C738.5 420.2 735.5 426.7 732.8 432.4C730.2 438 728 443.4 724.8 448.6C721.5 453.7 717.2 458.6 713.4 463.1C709.6 467.7 705.3 471.2 702.1 476.1C698.9 480.9 695.9 486.9 694 492.3C692.1 497.7 691.4 504.2 690.8 508.5C690.1 512.8 692.6 512.9 689.9 518C687.3 523.1 679.1 532.4 674.9 539C670.7 545.6 666.7 550.3 664.7 557.6C662.8 565 662.8 576 663 583C663.3 590.1 666.7 593.5 666.4 599.9C666.1 606.4 662.2 618.3 661.3 621.9"/><path d="M518.5 215.8C520.2 215.3 524.7 213.6 528.8 212.7C533 211.8 536.4 211.4 543.4 210.6C550.3 209.9 562.7 208.4 570.3 208.1C577.9 207.9 583.6 208.2 589 209.2C594.4 210.1 598 211.8 602.5 213.7C607 215.7 612 218.4 616 221C620 223.6 622.9 226.9 626.3 229.3C629.8 231.7 633.3 233.8 636.7 235.5C640.2 237.2 642.6 238.1 647.1 239.7C651.6 241.2 658.5 242.6 663.7 244.8C668.9 247.1 673.7 250.6 678.2 253.1C682.7 255.7 687.2 257.8 690.7 260.4C694.1 263 696.2 266.3 699 268.7C701.7 271.1 703.8 273.7 707.3 274.9C710.7 276.1 714.2 276.1 719.7 276C725.2 275.8 734.2 274.4 740.5 273.9C746.7 273.4 751.5 273 757.1 272.9C762.6 272.7 770.9 272.9 773.7 272.9"/><path d="M698.6 16.9C694.6 18.6 682.2 24.3 674.9 27.1C667.6 29.9 659.9 31 654.6 33.8C649.3 36.7 648.7 38.9 643.1 44C637.4 49.1 627.8 57.5 620.7 64.3C613.6 71.1 606.6 77.8 600.4 84.6C594.2 91.4 588 99.3 583.5 104.9C579 110.6 575.6 113.4 573.4 118.4C571.1 123.5 570.7 127.4 570 135.4C569.3 143.4 569.3 154.4 569.3 166.5C569.3 178.6 569.9 201.2 570 208.1"/><path d="M463.4 30.5C461.6 37.5 453.4 60.9 452.5 72.8C451.7 84.6 455.9 95 458.3 101.5C460.7 108 462.2 108.9 466.8 111.7C471.3 114.5 479.4 115.1 485.4 118.4C491.3 121.8 496.6 126.9 502.3 132C507.9 137.1 514.7 142.7 519.2 148.9C523.7 155.1 526.5 162.4 529.4 169.2C532.2 176 534.3 182.6 536.1 189.5C537.9 196.4 539.5 207 540.2 210.5"/><path d="M518.5 215.8C516 217 508.1 219.8 503.9 223.1C499.8 226.3 496.2 230.7 493.6 235.5C491 240.4 489.9 245.9 488.4 252.1C486.8 258.3 485.4 265.6 484.2 272.9C483 280.1 482.2 288.4 481.1 295.7C480.1 302.9 478.7 310.5 478 316.4C477.3 322.3 476.5 326.1 477 330.9C477.5 335.8 480.1 339.6 481.1 345.5C482.2 351.3 482.3 359.3 483.2 366.2C484.1 373.1 485.4 380 486.3 387C487.2 393.9 487.8 402.8 488.4 407.7C489 412.6 488.2 413.2 490 416.2C491.9 419.2 496.5 422.4 499.7 425.9C502.9 429.4 506.5 433.2 509.4 437.2C512.4 441.3 514.3 446.1 517.5 450.2C520.8 454.2 524.5 458.6 528.9 461.5C533.2 464.5 538.3 465.8 543.4 468C548.6 470.2 554.5 472.3 559.6 474.5C564.7 476.6 570.4 478.5 574.2 480.9C578 483.4 580.1 486.1 582.3 489C584.4 492 585 496.1 587.1 498.8C589.3 501.5 591.5 503.9 595.2 505.2C599 506.6 604.9 507.4 609.8 506.9C614.7 506.3 619.5 503.7 624.4 502C629.2 500.2 634.4 497.5 638.9 496.3C643.5 495.1 647 494.3 651.9 494.7C656.8 495.1 663.2 496.7 668.1 498.8C672.9 500.8 677.3 504.4 681 506.9C684.8 509.3 689.1 512.2 690.8 513.3"/><path d="M211.5 -3.4C212.4 2.8 214.3 22 216.6 33.8C218.8 45.7 221.7 57 225.1 67.7C228.4 78.4 232.7 89.7 236.9 98.1C241.1 106.6 244.8 112.2 250.4 118.4C256.1 124.7 265.1 129.7 270.7 135.4C276.4 141 280.9 146.1 284.3 152.3C287.7 158.5 288.8 166.7 291 172.6C293.3 178.5 293.3 183.3 297.8 187.8C302.3 192.3 310.8 195.4 318.1 199.7C325.4 203.9 335 208.7 341.8 213.2C348.6 217.7 353.6 222.8 358.7 226.7C363.8 230.7 367.2 233.8 372.3 236.9C377.3 240 380.7 242.3 389.2 245.4C397.6 248.5 411.7 253 423 255.5C434.3 258 446.7 259.5 456.9 260.6C467 261.7 478.9 262.2 483.9 262.3C489 262.3 486.8 261.1 487.3 260.8"/><path d="M358.7 37.2C358.2 42.3 356.5 57 355.3 67.7C354.2 78.4 353.6 90.2 352 101.5C350.3 112.8 347.4 125.2 345.2 135.4C342.9 145.5 339 154.5 338.4 162.4C337.9 170.3 339.5 176 341.8 182.7C344.1 189.5 349.7 196.3 352 203.1C354.2 209.8 355.3 215.5 355.3 223.4C355.3 231.3 353.6 242.5 352 250.4C350.3 258.3 347.4 262.8 345.2 270.7C342.9 278.6 341.8 289.4 338.4 297.8C335 306.3 328 312.5 324.9 321.5C321.8 330.5 320.7 347.3 319.8 352C319 356.6 319.5 344.8 319.8 349.5C320.1 354.2 320.7 368.7 321.5 380C322.3 391.3 324.9 405.9 324.9 417.2C324.9 428.5 324.3 438.6 321.5 447.7C318.7 456.7 310.5 462.9 308 471.3C305.4 479.8 306.3 488.3 306.3 498.4C306.3 508.6 309.4 522.1 308 532.3C306.6 542.4 300.6 550.9 297.8 559.3C295 567.8 289.9 575.7 291 583C292.2 590.4 298.7 596.8 304.6 603.3C310.5 609.8 322.9 618.8 326.6 621.9"/><path d="M-1.7 396.9C2 396.3 11.6 394.6 20.3 393.5C29 392.4 40.6 390.7 50.8 390.1C60.9 389.6 71.1 389.6 81.2 390.1C91.4 390.7 102.7 391.3 111.7 393.5C120.7 395.8 128 401.1 135.4 403.7C142.7 406.2 148.3 408.2 155.7 408.7C163 409.3 171.5 409.6 179.4 407C187.3 404.5 195.7 398 203.1 393.5C210.4 389 215.5 383.4 223.4 380C231.3 376.6 242.5 374.9 250.4 373.2C258.3 371.5 264.5 373.2 270.7 369.8C276.9 366.4 282 356.6 287.7 352.9C293.3 349.2 298.4 349 304.6 347.8C310.8 346.7 317 345.3 324.9 346.1C332.8 347 344.6 351.2 352 352.9C359.3 354.6 362.7 356.8 368.9 356.3C375.1 355.7 383 349.5 389.2 349.5C395.4 349.5 400.5 353.7 406.1 356.3C411.7 358.8 416.8 363.6 423 364.7C429.2 365.9 434.9 364.2 443.3 363.1C451.8 361.9 466.5 358.5 473.8 358C481.1 357.4 485.1 359.4 487.3 359.7"/><path d="M533.7 443.7C533.6 447.8 533.5 461.4 532.9 468C532.3 474.6 532.5 477.2 529.9 483.2C527.3 489.2 523 497.4 517.5 504C511.9 510.5 502.9 516.8 496.7 522.6C490.5 528.5 483.9 533.4 480.1 539.2C476.3 545.1 475.3 551.7 473.9 557.9C472.5 564.1 474.9 571.1 471.8 576.6C468.7 582.1 461.5 588 455.2 591.1C449 594.2 441.4 594.6 434.5 595.3C427.6 596 420.7 594.6 413.7 595.3C406.8 596 398.9 597.3 393 599.4C387.1 601.5 382.8 604.1 378.5 607.7C374.1 611.3 369 618.9 367.1 621.2"/><path d="M632.5 375.7C634.6 376.3 640.8 378.9 645.4 378.9C650 378.9 655.4 376.5 660 375.7C664.6 374.9 667.5 373.8 672.9 374.1C678.3 374.4 685.1 376.3 692.4 377.3C699.7 378.4 709.4 379.5 716.7 380.6C723.9 381.6 730.2 383.5 736.1 383.8C742 384.1 747.4 383 752.3 382.2C757.1 381.4 758.9 380.8 765.2 378.9C771.5 377.1 783.6 373.2 790 370.9C796.4 368.5 799.3 366.2 803.5 364.7C807.7 363.3 813.4 362.8 815.3 362.4"/><path d="M-1.7 15.2C0.8 13.8 8.7 9.6 13.5 6.8C18.3 3.9 24.8 -0.3 27.1 -1.7"/><path d="M480.6 -1.7 L477.9 10.2"/><path d="M473.8 8.5C478.3 7.5 491.8 4 500.9 2.7C509.9 1.4 518.3 0.5 527.9 0.7C537.5 0.9 549.4 2.5 558.4 4.1C567.4 5.6 574.2 9.8 582.1 10.2C590 10.5 598.4 8.1 605.8 6.1C613.1 4.1 622.7 -0.4 626.1 -1.7"/><path d="M690.8 513.3 L700.5 518"/></g></g>
<defs>
<g id="pm"><path d="M-3 7.740 L0 11.500 L3 7.740 A8.300 8.300 0 1 0 -3 7.740Z" fill="#6cb656"/><path d="M-1 -5 L2.600 3.800 H-4.400 Z" fill="#fff" stroke="none"/><path d="M2.600 -1.800 L5.200 3.800 H2.300 L1.100 0.500Z" fill="#dff0d8" stroke="none"/></g>
<g id="pt"><path d="M-3 7.740 L0 11.500 L3 7.740 A8.300 8.300 0 1 0 -3 7.740Z" fill="#6cb656"/><path d="M-2 -6 L2 1 H0.600 V4.500 H-1 V1 H-6 Z M3.500 -3 L6.200 2 H4.200 V4.500 H3 V2 H1.800Z" fill="#fff"/></g>
<g id="pc"><path d="M-3 7.740 L0 11.500 L3 7.740 A8.300 8.300 0 1 0 -3 7.740Z" fill="#6cb656"/><path d="M-5.500 4 V-3.500 H-3.800 V-2 H-2.400 V-4.500 H2.400 V-2 H3.800 V-3.500 H5.500 V4 H1.500 V1 H-1.500 V4Z" fill="#fff"/></g>
<g id="ps"><path d="M-3 7.740 L0 11.500 L3 7.740 A8.300 8.300 0 1 0 -3 7.740Z" fill="#6a8fe8"/><circle r="4.600" cy="-0.500" fill="none" stroke="#fff" stroke-width="1.500"/><path d="M-3 5 L-1.500 2.500 H1.500 L3 5" fill="none" stroke="#fff" stroke-width="1.300"/><circle r="1.200" cy="-0.500" fill="#fff"/></g>
<g id="pa"><path d="M-3 7.740 L0 11.500 L3 7.740 A8.300 8.300 0 1 0 -3 7.740Z" fill="#6a8fe8"/><path d="M0 -6.500 L1 -2.500 L6 0.500 V2 L1 0.500 L0.700 3.500 L2.300 5 V6 L0 5.300 L-2.300 6 V5 L-0.700 3.500 L-1 0.500 L-6 2 V0.500 L-1 -2.500Z" fill="#fff"/></g>
<g id="hot" stroke="none"><rect x="3" y="-12" width="16" height="8" rx="4" fill="#ee5a66"/><text x="11" y="-5.800" font-size="5.500" font-weight="bold" fill="#fff" text-anchor="middle">HOT</text></g>
</defs>
<style>.mt{font-size:11.200px;fill:#8b9198;dominant-baseline:central}.mk{font-size:12px;fill:#2e2e2e;dominant-baseline:central}.md{font-size:13.600px;fill:#8a8d91;dominant-baseline:central}.mc{font-size:17px;fill:#262626;dominant-baseline:central}.mb{font-size:12px;fill:#2f55a4;dominant-baseline:central}.mg{font-size:11.800px;fill:#4d9a3c;dominant-baseline:central}.mh{paint-order:stroke;stroke:#f5f3f0;stroke-width:2px;stroke-linejoin:round}</style>
<g class="mh">
<text class="mt" x="33.8" y="70.4" text-anchor="middle">陆家坞</text>
<text class="mt" x="143.8" y="76.1" text-anchor="middle">太平桥</text>
<text class="mt" x="202.4" y="76.8" text-anchor="middle">百丈镇</text>
<text class="mt" x="235.9" y="64.3" text-anchor="middle">甘岭</text>
<text class="mt" x="192.9" y="97.5" text-anchor="middle">王家堂</text>
<text class="mt" x="291" y="103.2" text-anchor="middle">岩山</text>
<text class="mt" x="73.8" y="111" text-anchor="middle">大塘</text>
<text class="mt" x="157.4" y="137.1" text-anchor="middle">山川乡</text>
<text class="mt" x="327.6" y="126.2" text-anchor="middle">淡坞岭</text>
<text class="mt" x="412.9" y="119.5" text-anchor="middle">阳山</text>
<text class="mt" x="10.8" y="188.8" text-anchor="middle">天坪</text>
<text class="mt" x="321.5" y="183.8" text-anchor="middle">杨家坞</text>
<text class="mt" x="449.4" y="188.2" text-anchor="middle">安溪古镇</text>
<text class="mt" x="242" y="225.7" text-anchor="middle">沿照</text>
<text class="mt" x="170.2" y="242" text-anchor="middle">三口</text>
<text class="mt" x="69.4" y="247" text-anchor="middle">临目乡</text>
<text class="mt" x="34.9" y="260.6" text-anchor="middle">道业坪</text>
<text class="mt" x="253.1" y="262.3" text-anchor="middle">大坑塆</text>
<text class="mt" x="161.8" y="287" text-anchor="middle">横里</text>
<text class="mt" x="238.9" y="297.1" text-anchor="middle">南山</text>
<text class="mt" x="88.7" y="314.1" text-anchor="middle">近头</text>
<text class="mt" x="85.6" y="331" text-anchor="middle">太湖源镇</text>
<text class="mt" x="215.9" y="334" text-anchor="middle">井堂</text>
<text class="mt" x="91.4" y="357" text-anchor="middle">寺坞</text>
<text class="mt" x="316.8" y="364.5" text-anchor="middle">岭上</text>
<text class="mt" x="245.7" y="381.7" text-anchor="middle">烘里</text>
<text class="mt" x="200.3" y="419.6" text-anchor="middle">西鸠山</text>
<text class="mt" x="88.7" y="432.5" text-anchor="middle">直坞口</text>
<text class="mt" x="318.8" y="418" text-anchor="middle">铜岭坞村</text>
<text class="mt" x="247.7" y="435.5" text-anchor="middle">板桥镇</text>
<text class="mt" x="244.3" y="455.2" text-anchor="middle">横坞</text>
<text class="mt" x="494.8" y="80.2" text-anchor="middle">下社村</text>
<text class="mt" x="561.8" y="75.1" text-anchor="middle">雷甸镇</text>
<text class="mt" x="521.2" y="94.8" text-anchor="middle">俞家埭</text>
<text class="mt" x="625.4" y="66.7" text-anchor="middle">新安镇</text>
<text class="mt" x="2.7" y="304.6" text-anchor="middle">脚</text>
<text class="mt" x="6.1" y="354.7" text-anchor="middle">令坞</text>
<text class="mt" x="7.4" y="396.6" text-anchor="middle">镇</text>
<text class="mt" x="2.7" y="419" text-anchor="middle">家</text>
<text class="mt" x="76.8" y="465.6" text-anchor="middle">坞里</text>
<text class="mt" x="160.8" y="467.3" text-anchor="middle">荷花塘</text>
<text class="mt" x="337.7" y="483.2" text-anchor="middle">新义乡</text>
<text class="mt" x="407.1" y="473.7" text-anchor="middle">受降镇</text>
<text class="mt" x="430.8" y="495" text-anchor="middle">里戴</text>
<text class="mt" x="65.3" y="502.8" text-anchor="middle">万市镇</text>
<text class="mt" x="177.7" y="504.2" text-anchor="middle">荣公坞</text>
<text class="mt" x="269.7" y="500.8" text-anchor="middle">杜家</text>
<text class="mt" x="101.5" y="543.4" text-anchor="middle">西坎坞</text>
<text class="mt" x="186.1" y="561" text-anchor="middle">凸上</text>
<text class="mt" x="508.6" y="554.9" text-anchor="middle">小岭坞</text>
<text class="mt" x="614.2" y="529.6" text-anchor="middle">义桥镇</text>
<text class="mt" x="50.1" y="602.3" text-anchor="middle">巧坑</text>
<text class="mt" x="148.9" y="613.5" text-anchor="middle">胥口镇</text>
<text class="mt" x="255.5" y="613.5" text-anchor="middle">乌石头</text>
<text class="mt" x="444.3" y="596.6" text-anchor="middle">大源镇</text>
<text class="mt" x="4.1" y="462.2" text-anchor="middle">家</text>
<text class="mt" x="6.1" y="529.9" text-anchor="middle">马岭</text>
<text class="mt" x="6.1" y="567.1" text-anchor="middle">龙岭</text>
<text class="mt" x="673.9" y="100.8" text-anchor="middle">五杭镇</text>
<text class="mt" x="736.8" y="98.1" text-anchor="middle">大麻镇</text>
<text class="mt" x="925.3" y="44.7" text-anchor="middle">南日镇</text>
<text class="mt" x="866.8" y="98.1" text-anchor="middle">长田塍</text>
<text class="mt" x="784.9" y="135.4" text-anchor="middle">沈士镇</text>
<text class="mt" x="841.4" y="238.9" text-anchor="middle">五工段</text>
<text class="mt" x="939.9" y="253.1" text-anchor="middle">新生</text>
<text class="mt" x="703.6" y="32.1" text-anchor="middle">浜</text>
<text class="mt" x="913.5" y="372.9" text-anchor="middle">党湾镇</text>
<text class="mt" x="976.1" y="419" text-anchor="middle">东城村</text>
<text class="mt" x="696.2" y="496.7" text-anchor="middle">岙上沈</text>
<text class="mt" x="752.7" y="599.9" text-anchor="middle">双桥头</text>
<text class="mt" x="652.9" y="615.2" text-anchor="middle">浦阳镇</text>
<text class="mt" x="1098.1" y="24.4" text-anchor="middle">横港乡</text>
<text class="mt" x="1192.8" y="21" text-anchor="middle">北港</text>
<text class="mt" x="1103.8" y="86" text-anchor="middle">东长阡</text>
<text class="mt" x="1203.7" y="88.7" text-anchor="middle">石基</text>
<text class="mt" x="1102.1" y="138.1" text-anchor="middle">谈桥乡</text>
<text class="mt" x="1081.8" y="225.1" text-anchor="middle">南俞家场</text>
<text class="mt" x="992.1" y="310.3" text-anchor="middle">宁北</text>
<text class="mt" x="1008.4" y="352.6" text-anchor="middle">共联</text>
<text class="mt" x="1384" y="336.7" text-anchor="middle">西片</text>
<text class="mt" x="1370.2" y="379.7" text-anchor="middle">小曹娥镇</text>
<text class="mt" x="1243.2" y="445" text-anchor="middle">东大丘</text>
<text class="mt" x="1295" y="442.7" text-anchor="middle">临山镇</text>
<text class="mt" x="995.5" y="1" text-anchor="middle">乡家村</text>
<text class="mt" x="1077.4" y="2" text-anchor="middle">圈港</text>
<text class="mt" x="872" y="0.3" text-anchor="middle">朝北屋</text>
<text class="mt" x="702" y="-0.7" text-anchor="middle">陇村陈家浜</text>
<text class="mt" x="1137" y="458.5" text-anchor="middle">七六丘</text>
<text class="mt" x="1217.2" y="484.9" text-anchor="middle">谢塘镇</text>
<text class="mt" x="1031.7" y="488.3" text-anchor="middle">建海村</text>
<text class="mt" x="1288.3" y="537.3" text-anchor="middle">驿亭镇</text>
<text class="mt" x="1262.9" y="565.1" text-anchor="middle">群英村</text>
<text class="mt" x="1328.9" y="579.6" text-anchor="middle">四联村</text>
<text class="mt" x="1353.2" y="594.9" text-anchor="middle">下单</text>
<text class="mt" x="1237.5" y="603.3" text-anchor="middle">寺前村</text>
<text class="mt" x="1072.7" y="578" text-anchor="middle">陶堰街道</text>
<text class="mt" x="1066.6" y="613.5" text-anchor="middle">小辂山村</text>
<text class="mt" x="1485.6" y="534" text-anchor="middle">百丈</text>
<text class="md" x="415.6" y="53.5" text-anchor="middle">德清县</text>
<text class="md" x="196.3" y="363.8" text-anchor="middle">临安区</text>
<text class="md" x="418" y="323.2" text-anchor="middle">余杭区</text>
<text class="md" x="558.4" y="278.2" text-anchor="middle">拱墅区</text>
<text class="md" x="545.5" y="337.4" text-anchor="middle">西湖区</text>
<text class="md" x="696.2" y="177.7" text-anchor="middle">临平区</text>
<text class="md" x="865.1" y="273.4" text-anchor="middle">钱塘区</text>
<text class="md" x="664.7" y="415.6" text-anchor="middle">萧山区</text>
<text class="md" x="400.4" y="549.2" text-anchor="middle">富阳区</text>
<text class="md" x="822.1" y="524.8" text-anchor="middle">柯桥区</text>
<text class="md" x="941.6" y="608.4" text-anchor="middle">越城区</text>
<text class="md" x="1026.7" y="84.6" text-anchor="middle">海宁市</text>
<text class="md" x="1258.5" y="71.1" text-anchor="middle">海盐县</text>
<text class="md" x="1190.1" y="565.1" text-anchor="middle">上虞区</text>
<text class="md" x="1438.9" y="561" text-anchor="middle">余姚市</text>
<text class="mc" x="617.4" y="350.3" text-anchor="middle">杭州市</text>
<text class="mc" x="942.9" y="545.8" text-anchor="middle">绍兴市</text>
<use href="#pm" x="117.8" y="102.2"/>
<text class="mk" x="127.9" y="103.6" text-anchor="start">箱子石</text>
<use href="#pm" x="61.9" y="149.6"/>
<text class="mk" x="72.1" y="150.9" text-anchor="start">回峰岭</text>
<use href="#pm" x="85.3" y="177.7"/>
<text class="mk" x="95.4" y="179" text-anchor="start">神会山</text>
<use href="#pm" x="244.3" y="170.2"/>
<text class="mk" x="254.5" y="171.6" text-anchor="start">同岩顶</text>
<use href="#pm" x="411.5" y="160.8"/>
<text class="mk" x="421.7" y="162.1" text-anchor="start">中和山</text>
<use href="#pm" x="76.1" y="220"/>
<text class="mk" x="86.3" y="221.3" text-anchor="start">东瓜罗岗</text>
<use href="#pm" x="321.5" y="243.7"/>
<text class="mk" x="331.7" y="245" text-anchor="start">小五山</text>
<use href="#pm" x="124.5" y="268"/>
<text class="mk" x="134.7" y="269.4" text-anchor="start">上峰岭</text>
<use href="#pm" x="40.6" y="281.6"/>
<text class="mk" x="50.8" y="282.9" text-anchor="start">洋山坞</text>
<use href="#pm" x="141.5" y="314.7"/>
<text class="mk" x="151.6" y="316.1" text-anchor="start">小桃子坞</text>
<use href="#pm" x="-4.1" y="330"/>
<text class="mk" x="6.1" y="331.3" text-anchor="start">白虎尖</text>
<use href="#pm" x="299.8" y="385.8"/>
<text class="mk" x="310" y="387.2" text-anchor="start">石坞山</text>
<use href="#pm" x="444" y="425.4"/>
<text class="mk" x="454.2" y="426.7" text-anchor="start">鸡笼顶</text>
<use href="#pm" x="350.3" y="445"/>
<text class="mk" x="360.4" y="446.4" text-anchor="start">姆岑山</text>
<use href="#pm" x="265.7" y="478.1"/>
<text class="mk" x="275.8" y="479.5" text-anchor="start">平峰山</text>
<use href="#pm" x="244.3" y="521.4"/>
<text class="mk" x="254.5" y="522.8" text-anchor="start">大尖峰</text>
<use href="#pm" x="170.9" y="533.3"/>
<text class="mk" x="181.1" y="534.6" text-anchor="start">老鹰尖</text>
<use href="#pm" x="227.8" y="549.9"/>
<text class="mk" x="237.9" y="551.2" text-anchor="start">鸡笼顶</text>
<use href="#pm" x="100.8" y="571.9"/>
<text class="mk" x="111" y="573.2" text-anchor="start">纱帽山</text>
<use href="#pm" x="314.1" y="589.8"/>
<text class="mk" x="324.2" y="591.1" text-anchor="start">煤湾山</text>
<use href="#pm" x="507.6" y="615.2"/>
<text class="mk" x="517.8" y="616.5" text-anchor="start">小龙岗</text>
<use href="#pm" x="728.4" y="533.3"/>
<text class="mk" x="738.5" y="534.6" text-anchor="start">官山</text>
<use href="#pm" x="734.1" y="569.5"/>
<text class="mk" x="744.3" y="570.8" text-anchor="start">乌峰尖</text>
<use href="#pm" x="805.9" y="591.5"/>
<text class="mk" x="816" y="592.8" text-anchor="start">九岭</text>
<use href="#pm" x="718.9" y="617.5"/>
<text class="mk" x="729" y="618.9" text-anchor="start">骆潭岭</text>
<use href="#pm" x="1277.4" y="134.7"/>
<text class="mk" x="1287.6" y="136" text-anchor="start">白塔山</text>
<use href="#pm" x="1231.7" y="233.5"/>
<text class="mk" x="1241.9" y="234.9" text-anchor="start">小巫子山</text>
<use href="#pm" x="1374.6" y="614.2"/>
<text class="mk" x="1384.7" y="615.5" text-anchor="start">大山</text>
<use href="#pm" x="161.4" y="39.9"/>
<text class="mk" x="162.4" y="56.2" text-anchor="middle">火烧山</text>
<use href="#pm" x="203.1" y="39.9"/>
<text class="mk" x="204.1" y="56.9" text-anchor="middle">香炉山</text>
<use href="#pm" x="269.7" y="37.2"/>
<text class="mk" x="270.7" y="52.1" text-anchor="middle">屋脊山</text>
<use href="#pm" x="374" y="74.5"/>
<text class="mk" x="375" y="93.1" text-anchor="middle">城山</text>
<use href="#pm" x="302.9" y="285"/>
<text class="mk" x="303.9" y="302.2" text-anchor="middle">娘娘山</text>
<use href="#pm" x="104.9" y="378.4"/>
<text class="mk" x="105.9" y="396.6" text-anchor="middle">西湖岗</text>
<use href="#pm" x="753.4" y="480.8"/>
<text class="mk" x="754.4" y="499.4" text-anchor="middle">庙湖山</text>
<use href="#pm" x="420.7" y="405.1"/>
<text class="mk" x="408.8" y="406.1" text-anchor="end">万丈山</text>
<use href="#pm" x="9.5" y="218.3"/>
<text class="mk" x="-2.7" y="235.9" text-anchor="start">岩坞里</text>
<use href="#pm" x="-2.7" y="493.3"/>
<use href="#pm" x="1418.5" y="6.8"/>
<use href="#pm" x="264" y="-6.1"/>
<use href="#pm" x="439.9" y="-6.8"/>
<text class="mg" x="316.4" y="6.8" text-anchor="middle">莫干山风景区</text>
<text class="mk" x="439.9" y="7.4" text-anchor="middle">半山坞</text>
<use href="#pt" x="183.8" y="171.9"/>
<text class="mg" x="183.8" y="190.2" text-anchor="middle">山沟沟景区</text>
<use href="#pc" x="815.3" y="306.3"/>
<text class="mg" x="826.2" y="307.3" text-anchor="start">天王殿</text>
<use href="#pc" x="838" y="336.7"/>
<text class="mg" x="849.2" y="337.7" text-anchor="start">天王殿</text>
<use href="#pt" x="908.4" y="192.9"/>
<text class="mg" x="925.3" y="187.1" text-anchor="start">海宁盐官</text>
<text class="mg" x="925.3" y="199.7" text-anchor="start">观潮景区</text>
<use href="#hot" x="908.4" y="192.9"/>
<use href="#pt" x="862.7" y="457.8"/>
<text class="mg" x="879.6" y="459.2" text-anchor="start">安昌古镇</text>
<use href="#hot" x="862.7" y="457.8"/>
<use href="#pt" x="1112.3" y="402.7"/>
<text class="mg" x="1113.3" y="421.3" text-anchor="middle">杭州湾海上花</text>
<text class="mg" x="1112.3" y="433.9" text-anchor="middle">田景区</text>
<use href="#pt" x="552.3" y="379"/>
<text class="mg" x="563.5" y="374.6" text-anchor="start">杭州少年</text>
<text class="mg" x="563.5" y="386.8" text-anchor="start">儿童公园</text>
<use href="#ps" x="487.3" y="51.4"/>
<text class="mb" x="499.2" y="52.1" text-anchor="start">德清站</text>
<use href="#ps" x="776.4" y="156.7"/>
<text class="mb" x="776.4" y="175" text-anchor="middle">海宁西站</text>
<use href="#ps" x="620.7" y="303.9"/>
<text class="mb" x="620.7" y="323.2" text-anchor="middle">杭州东站</text>
<use href="#ps" x="726.7" y="438.3"/>
<text class="mb" x="738.2" y="439.3" text-anchor="start">夏家桥</text>
<use href="#pa" x="815.3" y="361.4"/>
<text class="mb" x="815.3" y="380" text-anchor="middle">杭州萧山</text>
<text class="mb" x="815.3" y="392.6" text-anchor="middle">国际机场</text>
<use href="#ps" x="903.3" y="497.4"/>
<text class="mb" x="913.5" y="498.4" text-anchor="start">绍兴北站</text>
<use href="#ps" x="1451.4" y="497.4"/>
<text class="mb" x="1451.7" y="515.3" text-anchor="middle">余姚北站</text>
<text class="mb" x="699.6" y="316.4" text-anchor="middle">钱塘江</text>
<text class="mb" x="571.9" y="468" text-anchor="middle" transform="rotate(42 571.9 468)">钱塘江</text>
<text class="mb" x="1060.8" y="289.4" text-anchor="middle" transform="rotate(-12 1060.8 289.4)">钱</text>
<text class="mb" x="1065.6" y="302.2" text-anchor="middle" transform="rotate(-12 1065.6 302.2)">塘</text>
<text class="mb" x="1067.6" y="315.7" text-anchor="middle" transform="rotate(-12 1067.6 315.7)">江</text>
<text x="1376.2" y="490" text-anchor="middle" font-size="13.500" fill="#1e1e1e" style="dominant-baseline:central" transform="rotate(8 1376.2 490)">慈</text>
<text x="1374.6" y="504.2" text-anchor="middle" font-size="13.500" fill="#1e1e1e" style="dominant-baseline:central" transform="rotate(8 1374.6 504.2)">余</text>
<text x="1372.9" y="518" text-anchor="middle" font-size="13.500" fill="#1e1e1e" style="dominant-baseline:central" transform="rotate(8 1372.9 518)">高</text>
<text x="1371.2" y="532.3" text-anchor="middle" font-size="13.500" fill="#1e1e1e" style="dominant-baseline:central" transform="rotate(8 1371.2 532.3)">速</text>
<g transform="translate(492.4 330)" stroke="none"><path d="M-15 -6 Q0 -17 15 -6 L13 -2 Q0 -11 -13 -2Z" fill="#3f7be0"/><path d="M-11 -3 L-9 13 H-6 L-7 -4Z M11 -3 L9 13 H6 L7 -4Z" fill="#4d86e6"/><path d="M-8 -1 Q0 -7 8 -1 V2 Q0 -4 -8 2Z" fill="#9dbcf2"/><rect x="-14" y="12" width="28" height="2.500" fill="#8ecf8a"/></g>
<text class="mk" x="492.4" y="354.7" text-anchor="middle">西溪国家</text>
<text class="mk" x="492.4" y="367.2" text-anchor="middle">湿地公园</text>
</g>
<g transform="translate(58.2 4.4)"><rect x="-12.5" y="-6" width="25" height="12" rx="2" fill="#efa43c" stroke="#dd9026" stroke-width="1"/><text y="3.600" font-size="8.500" fill="#fff" text-anchor="middle">S204</text></g>
<g transform="translate(320.8 47.4)"><rect x="-12.5" y="-6" width="25" height="12" rx="2" fill="#efa43c" stroke="#dd9026" stroke-width="1"/><text y="3.600" font-size="8.500" fill="#fff" text-anchor="middle">S304</text></g>
<g transform="translate(396 81.2)"><rect x="-12.5" y="-6" width="25" height="12" rx="2" fill="#e0605d" stroke="#c94a48" stroke-width="1"/><text y="3.600" font-size="8.500" fill="#fff" text-anchor="middle">G104</text></g>
<g transform="translate(451.8 73.4)"><rect x="-10.5" y="-6" width="21" height="12" rx="2" fill="#4e9b4f" stroke="#3c8340" stroke-width="1"/><rect x="-9" y="-5" width="18" height="1.800" fill="#d9403c"/><text y="3.600" font-size="8.500" fill="#fff" text-anchor="middle">G25</text></g>
<g transform="translate(467 111.3)"><rect x="-10.5" y="-6" width="21" height="12" rx="2" fill="#4e9b4f" stroke="#3c8340" stroke-width="1"/><rect x="-9" y="-5" width="18" height="1.800" fill="#d9403c"/><text y="3.600" font-size="8.500" fill="#fff" text-anchor="middle">G25</text></g>
<g transform="translate(574.6 97.1)"><rect x="-12.5" y="-6" width="25" height="12" rx="2" fill="#efa43c" stroke="#dd9026" stroke-width="1"/><text y="3.600" font-size="8.500" fill="#fff" text-anchor="middle">S304</text></g>
<g transform="translate(354.7 182.7)"><rect x="-10.5" y="-6" width="21" height="12" rx="2" fill="#efa43c" stroke="#dd9026" stroke-width="1"/><text y="3.600" font-size="8.500" fill="#fff" text-anchor="middle">S15</text></g>
<g transform="translate(568.9 166.5)"><rect x="-10.5" y="-6" width="21" height="12" rx="2" fill="#4e9b4f" stroke="#3c8340" stroke-width="1"/><rect x="-9" y="-5" width="18" height="1.800" fill="#f2c037"/><text y="3.600" font-size="8.500" fill="#fff" text-anchor="middle">S13</text></g>
<g transform="translate(443.3 215.6)"><rect x="-12.5" y="-6" width="25" height="12" rx="2" fill="#e0605d" stroke="#c94a48" stroke-width="1"/><text y="3.600" font-size="8.500" fill="#fff" text-anchor="middle">G104</text></g>
<g transform="translate(602.4 213.9)"><rect x="-12.5" y="-6" width="25" height="12" rx="2" fill="#e0605d" stroke="#c94a48" stroke-width="1"/><text y="3.600" font-size="8.500" fill="#fff" text-anchor="middle">G320</text></g>
<g transform="translate(381.7 242.3)"><rect x="-10.5" y="-6" width="21" height="12" rx="2" fill="#4e9b4f" stroke="#3c8340" stroke-width="1"/><rect x="-9" y="-5" width="18" height="1.800" fill="#f2c037"/><text y="3.600" font-size="8.500" fill="#fff" text-anchor="middle">S14</text></g>
<g transform="translate(483.9 266)"><rect x="-15.5" y="-6" width="31" height="12" rx="2" fill="#4e9b4f" stroke="#3c8340" stroke-width="1"/><rect x="-14" y="-5" width="28" height="1.800" fill="#d9403c"/><text y="3.600" font-size="8.500" fill="#fff" text-anchor="middle">G2504</text></g>
<g transform="translate(340.8 272.4)"><rect x="-10.5" y="-6" width="21" height="12" rx="2" fill="#4e9b4f" stroke="#3c8340" stroke-width="1"/><rect x="-9" y="-5" width="18" height="1.800" fill="#f2c037"/><text y="3.600" font-size="8.500" fill="#fff" text-anchor="middle">S43</text></g>
<g transform="translate(412.2 277.5)"><rect x="-12.5" y="-6" width="25" height="12" rx="2" fill="#e0605d" stroke="#c94a48" stroke-width="1"/><text y="3.600" font-size="8.500" fill="#fff" text-anchor="middle">G320</text></g>
<g transform="translate(375.6 328.3)"><rect x="-10.5" y="-6" width="21" height="12" rx="2" fill="#efa43c" stroke="#dd9026" stroke-width="1"/><text y="3.600" font-size="8.500" fill="#fff" text-anchor="middle">S15</text></g>
<g transform="translate(62.6 389.9)"><rect x="-10.5" y="-6" width="21" height="12" rx="2" fill="#4e9b4f" stroke="#3c8340" stroke-width="1"/><rect x="-9" y="-5" width="18" height="1.800" fill="#d9403c"/><text y="3.600" font-size="8.500" fill="#fff" text-anchor="middle">G56</text></g>
<g transform="translate(207.5 390.9)"><rect x="-10.5" y="-6" width="21" height="12" rx="2" fill="#4e9b4f" stroke="#3c8340" stroke-width="1"/><rect x="-9" y="-5" width="18" height="1.800" fill="#d9403c"/><text y="3.600" font-size="8.500" fill="#fff" text-anchor="middle">G56</text></g>
<g transform="translate(486.3 398.7)"><rect x="-15.5" y="-6" width="31" height="12" rx="2" fill="#4e9b4f" stroke="#3c8340" stroke-width="1"/><rect x="-14" y="-5" width="28" height="1.800" fill="#d9403c"/><text y="3.600" font-size="8.500" fill="#fff" text-anchor="middle">G2504</text></g>
<g transform="translate(324.2 437.6)"><rect x="-10.5" y="-6" width="21" height="12" rx="2" fill="#4e9b4f" stroke="#3c8340" stroke-width="1"/><rect x="-9" y="-5" width="18" height="1.800" fill="#f2c037"/><text y="3.600" font-size="8.500" fill="#fff" text-anchor="middle">S43</text></g>
<g transform="translate(473.8 449.4)"><rect x="-12.5" y="-6" width="25" height="12" rx="2" fill="#e0605d" stroke="#c94a48" stroke-width="1"/><text y="3.600" font-size="8.500" fill="#fff" text-anchor="middle">G320</text></g>
<g transform="translate(533 445.7)"><rect x="-10.5" y="-6" width="21" height="12" rx="2" fill="#4e9b4f" stroke="#3c8340" stroke-width="1"/><rect x="-9" y="-5" width="18" height="1.800" fill="#f2c037"/><text y="3.600" font-size="8.500" fill="#fff" text-anchor="middle">S30</text></g>
<g transform="translate(337.7 534.6)"><rect x="-12.5" y="-6" width="25" height="12" rx="2" fill="#e0605d" stroke="#c94a48" stroke-width="1"/><text y="3.600" font-size="8.500" fill="#fff" text-anchor="middle">G320</text></g>
<g transform="translate(288.3 562.7)"><rect x="-10.5" y="-6" width="21" height="12" rx="2" fill="#4e9b4f" stroke="#3c8340" stroke-width="1"/><rect x="-9" y="-5" width="18" height="1.800" fill="#f2c037"/><text y="3.600" font-size="8.500" fill="#fff" text-anchor="middle">S43</text></g>
<g transform="translate(904 69)"><rect x="-10.5" y="-6" width="21" height="12" rx="2" fill="#4e9b4f" stroke="#3c8340" stroke-width="1"/><rect x="-9" y="-5" width="18" height="1.800" fill="#d9403c"/><text y="3.600" font-size="8.500" fill="#fff" text-anchor="middle">G60</text></g>
<g transform="translate(751 131.3)"><rect x="-12.5" y="-6" width="25" height="12" rx="2" fill="#e0605d" stroke="#c94a48" stroke-width="1"/><text y="3.600" font-size="8.500" fill="#fff" text-anchor="middle">G320</text></g>
<g transform="translate(884.7 147.2)"><rect x="-8.5" y="-6" width="17" height="12" rx="2" fill="#4e9b4f" stroke="#3c8340" stroke-width="1"/><rect x="-7" y="-5" width="14" height="1.800" fill="#f2c037"/><text y="3.600" font-size="8.500" fill="#fff" text-anchor="middle">S9</text></g>
<g transform="translate(784.2 197.3)"><rect x="-10.5" y="-6" width="21" height="12" rx="2" fill="#4e9b4f" stroke="#3c8340" stroke-width="1"/><rect x="-9" y="-5" width="18" height="1.800" fill="#d9403c"/><text y="3.600" font-size="8.500" fill="#fff" text-anchor="middle">G60</text></g>
<g transform="translate(833.9 194.6)"><rect x="-10.5" y="-6" width="21" height="12" rx="2" fill="#4e9b4f" stroke="#3c8340" stroke-width="1"/><rect x="-9" y="-5" width="18" height="1.800" fill="#d9403c"/><text y="3.600" font-size="8.500" fill="#fff" text-anchor="middle">G92</text></g>
<g transform="translate(981.2 183.8)"><rect x="-10.5" y="-6" width="21" height="12" rx="2" fill="#4e9b4f" stroke="#3c8340" stroke-width="1"/><rect x="-9" y="-5" width="18" height="1.800" fill="#d9403c"/><text y="3.600" font-size="8.500" fill="#fff" text-anchor="middle">G92</text></g>
<g transform="translate(735.1 206.4)"><rect x="-12.5" y="-6" width="25" height="12" rx="2" fill="#e0605d" stroke="#c94a48" stroke-width="1"/><text y="3.600" font-size="8.500" fill="#fff" text-anchor="middle">G104</text></g>
<g transform="translate(693.5 228.4)"><rect x="-12.5" y="-6" width="25" height="12" rx="2" fill="#efa43c" stroke="#dd9026" stroke-width="1"/><text y="3.600" font-size="8.500" fill="#fff" text-anchor="middle">S101</text></g>
<g transform="translate(663 244.3)"><rect x="-15.5" y="-6" width="31" height="12" rx="2" fill="#4e9b4f" stroke="#3c8340" stroke-width="1"/><rect x="-14" y="-5" width="28" height="1.800" fill="#d9403c"/><text y="3.600" font-size="8.500" fill="#fff" text-anchor="middle">G2504</text></g>
<g transform="translate(689.4 352)"><rect x="-8.5" y="-6" width="17" height="12" rx="2" fill="#4e9b4f" stroke="#3c8340" stroke-width="1"/><rect x="-7" y="-5" width="14" height="1.800" fill="#f2c037"/><text y="3.600" font-size="8.500" fill="#fff" text-anchor="middle">S2</text></g>
<g transform="translate(749.3 345.9)"><rect x="-10.5" y="-6" width="21" height="12" rx="2" fill="#4e9b4f" stroke="#3c8340" stroke-width="1"/><rect x="-9" y="-5" width="18" height="1.800" fill="#d9403c"/><text y="3.600" font-size="8.500" fill="#fff" text-anchor="middle">G60</text></g>
<g transform="translate(744.3 397.6)"><rect x="-15.5" y="-6" width="31" height="12" rx="2" fill="#4e9b4f" stroke="#3c8340" stroke-width="1"/><rect x="-14" y="-5" width="28" height="1.800" fill="#d9403c"/><text y="3.600" font-size="8.500" fill="#fff" text-anchor="middle">G2504</text></g>
<g transform="translate(862.7 416.3)"><rect x="-10.5" y="-6" width="21" height="12" rx="2" fill="#4e9b4f" stroke="#3c8340" stroke-width="1"/><rect x="-9" y="-5" width="18" height="1.800" fill="#d9403c"/><text y="3.600" font-size="8.500" fill="#fff" text-anchor="middle">G92</text></g>
<g transform="translate(921.3 327.3)"><rect x="-8.5" y="-6" width="17" height="12" rx="2" fill="#4e9b4f" stroke="#3c8340" stroke-width="1"/><rect x="-7" y="-5" width="14" height="1.800" fill="#f2c037"/><text y="3.600" font-size="8.500" fill="#fff" text-anchor="middle">S9</text></g>
<g transform="translate(663 37.9)"><rect x="-10.5" y="-6" width="21" height="12" rx="2" fill="#4e9b4f" stroke="#3c8340" stroke-width="1"/><rect x="-9" y="-5" width="18" height="1.800" fill="#f2c037"/><text y="3.600" font-size="8.500" fill="#fff" text-anchor="middle">S13</text></g>
<g transform="translate(663 500.1)"><rect x="-12.5" y="-6" width="25" height="12" rx="2" fill="#efa43c" stroke="#dd9026" stroke-width="1"/><text y="3.600" font-size="8.500" fill="#fff" text-anchor="middle">S103</text></g>
<g transform="translate(664.7 556.6)"><rect x="-10.5" y="-6" width="21" height="12" rx="2" fill="#4e9b4f" stroke="#3c8340" stroke-width="1"/><rect x="-9" y="-5" width="18" height="1.800" fill="#d9403c"/><text y="3.600" font-size="8.500" fill="#fff" text-anchor="middle">G60</text></g>
<g transform="translate(1046.3 124.9)"><rect x="-12.5" y="-6" width="25" height="12" rx="2" fill="#efa43c" stroke="#dd9026" stroke-width="1"/><text y="3.600" font-size="8.500" fill="#fff" text-anchor="middle">S203</text></g>
<g transform="translate(1040.2 143.8)"><rect x="-12.5" y="-6" width="25" height="12" rx="2" fill="#e0605d" stroke="#c94a48" stroke-width="1"/><text y="3.600" font-size="8.500" fill="#fff" text-anchor="middle">G525</text></g>
<g transform="translate(1127.5 186.5)"><rect x="-15.5" y="-6" width="31" height="12" rx="2" fill="#4e9b4f" stroke="#3c8340" stroke-width="1"/><rect x="-14" y="-5" width="28" height="1.800" fill="#d9403c"/><text y="3.600" font-size="8.500" fill="#fff" text-anchor="middle">G1522</text></g>
<g transform="translate(1410.8 131)"><rect x="-10.5" y="-6" width="21" height="12" rx="2" fill="#4e9b4f" stroke="#3c8340" stroke-width="1"/><rect x="-9" y="-5" width="18" height="1.800" fill="#d9403c"/><text y="3.600" font-size="8.500" fill="#fff" text-anchor="middle">G15</text></g>
<g transform="translate(1116.3 341.5)"><rect x="-15.5" y="-6" width="31" height="12" rx="2" fill="#4e9b4f" stroke="#3c8340" stroke-width="1"/><rect x="-14" y="-5" width="28" height="1.800" fill="#d9403c"/><text y="3.600" font-size="8.500" fill="#fff" text-anchor="middle">G1522</text></g>
<g transform="translate(1355.3 405.1)"><rect x="-12.5" y="-6" width="25" height="12" rx="2" fill="#e0605d" stroke="#c94a48" stroke-width="1"/><text y="3.600" font-size="8.500" fill="#fff" text-anchor="middle">G329</text></g>
<g transform="translate(921.4 327.6)"><rect x="-8.5" y="-6" width="17" height="12" rx="2" fill="#4e9b4f" stroke="#3c8340" stroke-width="1"/><rect x="-7" y="-5" width="14" height="1.800" fill="#f2c037"/><text y="3.600" font-size="8.500" fill="#fff" text-anchor="middle">S9</text></g>
<g transform="translate(1490.6 305.6)"><rect x="-12.5" y="-6" width="25" height="12" rx="2" fill="#e0605d" stroke="#c94a48" stroke-width="1"/><text y="3.600" font-size="8.500" fill="#fff" text-anchor="middle">G329</text></g>
<g transform="translate(1115.7 480.1)"><rect x="-15.5" y="-6" width="31" height="12" rx="2" fill="#4e9b4f" stroke="#3c8340" stroke-width="1"/><rect x="-14" y="-5" width="28" height="1.800" fill="#d9403c"/><text y="3.600" font-size="8.500" fill="#fff" text-anchor="middle">G1522</text></g>
<g transform="translate(1432.1 478.1)"><rect x="-10.5" y="-6" width="21" height="12" rx="2" fill="#efa43c" stroke="#dd9026" stroke-width="1"/><text y="3.600" font-size="8.500" fill="#fff" text-anchor="middle">S33</text></g>
<g transform="translate(1088.6 527.2)"><rect x="-10.5" y="-6" width="21" height="12" rx="2" fill="#4e9b4f" stroke="#3c8340" stroke-width="1"/><rect x="-9" y="-5" width="18" height="1.800" fill="#d9403c"/><text y="3.600" font-size="8.500" fill="#fff" text-anchor="middle">G92</text></g>
<g transform="translate(1238.2 531.6)"><rect x="-12.5" y="-6" width="25" height="12" rx="2" fill="#e0605d" stroke="#c94a48" stroke-width="1"/><text y="3.600" font-size="8.500" fill="#fff" text-anchor="middle">G329</text></g>
<g transform="translate(1127.5 589.8)"><rect x="-12.5" y="-6" width="25" height="12" rx="2" fill="#e0605d" stroke="#c94a48" stroke-width="1"/><text y="3.600" font-size="8.500" fill="#fff" text-anchor="middle">G104</text></g>
<g transform="translate(1157.3 609.4)"><rect x="-15.5" y="-6" width="31" height="12" rx="2" fill="#4e9b4f" stroke="#3c8340" stroke-width="1"/><rect x="-14" y="-5" width="28" height="1.800" fill="#d9403c"/><text y="3.600" font-size="8.500" fill="#fff" text-anchor="middle">G1522</text></g>
<g transform="translate(1450 600.6)"><rect x="-12.5" y="-6" width="25" height="12" rx="2" fill="#efa43c" stroke="#dd9026" stroke-width="1"/><text y="3.600" font-size="8.500" fill="#fff" text-anchor="middle">S318</text></g>
<g transform="translate(1487.9 583)"><rect x="-12.5" y="-6" width="25" height="12" rx="2" fill="#e0605d" stroke="#c94a48" stroke-width="1"/><text y="3.600" font-size="8.500" fill="#fff" text-anchor="middle">G228</text></g>
<g transform="translate(1371.2 458.5)"><rect x="-8.5" y="-6" width="17" height="12" rx="2" fill="#4e9b4f" stroke="#3c8340" stroke-width="1"/><rect x="-7" y="-5" width="14" height="1.800" fill="#f2c037"/><text y="3.600" font-size="8.500" fill="#fff" text-anchor="middle">S8</text></g>
<g transform="translate(148.9 -2)"><rect x="-12.5" y="-6" width="25" height="12" rx="2" fill="#e0605d" stroke="#c94a48" stroke-width="1"/><text y="3.600" font-size="8.500" fill="#fff" text-anchor="middle">G235</text></g>
<g transform="translate(576 329)"><g fill="none" stroke="#f0392b"><path d="M-14 -16 A21 21 0 0 1 14 -16" stroke-width="3.500" opacity=".55"/><path d="M-17 -21 A27 27 0 0 1 17 -21" stroke-width="3" opacity=".32"/><path d="M-19 -26 A33 33 0 0 1 19 -26" stroke-width="2.500" opacity=".16"/><g transform="rotate(120)"><path d="M-14 -16 A21 21 0 0 1 14 -16" stroke-width="3.500" opacity=".55"/><path d="M-17 -21 A27 27 0 0 1 17 -21" stroke-width="3" opacity=".32"/><path d="M-19 -26 A33 33 0 0 1 19 -26" stroke-width="2.500" opacity=".16"/></g><g transform="rotate(240)"><path d="M-14 -16 A21 21 0 0 1 14 -16" stroke-width="3.500" opacity=".55"/><path d="M-17 -21 A27 27 0 0 1 17 -21" stroke-width="3" opacity=".32"/><path d="M-19 -26 A33 33 0 0 1 19 -26" stroke-width="2.500" opacity=".16"/></g></g><circle r="15.500" fill="#ea3323"/><text y="4.500" font-size="12.500" font-weight="bold" fill="#1a0a08" text-anchor="middle">23</text></g>
</svg>
 <div style="position:absolute;left:10px;top:10px;width:690px;height:28px;background:#fff;border:1px solid #d5d9e4;border-radius:2px;box-shadow:0 1px 2px rgba(0,0,0,.08)"><div class="abs" style="left:15px;top:0;line-height:27px;font-size:12px;color:#bfc3cc">请输入内容</div></div>
 <div style="position:absolute;left:1382px;top:10px;width:101px;height:32px;background:#4f80f6;border-radius:3px;color:#fff;font-size:12px;line-height:32px"><span class="abs" style="left:16px;top:0;-webkit-text-stroke:.3px #fff">巡检状态</span><svg style="position:absolute;left:74px;top:13px" width="10" height="7" viewBox="0 0 10 7"><path d="M1 1 L5 5 L9 1" fill="none" stroke="#fff" stroke-width="1.100"/></svg></div>
</div>
<!--RIGHTPANEL-->
<div class="card" style="left:1783px;top:242px;width:756px;height:658px">
 <div class="abs" style="left:20px;top:20px;font-size:16px;line-height:22px;color:#222;-webkit-text-stroke:.2px #222">待办任务（13）</div>
 <div class="abs" style="left:709px;top:20px;font-size:14px;line-height:20px;color:#409eff">更多</div>
 <div class="li" style="top:58px"><u>2021-08-25 17:03</u> 【未获取到站点数据<i> - 7</i>】,请 <b>评价</b>;</div>
 <div class="li" style="top:91px"><u>2021-08-25 17:02</u> 【未获取到站点数据<i> - 8</i>】,请 <b>评价</b>;</div>
 <div class="li" style="top:125px"><u>2021-08-25 17:01</u> 【未获取到站点数据<i> - 9</i>】,请 <b>评价</b>;</div>
 <div class="li" style="top:158px"><u>2021-08-25 17:00</u> 【未获取到站点数据<i> - 10</i>】,请 <b>评价</b>;</div>
 <div class="li" style="top:192px"><u>2021-08-25 16:59</u> 【未获取到站点数据<i> - 11</i>】,请 <b>评价</b>;</div>
 <div class="li" style="top:225px"><u>2021-08-24 09:03</u> 【未获取到站点数据<i> - 阿萨德</i>】员工3已提交完工,请 <b>确认完工</b>;</div>
 <div class="li" style="top:258px"><u>2021-08-23 15:22</u> 【未获取到站点数据<i> - 橙V吧橙V</i>】,请 <b>评价</b>;</div>
 <div class="li" style="top:292px"><u>2021-08-23 15:06</u> 【未获取到站点数据<i> - CVBS</i>】,请 <b>评价</b>;</div>
 <div class="li" style="top:325px"><u>2021-08-23 15:01</u> 【未获取到站点数据<i> - 梵蒂冈</i>】,请 <b>评价</b>;</div>
 <div class="li" style="top:358px"><u>2021-08-23 14:42</u> 【未获取到站点数据<i> - CVBS</i>】,请 <b>评价</b>;</div>
 <div class="abs" style="left:0;width:756px;text-align:center;top:400px;font-size:14px;line-height:20px;color:#606266">没有更多了</div>
</div>
</body>
</html>
